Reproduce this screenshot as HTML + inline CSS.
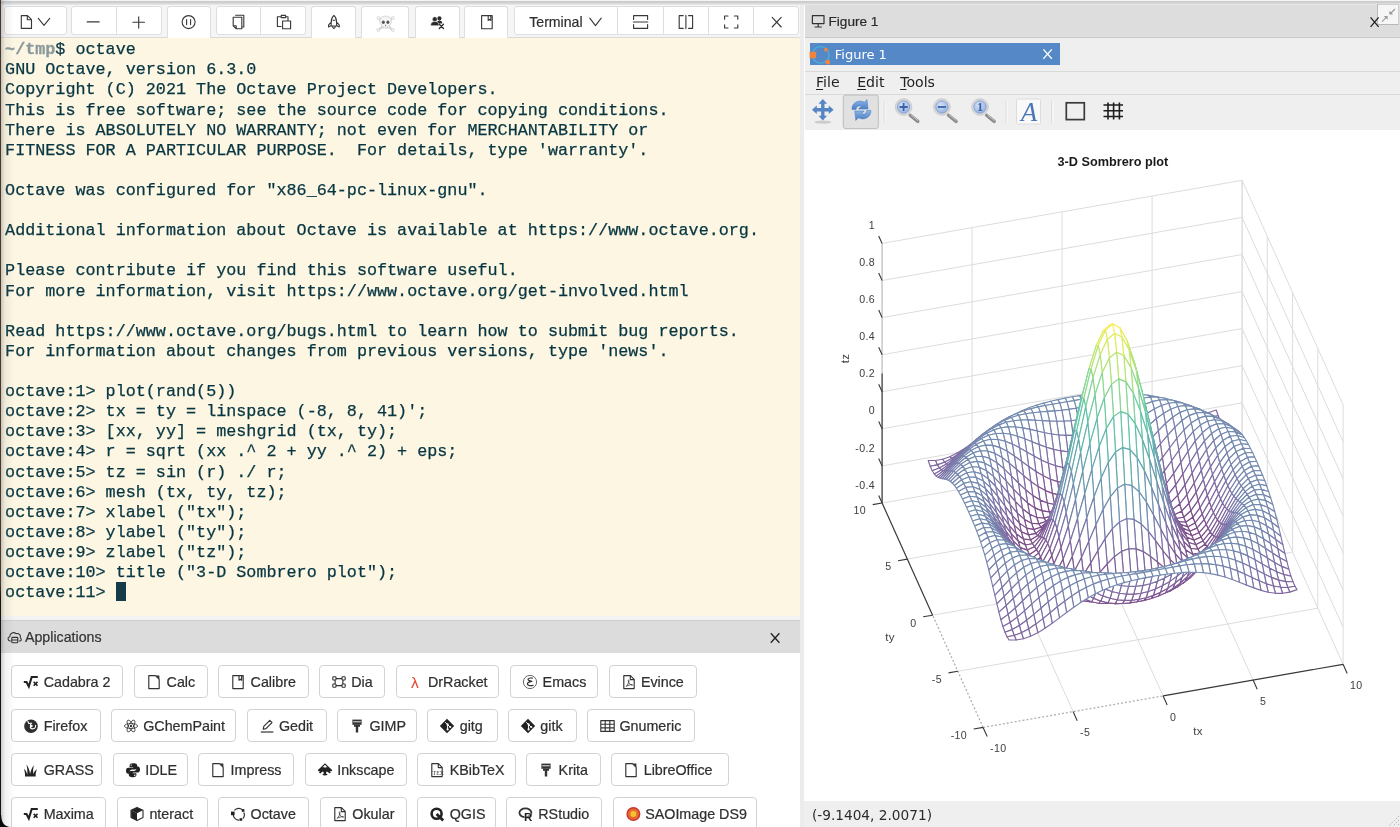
<!DOCTYPE html>
<html lang="en"><head><meta charset="utf-8"><title>Figure 1</title>
<style>
*{box-sizing:border-box;margin:0;padding:0}
html,body{width:1400px;height:827px;overflow:hidden;background:#fff}
body{position:relative;font-family:"Liberation Sans",Arial,sans-serif;font-size:14px;color:#333}
#root{position:absolute;left:0;top:0;width:1400px;height:827px;overflow:hidden;will-change:transform}
.abs{position:absolute}
#topstrip{left:0;top:0;width:1400px;height:5px;background:linear-gradient(#f4f4f4 0,#f4f4f4 1px,#c9cbcc 1.2px,#cfd1d2 3.3px,#dfdfdf 3.6px,#e5e5e5 4.6px,#f0f0f0 4.6px)}
#ltool{left:0;top:4.5px;width:800.4px;height:33.3px;background:#f5f5f5;border-bottom:1px solid #dadada}
.tb{position:absolute;top:1.7px;height:29.2px;background:#fff;border:1px solid #dedede;border-radius:3px}
.tb.tab{height:32.4px;border-bottom:none;border-radius:3px 3px 0 0}
.tb i{position:absolute;top:0;bottom:0;width:1px;background:#dedede}
.tb svg{position:absolute;overflow:visible}
#term{left:0;top:37.8px;width:800.4px;height:577.8px;background:#fdf6e3;overflow:hidden}
#term pre{position:absolute;left:5.1px;height:20px;font-family:"Liberation Mono","DejaVu Sans Mono",monospace;font-size:16.75px;line-height:20px;color:#073642;white-space:pre;-webkit-text-stroke:0.25px #073642}
#term pre b{color:#8a9a9b;-webkit-text-stroke:0.3px #8a9a9b}
#cursor{left:115.7px;top:581.7px;width:10px;height:19.7px;background:#153a48}
#lgap{left:0;top:615.6px;width:800.4px;height:4.6px;background:#f3f3f3}
#apphead{left:0;top:620px;width:800.4px;height:33.8px;background:#dcdcdc;border-top:1px solid #cfcfcf;border-bottom:1px solid #cdcdcd}
#apphead span{-webkit-text-stroke:.2px #333;position:absolute;left:25px;top:8px;font-size:14.2px;color:#333;line-height:16px}
#apps{left:0;top:653.4px;width:800.4px;height:174px;background:#fff;overflow:hidden}
.ab{position:absolute;height:33.5px;-webkit-text-stroke:.22px #303030;border:1px solid #d3d3d3;border-radius:4px;background:#fff;font-size:14.3px;line-height:31.4px;color:#303030;white-space:nowrap}
.ab span{position:absolute;top:0}
.ab svg{position:absolute;overflow:visible}
#leftedge{left:0;top:0;width:14px;height:827px;background:linear-gradient(90deg,rgba(0,0,0,0) 0,rgba(0,0,0,0) 1.2px,rgba(90,90,90,.3) 1.2px,rgba(140,140,140,.12) 5px,rgba(200,200,200,0) 14px)}
#leftstrip{left:0;top:0;width:1.2px;height:827px;background:linear-gradient(180deg,#48372c 0,#48372c 584px,#17130f 596px,#17130f 100%)}
#corner{left:0;top:815px;width:12px;height:12px}
#vsep{left:800.4px;top:5px;width:4px;height:822px;background:#ececec}
#fhead{left:805px;top:4.5px;width:595px;height:33.3px;background:#dddddd;border-bottom:1px solid #c9c9c9}
#fbody{left:805px;top:37.8px;width:595px;height:92px;background:#efefef}
#ftab{left:809.6px;top:43.1px;width:250.8px;height:21.8px;background:#5588c6}
.dj{font-family:"DejaVu Sans","Liberation Sans",sans-serif}
.hl{position:absolute;left:805px;width:595px;height:1px;background:#d9d9d9}
#canvas{left:804.3px;top:129.6px;width:596px;height:672px;background:#fff}
svg.plot{position:absolute;left:805px;top:130px}
#status{left:804.3px;top:801.4px;width:596px;height:26px;background:#efefef}
#status span{position:absolute;left:7.6px;top:4.6px;font-size:13.7px;line-height:18px;color:#2b2b2b}
#cornerbox{left:1377.4px;top:3.6px;width:22px;height:21.6px;background:#f6f6f6;border:1px solid #d0d0d0;border-left-color:#b9b9b9;border-bottom-color:#b9b9b9}

</style></head>
<body>
<div id="root">
<div class="abs" id="topstrip"></div>
<div class="abs" id="ltool">
<div class="tb" style="left:3.5px;width:63.0px"></div>
<div class="tb" style="left:70.5px;width:91.0px"><i style="left:44.2px"></i></div>
<div class="tb tab" style="left:166.5px;width:44.9px"></div>
<div class="tb" style="left:215.7px;width:90.3px"><i style="left:43.8px"></i></div>
<div class="tb tab" style="left:311.4px;width:45.0px"></div>
<div class="tb tab" style="left:361.4px;width:47.9px"></div>
<div class="tb tab" style="left:415.0px;width:44.7px"></div>
<div class="tb tab" style="left:464.3px;width:43.6px"></div>
<div class="tb" style="left:513.6px;width:285.0px"><i style="left:102.8px"></i><i style="left:148.2px"></i><i style="left:193.2px"></i><i style="left:238.5px"></i></div>
<span class="abs" style="left:529.3px;top:9.1px;font-size:14.1px;line-height:16px;color:#303030;-webkit-text-stroke:.2px #303030">Terminal</span>
</div>
<svg class="abs" style="left:0;top:0" width="800" height="38" viewBox="0 0 800 38"><path d="M21.3 15.6h6.2l4 4v8.8h-10.2z M27.3 15.8v4h4" stroke="#383838" stroke-width="1.12" fill="none" stroke-linecap="round" stroke-linejoin="round"/><path d="M38.3 18.4l5.7 7 5.7-7" stroke="#383838" stroke-width="1.12" fill="none" stroke-linecap="round" stroke-linejoin="round"/><path d="M87.2 21.9h12" stroke="#383838" stroke-width="1.12" fill="none" stroke-linecap="round" stroke-linejoin="round"/><path d="M132.9 22.3h11.6M138.7 16.7v11.4" stroke="#383838" stroke-width="1.12" fill="none" stroke-linecap="round" stroke-linejoin="round"/><circle cx="188.6" cy="22.1" r="6.5" stroke="#383838" stroke-width="1.12" fill="none" stroke-linecap="round" stroke-linejoin="round"/><path d="M186.6 19.6v5M190.6 19.6v5" stroke="#383838" stroke-width="1.12" fill="none" stroke-linecap="round" stroke-linejoin="round"/><path d="M235.600 15.300h8.200v11.700h-1.200M233.200 17.200h8.600v11.600h-5.600l-3-3zM236.200 28.600v-2.800h-2.800" stroke="#383838" stroke-width="1.12" fill="none" stroke-linecap="round" stroke-linejoin="round"/><path d="M281.200 26.500h-3.800v-9.800h3M285.600 16.700h2.400v3.400M281.200 15.400h4.400v2.200h-4.400zM282.600 21h8v7.800h-8z" stroke="#383838" stroke-width="1.12" fill="none" stroke-linecap="round" stroke-linejoin="round"/><path d="M333.900 15.400c1.900 1.700 2.700 4 2.700 6.800v3.800h-5.400v-3.800c0-2.800.8-5.100 2.700-6.800zM331.200 22.200l-2.600 2.600v2.200l2.600-1.400M336.600 22.200l2.600 2.600v2.200l-2.600-1.400M332.300 26.200c.3 1.400.8 2.100 1.600 2.400.8-.3 1.300-1 1.600-2.400" stroke="#383838" stroke-width="1.12" fill="none" stroke-linecap="round" stroke-linejoin="round"/><path d="M333.100 20.300h1.600" stroke="#383838" stroke-width="1.100" stroke-linecap="round"/><g transform="translate(0 1)"><path d="M378.600 17.200l14 11.600M392.600 17.200l-14 11.600" stroke="#d9d9d9" stroke-width="2.400" stroke-linecap="round"/><g fill="#f2f2f2" stroke="#cfcfcf" stroke-width=".6"><circle cx="378.300" cy="17" r="1.500"/><circle cx="392.900" cy="17" r="1.500"/><circle cx="378.300" cy="29" r="1.500"/><circle cx="392.900" cy="29" r="1.500"/></g><path d="M385.600 15c3.700 0 5.900 2.400 5.900 5.400 0 1.900-.9 3.200-2.200 4v2.600h-7.400v-2.600c-1.300-.8-2.200-2.100-2.200-4 0-3 2.200-5.400 5.900-5.400z" fill="#f4f4f4" stroke="#c9c9c9" stroke-width=".7"/><ellipse cx="383.300" cy="21.200" rx="1.500" ry="1.700" fill="#555"/><ellipse cx="387.900" cy="21.200" rx="1.500" ry="1.700" fill="#555"/><path d="M385.600 23.400l-.8 1.600h1.600z" fill="#777"/><path d="M383.600 27v-1.600M385.600 27v-1.600M387.600 27v-1.600" stroke="#bbb" stroke-width=".5"/></g><g fill="#2b2b2b"><circle cx="439.400" cy="18.300" r="2.100"/><path d="M436.600 23.200c.4-1.800 1.400-2.700 2.900-2.700 1.700 0 2.700 1.100 2.900 3.100h-3.200z"/><circle cx="434.800" cy="19.200" r="2.500" stroke="#fff" stroke-width=".6"/><path d="M430.600 25.700c0-3 1.700-4.300 4.200-4.300s4.200 1.300 4.200 4.300z" stroke="#fff" stroke-width=".5"/></g><path d="M439.300 24.300l4.200 4.200M443.500 24.300l-4.200 4.200" stroke="#2b2b2b" stroke-width="1.300" stroke-linecap="round"/><path d="M481.600 15.600h10.600v13.200h-10.600z M488.200 15.800v4.600l1.300-1 1.300 1v-4.600" stroke="#383838" stroke-width="1.12" fill="none" stroke-linecap="round" stroke-linejoin="round"/><path d="M589.800 18.200l5.700 7.400 5.700-7.400" stroke="#383838" stroke-width="1.12" fill="none" stroke-linecap="round" stroke-linejoin="round"/><path d="M633.600 19.400v-3.800h14v3.800M633.600 24.600v3.800h14v-3.800M633.400 22h14.400" stroke="#383838" stroke-width="1.12" fill="none" stroke-linecap="round" stroke-linejoin="round"/><path d="M683.200 15.600h-4v12.800h4M688.600 15.600h4v12.800h-4M685.900 15.400v13.200" stroke="#383838" stroke-width="1.12" fill="none" stroke-linecap="round" stroke-linejoin="round"/><path d="M724.600 19.200v-3.200h3.400M734.400 16h3.400v3.200M737.800 24.800v3.200h-3.400M728 28h-3.400v-3.200" stroke="#383838" stroke-width="1.12" fill="none" stroke-linecap="round" stroke-linejoin="round"/><path d="M772.200 17.400l9 9.600M781.200 17.400l-9 9.600" stroke="#383838" stroke-width="1.12" fill="none" stroke-linecap="round" stroke-linejoin="round"/></svg>
<div class="abs" id="term"><pre style="top:2.2px"><b>~/tmp</b>$ octave</pre><pre style="top:22.2px">GNU Octave, version 6.3.0</pre><pre style="top:42.2px">Copyright (C) 2021 The Octave Project Developers.</pre><pre style="top:63.2px">This is free software; see the source code for copying conditions.</pre><pre style="top:83.2px">There is ABSOLUTELY NO WARRANTY; not even for MERCHANTABILITY or</pre><pre style="top:103.2px">FITNESS FOR A PARTICULAR PURPOSE.  For details, type 'warranty'.</pre><pre style="top:143.2px">Octave was configured for "x86_64-pc-linux-gnu".</pre><pre style="top:183.2px">Additional information about Octave is available at https://www.octave.org.</pre><pre style="top:223.2px">Please contribute if you find this software useful.</pre><pre style="top:244.2px">For more information, visit https://www.octave.org/get-involved.html</pre><pre style="top:284.2px">Read https://www.octave.org/bugs.html to learn how to submit bug reports.</pre><pre style="top:304.2px">For information about changes from previous versions, type 'news'.</pre><pre style="top:344.2px">octave:1&gt; plot(rand(5))</pre><pre style="top:364.2px">octave:2&gt; tx = ty = linspace (-8, 8, 41)';</pre><pre style="top:384.2px">octave:3&gt; [xx, yy] = meshgrid (tx, ty);</pre><pre style="top:404.2px">octave:4&gt; r = sqrt (xx .^ 2 + yy .^ 2) + eps;</pre><pre style="top:425.2px">octave:5&gt; tz = sin (r) ./ r;</pre><pre style="top:445.2px">octave:6&gt; mesh (tx, ty, tz);</pre><pre style="top:465.2px">octave:7&gt; xlabel ("tx");</pre><pre style="top:485.2px">octave:8&gt; ylabel ("ty");</pre><pre style="top:505.2px">octave:9&gt; zlabel ("tz");</pre><pre style="top:525.2px">octave:10&gt; title ("3-D Sombrero plot");</pre><pre style="top:545.2px">octave:11&gt; </pre></div>
<div class="abs" id="cursor"></div>
<div class="abs" id="lgap"></div>
<div class="abs" id="apphead"><span>Applications</span></div>
<div class="abs" id="apps">
<div class="ab" style="left:11.4px;top:11.2px;width:112.0px"><svg width="14" height="16" style="left:12px;top:8px"><path d="M-.2 8h2.700l2.300 4.500 2.900-9.500h6.100" stroke="#222" stroke-width="2.100" fill="none" stroke-linejoin="miter"/><path d="M9.700 7.900l3.800 3.800M13.500 7.900l-3.800 3.800" stroke="#222" stroke-width="1.600" fill="none"/></svg><span style="left:31.3px;top:1.3px">Cadabra 2</span></div>
<div class="ab" style="left:134.3px;top:11.2px;width:73.4px"><svg width="14" height="16" style="left:12px;top:8px"><path d="M1.800 1.600h6.600l3.800 3.800v9.200h-10.400z" stroke="#333" stroke-width="1.15" fill="none" stroke-linecap="round" stroke-linejoin="round"/><path d="M8.600 1.400h3.800v3.800z" fill="#333"/></svg><span style="left:31.3px;top:1.3px">Calc</span></div>
<div class="ab" style="left:218.3px;top:11.2px;width:90.3px"><svg width="14" height="16" style="left:12px;top:8px"><path d="M1.800 1.600h10.400v13h-10.400z M8 1.800v4.400l1.300-1 1.300 1v-4.400" stroke="#333" stroke-width="1.15" fill="none" stroke-linecap="round" stroke-linejoin="round"/></svg><span style="left:31.3px;top:1.3px">Calibre</span></div>
<div class="ab" style="left:319.0px;top:11.2px;width:65.9px"><svg width="14" height="16" style="left:12px;top:8px"><path d="M3.600 4.600h6.800M3.600 11.600h6.800M2.600 5.600c1 1.600 1 3.400 0 5M11.400 5.600c-1 1.600-1 3.400 0 5" stroke="#333" stroke-width="1.100" fill="none"/><g fill="#fff" stroke="#333" stroke-width="1.100"><rect x=".8" y="2.800" width="3.200" height="3.200" rx=".8"/><rect x="10" y="2.800" width="3.200" height="3.200" rx=".8"/><rect x=".8" y="10" width="3.200" height="3.200" rx=".8"/><rect x="10" y="10" width="3.200" height="3.200" rx=".8"/></g></svg><span style="left:31.3px;top:1.3px">Dia</span></div>
<div class="ab" style="left:395.7px;top:11.2px;width:103.7px"><svg width="14" height="16" style="left:12px;top:8px"><text x="2" y="13.500" font-family="Liberation Sans,Arial,sans-serif" font-size="15.500" fill="#e2442f">λ</text></svg><span style="left:31.3px;top:1.3px">DrRacket</span></div>
<div class="ab" style="left:510.3px;top:11.2px;width:87.7px"><svg width="14" height="16" style="left:12px;top:8px"><circle cx="7" cy="8" r="6.600" stroke="#444" stroke-width=".8" fill="none"/><path d="M9.400 4.200c-2.200-.6-4.600.2-4.400 1.400.2 1.200 3 1.200 3.600 1.800-2 .4-4.400 1.400-4.200 2.800.2 1.600 3.600 1.800 5.600 1.200" stroke="#333" stroke-width="1.200" fill="none" stroke-linecap="round"/></svg><span style="left:31.3px;top:1.3px">Emacs</span></div>
<div class="ab" style="left:608.6px;top:11.2px;width:88.0px"><svg width="14" height="16" style="left:12px;top:8px"><path d="M1.800 1.600h6.600l3.800 3.800v9.200h-10.400z M8.300 1.800v3.800h3.800" stroke="#333" stroke-width="1.15" fill="none" stroke-linecap="round" stroke-linejoin="round"/><path d="M4.200 12.400c1.600-1.600 2.600-3.800 2.800-5.800.1-.8-.8-.8-.8 0 .2 2 1.600 3.800 3.800 4.600.8.300.8-.6 0-.6-2 0-4.200.8-5.800 1.800z" stroke="#333" stroke-width=".8" fill="none"/></svg><span style="left:31.3px;top:1.3px">Evince</span></div>
<div class="ab" style="left:11.4px;top:55.2px;width:89.2px"><svg width="14" height="16" style="left:12px;top:8px"><circle cx="7" cy="8.300" r="6.800" fill="#2e2e2e"/><path d="M3.800 3.200c.6 1 .4 1.800 1.200 2.400.8-.4 1.800-.4 2.600-.2-.8.600-1.400 1.200-1.200 2.200h1.800c.2.800-1 1.200-1.800 1-.6 1.400 1 2.400 2.600 2.200 1.800-.2 2.800-1.600 2.600-3.400" stroke="#fff" stroke-width="1.100" fill="none" stroke-linecap="round" stroke-linejoin="round"/></svg><span style="left:31.3px;top:1.3px">Firefox</span></div>
<div class="ab" style="left:110.9px;top:55.2px;width:125.1px"><svg width="14" height="16" style="left:12px;top:8px"><g stroke="#333" stroke-width=".8" fill="none"><ellipse cx="7" cy="8" rx="6.600" ry="2.500"/><ellipse cx="7" cy="8" rx="6.600" ry="2.500" transform="rotate(60 7 8)"/><ellipse cx="7" cy="8" rx="6.600" ry="2.500" transform="rotate(120 7 8)"/></g><circle cx="7" cy="8" r="1.200" fill="#333"/></svg><span style="left:31.3px;top:1.3px">GChemPaint</span></div>
<div class="ab" style="left:246.6px;top:55.2px;width:80.0px"><svg width="14" height="16" style="left:12px;top:8px"><path d="M0.800 14h12.600" stroke="#333" stroke-width="1.200"/><path d="M3.200 11.200l.6-2.800 6-6 2.200 2.200-6 6z" stroke="#333" stroke-width="1.15" fill="none" stroke-linecap="round" stroke-linejoin="round"/></svg><span style="left:31.3px;top:1.3px">Gedit</span></div>
<div class="ab" style="left:337.1px;top:55.2px;width:80.0px"><svg width="14" height="16" style="left:12px;top:8px"><path d="M2.400 1.600h9.200v5.200h-9.200z" fill="#333"/><path d="M3.200 3.800h7.600" stroke="#fff" stroke-width=".9"/><path d="M4 6.800h6v2h-6z M5.800 8.800h2.400v5.600h-2.400z" fill="#333"/></svg><span style="left:31.3px;top:1.3px">GIMP</span></div>
<div class="ab" style="left:427.4px;top:55.2px;width:70.3px"><svg width="14" height="16" style="left:12px;top:8px"><path d="M7 .8l7.200 7.200-7.200 7.200-7.200-7.200z" fill="#222"/><path d="M5.200 4.200l2.400 2.400v5M7.600 6.600l2.400 2.400" stroke="#fff" stroke-width="1" fill="none"/><circle cx="7.600" cy="6.400" r="1.100" fill="#fff"/><circle cx="7.600" cy="11.400" r="1.100" fill="#fff"/><circle cx="10.200" cy="9" r="1.100" fill="#fff"/></svg><span style="left:31.3px;top:1.3px">gitg</span></div>
<div class="ab" style="left:508.0px;top:55.2px;width:69.1px"><svg width="14" height="16" style="left:12px;top:8px"><path d="M7 .8l7.200 7.200-7.200 7.200-7.200-7.200z" fill="#222"/><path d="M5.200 4.200l2.400 2.400v5M7.600 6.600l2.400 2.400" stroke="#fff" stroke-width="1" fill="none"/><circle cx="7.600" cy="6.400" r="1.100" fill="#fff"/><circle cx="7.600" cy="11.400" r="1.100" fill="#fff"/><circle cx="10.200" cy="9" r="1.100" fill="#fff"/></svg><span style="left:31.3px;top:1.3px">gitk</span></div>
<div class="ab" style="left:587.1px;top:55.2px;width:107.8px"><svg width="14" height="16" style="left:12px;top:8px"><path d="M.8 2.600h13.400v10.800h-13.400zM.8 6.200h13.400M.8 9.800h13.400M5.200 2.600v10.800M9.800 2.600v10.800" stroke="#333" stroke-width="1.15" fill="none" stroke-linecap="round" stroke-linejoin="round"/></svg><span style="left:31.3px;top:1.3px">Gnumeric</span></div>
<div class="ab" style="left:11.4px;top:99.2px;width:90.9px"><svg width="14" height="16" style="left:12px;top:8px"><path d="M1 14.600c.2-2.800-.2-5.400-1.200-7.800 2 1.700 3.100 3.900 3.500 6.100.2-3.700 0-7.200-.9-10.400 2.200 2.800 3.300 6.100 3.700 9.600.6-3.300 1.700-6.300 3.700-8.900-.7 3-.9 6.100-.7 9.100.7-2 2-3.700 3.900-5-1.100 2.400-1.500 4.800-1.300 7.300z" fill="#222"/></svg><span style="left:31.3px;top:1.3px">GRASS</span></div>
<div class="ab" style="left:112.9px;top:99.2px;width:74.8px"><svg width="14" height="16" style="left:12px;top:8px"><path d="M6.800 1.200c-2 0-3.200.8-3.200 2.200v1.800h3.600v.6h-5c-1.400 0-2.200 1.200-2.200 3s.8 3 2.200 3h1.400v-2c0-1.400 1-2.400 2.400-2.400h3.200c1.200 0 2-.8 2-2v-2c0-1.400-1.400-2.200-3.200-2.200zM5.200 2.400c.4 0 .8.300.8.700s-.4.700-.8.700-.7-.3-.7-.7.300-.7.700-.7z" fill="#222"/><path d="M7.200 15.200c2 0 3.200-.8 3.200-2.200v-1.800h-3.600v-.6h5c1.400 0 2.200-1.200 2.200-3s-.8-3-2.200-3h-1.400v2c0 1.400-1 2.400-2.400 2.400h-3.200c-1.200 0-2 .8-2 2v2c0 1.400 1.400 2.200 3.200 2.200zM8.800 14c-.4 0-.8-.3-.8-.7s.4-.7.800-.7.700.300.700.7-.3.700-.7.700z" fill="#222"/></svg><span style="left:31.3px;top:1.3px">IDLE</span></div>
<div class="ab" style="left:198.3px;top:99.2px;width:96.0px"><svg width="14" height="16" style="left:12px;top:8px"><path d="M1.800 1.600h6.600l3.800 3.800v9.200h-10.400z" stroke="#333" stroke-width="1.15" fill="none" stroke-linecap="round" stroke-linejoin="round"/><path d="M8.600 1.400h3.800v3.800z" fill="#333"/></svg><span style="left:31.3px;top:1.3px">Impress</span></div>
<div class="ab" style="left:304.9px;top:99.2px;width:102.2px"><svg width="14" height="16" style="left:12px;top:8px"><path d="M7 1.200l6.800 6.600c.6.800.2 1.400-.6 1.400h-1.600l1.400 1.400-1.600.6-2-1.400h-1l-.4 1.600 1.800 1.400c-1.800 1-4 1-5.600 0l1.600-1.400-.4-1.600h-1.200l-1.800 1.600-1.600-.8 1.400-1.400h-1.400c-.8 0-1.200-.6-.6-1.400z" fill="#222"/><path d="M7 2.800l2.600 2.800-1.600-.6-1 1-1-1-1.600.6z" fill="#fff"/></svg><span style="left:31.3px;top:1.3px">Inkscape</span></div>
<div class="ab" style="left:417.4px;top:99.2px;width:98.3px"><svg width="14" height="16" style="left:12px;top:8px"><path d="M1.800 1.600h6.600l3.800 3.800v9.200h-10.400z M8.300 1.800v3.800h3.800" stroke="#333" stroke-width="1.15" fill="none" stroke-linecap="round" stroke-linejoin="round"/><text x="2.600" y="12.800" font-family="Liberation Serif,serif" font-size="5.800" fill="#333">TEX</text></svg><span style="left:31.3px;top:1.3px">KBibTeX</span></div>
<div class="ab" style="left:526.3px;top:99.2px;width:74.8px"><svg width="14" height="16" style="left:12px;top:8px"><path d="M2.400 1.600h9.200v5.200h-9.200z" fill="#333"/><path d="M3.200 3.800h7.600" stroke="#fff" stroke-width=".9"/><path d="M4 6.800h6v2h-6z M5.800 8.800h2.400v5.600h-2.400z" fill="#333"/></svg><span style="left:31.3px;top:1.3px">Krita</span></div>
<div class="ab" style="left:611.4px;top:99.2px;width:117.5px"><svg width="14" height="16" style="left:12px;top:8px"><path d="M1.800 1.600h6.600l3.800 3.800v9.200h-10.400z" stroke="#333" stroke-width="1.15" fill="none" stroke-linecap="round" stroke-linejoin="round"/><path d="M8.600 1.400h3.800v3.800z" fill="#333"/></svg><span style="left:31.3px;top:1.3px">LibreOffice</span></div>
<div class="ab" style="left:11.4px;top:143.2px;width:94.9px"><svg width="14" height="16" style="left:12px;top:8px"><path d="M-.2 8h2.700l2.300 4.500 2.900-9.500h6.100" stroke="#222" stroke-width="2.100" fill="none" stroke-linejoin="miter"/><path d="M9.700 7.900l3.800 3.800M13.500 7.900l-3.800 3.800" stroke="#222" stroke-width="1.600" fill="none"/></svg><span style="left:31.3px;top:1.3px">Maxima</span></div>
<div class="ab" style="left:117.1px;top:143.2px;width:90.6px"><svg width="14" height="16" style="left:12px;top:8px"><path d="M7 1.400l6 2.800v7.400l-6 3-6-3v-7.400z" stroke="#333" stroke-width="1.15" fill="none" stroke-linecap="round" stroke-linejoin="round"/><path d="M1.200 4.300l5.800 2.900 5.800-2.900-5.800-2.700z" fill="#222"/><path d="M7 7.200v7.200l-5.800-2.900v-7.200z" fill="#222"/></svg><span style="left:31.3px;top:1.3px">nteract</span></div>
<div class="ab" style="left:218.3px;top:143.2px;width:91.1px"><svg width="14" height="16" style="left:12px;top:8px"><path d="M3.400 4.400a5.600 5.600 0 0 1 8-.6M12.800 6.400a5.600 5.600 0 0 1-1 6.200M8.400 14a5.600 5.600 0 0 1-6.200-5.400" stroke="#333" stroke-width="1.200" fill="none"/><rect x="0" y="5.600" width="3.600" height="3.600" fill="#222"/><rect x="10.800" y="3.200" width="2.600" height="2.600" fill="#222"/><rect x="8.600" y="12.200" width="2.600" height="2.600" fill="#222"/></svg><span style="left:31.3px;top:1.3px">Octave</span></div>
<div class="ab" style="left:320.0px;top:143.2px;width:87.0px"><svg width="14" height="16" style="left:12px;top:8px"><path d="M1.800 1.600h6.600l3.800 3.800v9.200h-10.400z M8.300 1.800v3.800h3.800" stroke="#333" stroke-width="1.15" fill="none" stroke-linecap="round" stroke-linejoin="round"/><path d="M4.200 12.400c1.600-1.600 2.600-3.800 2.800-5.800.1-.8-.8-.8-.8 0 .2 2 1.600 3.800 3.800 4.600.8.300.8-.6 0-.6-2 0-4.200.8-5.800 1.800z" stroke="#333" stroke-width=".8" fill="none"/></svg><span style="left:31.3px;top:1.3px">Okular</span></div>
<div class="ab" style="left:417.4px;top:143.2px;width:78.3px"><svg width="14" height="16" style="left:12px;top:8px"><circle cx="6.600" cy="7.800" r="5" stroke="#222" stroke-width="2.600" fill="none"/><path d="M6.600 8l6.600 6.600" stroke="#222" stroke-width="2.800"/></svg><span style="left:31.3px;top:1.3px">QGIS</span></div>
<div class="ab" style="left:506.0px;top:143.2px;width:96.3px"><svg width="14" height="16" style="left:12px;top:8px"><ellipse cx="6.400" cy="6.800" rx="6" ry="4.400" stroke="#333" stroke-width="1.800" fill="none"/><text x="5" y="14.600" font-family="Liberation Sans,Arial,sans-serif" font-weight="bold" font-size="11.500" fill="#222" stroke="#fff" stroke-width=".5" paint-order="stroke">R</text></svg><span style="left:31.3px;top:1.3px">RStudio</span></div>
<div class="ab" style="left:612.9px;top:143.2px;width:144.2px"><svg width="14" height="16" style="left:12px;top:8px"><circle cx="7.400" cy="8" r="7" fill="#c8372d"/><circle cx="7.400" cy="8" r="5.600" fill="#e8682f"/><circle cx="7.400" cy="8" r="3" fill="#f2c230"/></svg><span style="left:31.3px;top:1.3px">SAOImage DS9</span></div>
</div>
<svg class="abs" style="left:0;top:620px" width="800" height="34" viewBox="0 620 800 34"><path d="M10.400 641c-2.700 0-3.300-3.600-.7-4.300.2-3.600 3.900-5.100 6.300-3.100 3.100-.7 5.200 1.900 4.300 4.300 1.900 1.200 1 3.300-1 3.100" stroke="#333" stroke-width="1.100" fill="none" stroke-linecap="round" stroke-linejoin="round"/><rect x="11.800" y="637.400" width="6" height="5.400" rx=".9" stroke="#333" stroke-width="1.100" fill="none" stroke-linecap="round" stroke-linejoin="round"/><path d="M12 640h5.600" stroke="#333" stroke-width="1.100" fill="none" stroke-linecap="round" stroke-linejoin="round"/><path d="M770.800 633.200l8.600 9.600M779.400 633.200l-8.600 9.600" stroke="#222" stroke-width="1.300" fill="none"/></svg>
<div class="abs" id="leftedge"></div><div class="abs" id="leftstrip"></div>
<svg class="abs" id="corner" viewBox="0 0 12 12"><path d="M0 0v12h10.500c-5.500-.3-9.300-4-9.300-12z" fill="#0b0908"/></svg>
<div class="abs" id="vsep"></div>
<div class="abs" id="fhead"></div>
<div class="abs" id="fbody"></div>
<div class="abs" id="ftab"></div>
<div class="hl" style="top:70.5px"></div>
<div class="hl" style="top:93.7px"></div>
<div class="abs" id="canvas"></div>
<span class="abs" style="left:828.5px;top:13.800px;font-size:13.6px;line-height:16px;color:#2a2a2a;-webkit-text-stroke:.2px #2a2a2a">Figure 1</span>
<span class="abs dj" style="left:834.800px;top:46.800px;font-size:13px;line-height:16px;color:#fff">Figure 1</span>
<span class="abs dj" style="left:816px;top:73.900px;font-size:14.1px;line-height:17px;color:#222;word-spacing:0"><u style="text-decoration-thickness:1px;text-underline-offset:2px">F</u>ile</span>
<span class="abs dj" style="left:857.200px;top:73.900px;font-size:14.1px;line-height:17px;color:#222"><u style="text-decoration-thickness:1px;text-underline-offset:2px">E</u>dit</span>
<span class="abs dj" style="left:900.200px;top:73.900px;font-size:14.1px;line-height:17px;color:#222"><u style="text-decoration-thickness:1px;text-underline-offset:2px">T</u>ools</span>
<div class="abs" id="cornerbox"></div>
<svg class="abs" style="left:805px;top:0" width="595" height="130" viewBox="805 0 595 130"><path d="M812.400 15.600h11.600v8h-11.600zM818.200 23.800v3M815 27h6.400" stroke="#333" stroke-width="1.200" fill="none" stroke-linecap="round" stroke-linejoin="round"/><path d="M1370.600 17.400l8 9.400M1378.600 17.400l-8 9.400" stroke="#222" stroke-width="1.300" fill="none"/><g stroke="#999" stroke-width="1.100" fill="#999"><path d="M1395 9l-4.500 4.500" /><path d="M1389.400 10.800v3.800h3.800z" stroke="none"/><path d="M1382 21.600l4.500-4.500"/><path d="M1387.600 19.800v-3.800h-3.800z" stroke="none"/></g><path d="M1043.400 49.400l8.400 9.400M1051.800 49.400l-8.400 9.400" stroke="#fff" stroke-width="1.300" fill="none"/><circle cx="820.700" cy="54.900" r="8.400" stroke="#49b1dc" stroke-width="1.500" fill="none" opacity=".85"/><rect x="809.600" y="51.700" width="6.500" height="6.600" rx=".6" fill="#f0843c"/><rect x="824.200" y="48" width="3.400" height="3.400" rx=".8" fill="#f0843c"/><rect x="825.600" y="59.900" width="4.300" height="4.300" rx=".6" fill="#f0843c"/><rect x="843.300" y="95" width="35" height="33.600" rx="2.500" fill="#e1e1e1" stroke="#bcbcbc" stroke-width="1"/><defs><linearGradient id="gb" x1="0" y1="0" x2="0" y2="1"><stop offset="0" stop-color="#8db5ea"/><stop offset="1" stop-color="#4a7cc0"/></linearGradient><radialGradient id="gl" cx=".4" cy=".35" r=".8"><stop offset="0" stop-color="#d4e2f6"/><stop offset="1" stop-color="#8aa9dc"/></radialGradient></defs><ellipse cx="822.800" cy="122.200" rx="8.500" ry="1.600" fill="#999" opacity=".4"/><g transform="translate(822.800 109.700)" fill="#5585c5"><path d="M0-10.800L4.300-6H1.700v4.300H6v-2.600L10.800 0 6 4.300V1.700H1.700V6h2.600L0 10.800-4.300 6h2.600V1.700H-6v2.600L-10.800 0-6-4.300v2.600h4.300V-6h-2.600z"/></g><g fill="url(#gb)" stroke="#4f7fc2" stroke-width=".6"><path d="M852 109.600c-.6-6.400 6.400-10.600 12.400-7.400l2.600-2.600 1 9.400h-9.400l2.600-2.800c-2.400-1-5 .4-5.200 3.400z"/><path d="M870.800 110.400c.6 6.400-6.400 10.600-12.400 7.400l-2.600 2.600-1-9.400h9.400l-2.600 2.800c2.400 1 5-.4 5.200-3.400z"/></g><path d="M884.2 101.500v21" stroke="#d4d4d4" stroke-width="1"/><path d="M885.2 101.500v21" stroke="#fbfbfb" stroke-width="1"/><path d="M1006.2 101.500v21" stroke="#d4d4d4" stroke-width="1"/><path d="M1007.2 101.500v21" stroke="#fbfbfb" stroke-width="1"/><path d="M1051.8 101.500v21" stroke="#d4d4d4" stroke-width="1"/><path d="M1052.8 101.500v21" stroke="#fbfbfb" stroke-width="1"/><path d="M910.2 115.2l7.600 6.200" stroke="#8c8c8c" stroke-width="3.400" stroke-linecap="round"/><path d="M911.2 115l6.600 5.400" stroke="#c9c9c9" stroke-width="1" stroke-linecap="round"/><circle cx="903.6" cy="107" r="8.300" fill="#dadada" stroke="#c4c4c4" stroke-width=".8"/><circle cx="903.6" cy="107" r="6.200" fill="url(#gl)" stroke="#7f9ccf" stroke-width=".8"/><path d="M899.600 107h8M903.600 103v8" stroke="#3c62a6" stroke-width="1.800"/><path d="M948.5 115.2l7.600 6.200" stroke="#8c8c8c" stroke-width="3.400" stroke-linecap="round"/><path d="M949.5 115l6.600 5.400" stroke="#c9c9c9" stroke-width="1" stroke-linecap="round"/><circle cx="941.9" cy="107" r="8.300" fill="#dadada" stroke="#c4c4c4" stroke-width=".8"/><circle cx="941.9" cy="107" r="6.200" fill="url(#gl)" stroke="#7f9ccf" stroke-width=".8"/><path d="M937.900 107h8" stroke="#3c62a6" stroke-width="1.800"/><path d="M986.6 115.2l7.600 6.200" stroke="#8c8c8c" stroke-width="3.400" stroke-linecap="round"/><path d="M987.6 115l6.600 5.400" stroke="#c9c9c9" stroke-width="1" stroke-linecap="round"/><circle cx="980" cy="107" r="8.300" fill="#dadada" stroke="#c4c4c4" stroke-width=".8"/><circle cx="980" cy="107" r="6.200" fill="url(#gl)" stroke="#7f9ccf" stroke-width=".8"/><text x="980" y="111.400" text-anchor="middle" font-family="Liberation Serif,serif" font-weight="bold" font-size="12.500" fill="#3c62a6">1</text><rect x="1016.500" y="99" width="24" height="25" rx="1" fill="#f9f9f9" stroke="#dcdcdc" stroke-width="1"/><text x="1029.200" y="121" text-anchor="middle" font-family="Liberation Serif,serif" font-style="italic" font-size="26.500" fill="#4a76b8">A</text><rect x="1066.300" y="102.800" width="18" height="16.800" fill="none" stroke="#3a3a3a" stroke-width="1.700"/><path d="M1103.500 105h19.500M1103.500 110.700h19.500M1103.500 116.500h19.500M1108 102.500v17M1113.600 102.500v17M1119.400 102.500v17" stroke="#1e1e1e" stroke-width="1.600" fill="none"/></svg>
<svg class="plot" viewBox="805 130 595 673" width="595" height="673">
<path d="M1073.1 711.6L972.1 487.2M972.1 487.2L972.1 227.6M1163.1 695.9L1062.1 471.5M1062.1 471.5L1062.1 211.9M1253.1 680.1L1152.1 455.7M1152.1 455.7L1152.1 196.1M957.9 671.3L1317.8 608.2M1317.8 608.2L1317.8 348.6M932.6 615.2L1292.6 552.1M1292.6 552.1L1292.6 292.5M907.4 559.1L1267.3 496M1267.3 496L1267.3 236.4M882.1 503L1242.1 439.9M1242.1 439.9L1343.1 664.3M882.1 465.9L1242.1 402.8M1242.1 402.8L1343.1 627.2M882.1 428.8L1242.1 365.7M1242.1 365.7L1343.1 590.1M882.1 391.7L1242.1 328.6M1242.1 328.6L1343.1 553M882.1 354.7L1242.1 291.6M1242.1 291.6L1343.1 516M882.1 317.6L1242.1 254.5M1242.1 254.5L1343.1 478.9M882.1 280.5L1242.1 217.4M1242.1 217.4L1343.1 441.8M882.1 243.4L1242.1 180.3M1242.1 180.3L1343.1 404.7M1343.1 664.3L1343.1 404.7M1242.1 439.9L1242.1 180.3M1242.1 439.9L1242.1 180.3M882.1 503L882.1 243.4" stroke="#dcdcdc" stroke-width="1" fill="none"/>
<g fill="#fff" stroke-width="1.15" stroke-linejoin="round"><path d="M1211 417L1218.2 415.8L1216.2 410L1209 412.5Z" stroke="#7f659d"/><path d="M1203.8 416.8L1211 417L1209 412.5L1201.8 413.8Z" stroke="#7f659d"/><path d="M1196.6 415.5L1203.8 416.8L1201.8 413.8L1194.6 413.8Z" stroke="#7f68a0"/><path d="M1189.4 413.1L1196.6 415.5L1194.6 413.8L1187.4 412.8Z" stroke="#7f68a0"/><path d="M1182.2 410.2L1189.4 413.1L1187.4 412.8L1180.2 410.9Z" stroke="#7e6ca3"/><path d="M1175 406.8L1182.2 410.2L1180.2 410.9L1173 408.4Z" stroke="#7e6fa5"/><path d="M1167.8 403.5L1175 406.8L1173 408.4L1165.8 405.6Z" stroke="#7c76a9"/><path d="M1160.6 400.4L1167.8 403.5L1165.8 405.6L1158.6 402.7Z" stroke="#7b79aa"/><path d="M1153.4 397.7L1160.6 400.4L1158.6 402.7L1151.4 399.9Z" stroke="#7a7dab"/><path d="M1146.2 395.6L1153.4 397.7L1151.4 399.9L1144.2 397.5Z" stroke="#7880ac"/><path d="M1139 394.1L1146.2 395.6L1144.2 397.5L1137 395.5Z" stroke="#7783ad"/><path d="M1131.8 393.3L1139 394.1L1137 395.5L1129.8 394.1Z" stroke="#7587ae"/><path d="M1124.6 393.2L1131.8 393.3L1129.8 394.1L1122.6 393.1Z" stroke="#7587ae"/><path d="M1117.4 393.5L1124.6 393.2L1122.6 393.1L1115.4 392.6Z" stroke="#748aaf"/><path d="M1110.2 394.3L1117.4 393.5L1115.4 392.6L1108.2 392.6Z" stroke="#748aaf"/><path d="M1103 395.4L1110.2 394.3L1108.2 392.6L1101 393Z" stroke="#748aaf"/><path d="M1095.8 396.6L1103 395.4L1101 393L1093.8 393.6Z" stroke="#748aaf"/><path d="M1088.6 398L1095.8 396.6L1093.8 393.6L1086.6 394.5Z" stroke="#748aaf"/><path d="M1081.4 399.3L1088.6 398L1086.6 394.5L1079.4 395.6Z" stroke="#728daf"/><path d="M1074.2 400.6L1081.4 399.3L1079.4 395.6L1072.2 396.8Z" stroke="#728daf"/><path d="M1067 401.8L1074.2 400.6L1072.2 396.8L1065 398.1Z" stroke="#728daf"/><path d="M1059.8 403L1067 401.8L1065 398.1L1057.8 399.6Z" stroke="#728daf"/><path d="M1052.6 404.2L1059.8 403L1057.8 399.6L1050.6 401.2Z" stroke="#748aaf"/><path d="M1045.4 405.5L1052.6 404.2L1050.6 401.2L1043.4 403.1Z" stroke="#748aaf"/><path d="M1038.2 406.9L1045.4 405.5L1043.4 403.1L1036.2 405.2Z" stroke="#748aaf"/><path d="M1031 408.7L1038.2 406.9L1036.2 405.2L1029 407.8Z" stroke="#748aaf"/><path d="M1023.8 410.8L1031 408.7L1029 407.8L1021.8 410.8Z" stroke="#748aaf"/><path d="M1016.6 413.5L1023.8 410.8L1021.8 410.8L1014.6 414.2Z" stroke="#7587ae"/><path d="M1009.4 416.8L1016.6 413.5L1014.6 414.2L1007.4 418.2Z" stroke="#7587ae"/><path d="M1002.2 420.8L1009.4 416.8L1007.4 418.2L1000.2 422.8Z" stroke="#7783ad"/><path d="M995 425.4L1002.2 420.8L1000.2 422.8L993 427.7Z" stroke="#7880ac"/><path d="M987.8 430.6L995 425.4L993 427.7L985.8 433Z" stroke="#7a7dab"/><path d="M980.6 436.3L987.8 430.6L985.8 433L978.6 438.4Z" stroke="#7b79aa"/><path d="M973.4 442.2L980.6 436.3L978.6 438.4L971.4 443.7Z" stroke="#7c76a9"/><path d="M966.2 448L973.4 442.2L971.4 443.7L964.2 448.7Z" stroke="#7e6fa5"/><path d="M959 453.5L966.2 448L964.2 448.7L957 453.1Z" stroke="#7e6ca3"/><path d="M951.8 458.4L959 453.5L957 453.1L949.8 456.7Z" stroke="#7f68a0"/><path d="M944.6 462.2L951.8 458.4L949.8 456.7L942.6 459.2Z" stroke="#7f68a0"/><path d="M937.4 464.9L944.6 462.2L942.6 459.2L935.4 460.5Z" stroke="#7f659d"/><path d="M930.2 466.2L937.4 464.9L935.4 460.5L928.2 460.5Z" stroke="#7f659d"/><path d="M1213 420L1220.2 420.2L1218.2 415.8L1211 417Z" stroke="#7f659d"/><path d="M1205.8 418.5L1213 420L1211 417L1203.8 416.8Z" stroke="#7f68a0"/><path d="M1198.6 415.9L1205.8 418.5L1203.8 416.8L1196.6 415.5Z" stroke="#7f68a0"/><path d="M1191.4 412.5L1198.6 415.9L1196.6 415.5L1189.4 413.1Z" stroke="#7e6ca3"/><path d="M1184.2 408.7L1191.4 412.5L1189.4 413.1L1182.2 410.2Z" stroke="#7d73a7"/><path d="M1177 405L1184.2 408.7L1182.2 410.2L1175 406.8Z" stroke="#7c76a9"/><path d="M1169.8 401.5L1177 405L1175 406.8L1167.8 403.5Z" stroke="#7b79aa"/><path d="M1162.6 398.6L1169.8 401.5L1167.8 403.5L1160.6 400.4Z" stroke="#7880ac"/><path d="M1155.4 396.5L1162.6 398.6L1160.6 400.4L1153.4 397.7Z" stroke="#7783ad"/><path d="M1148.2 395.2L1155.4 396.5L1153.4 397.7L1146.2 395.6Z" stroke="#7587ae"/><path d="M1141 394.7L1148.2 395.2L1146.2 395.6L1139 394.1Z" stroke="#7587ae"/><path d="M1133.8 395.1L1141 394.7L1139 394.1L1131.8 393.3Z" stroke="#748aaf"/><path d="M1126.6 396.1L1133.8 395.1L1131.8 393.3L1124.6 393.2Z" stroke="#748aaf"/><path d="M1119.4 397.5L1126.6 396.1L1124.6 393.2L1117.4 393.5Z" stroke="#748aaf"/><path d="M1112.2 399.4L1119.4 397.5L1117.4 393.5L1110.2 394.3Z" stroke="#728daf"/><path d="M1105 401.3L1112.2 399.4L1110.2 394.3L1103 395.4Z" stroke="#748aaf"/><path d="M1097.8 403.3L1105 401.3L1103 395.4L1095.8 396.6Z" stroke="#748aaf"/><path d="M1090.6 405.2L1097.8 403.3L1095.8 396.6L1088.6 398Z" stroke="#748aaf"/><path d="M1083.4 406.9L1090.6 405.2L1088.6 398L1081.4 399.3Z" stroke="#748aaf"/><path d="M1076.2 408.3L1083.4 406.9L1081.4 399.3L1074.2 400.6Z" stroke="#748aaf"/><path d="M1069 409.4L1076.2 408.3L1074.2 400.6L1067 401.8Z" stroke="#748aaf"/><path d="M1061.8 410.2L1069 409.4L1067 401.8L1059.8 403Z" stroke="#748aaf"/><path d="M1054.6 410.9L1061.8 410.2L1059.8 403L1052.6 404.2Z" stroke="#748aaf"/><path d="M1047.4 411.4L1054.6 410.9L1052.6 404.2L1045.4 405.5Z" stroke="#748aaf"/><path d="M1040.2 412L1047.4 411.4L1045.4 405.5L1038.2 406.9Z" stroke="#748aaf"/><path d="M1033 412.7L1040.2 412L1038.2 406.9L1031 408.7Z" stroke="#728daf"/><path d="M1025.8 413.7L1033 412.7L1031 408.7L1023.8 410.8Z" stroke="#748aaf"/><path d="M1018.6 415.3L1025.8 413.7L1023.8 410.8L1016.6 413.5Z" stroke="#748aaf"/><path d="M1011.4 417.5L1018.6 415.3L1016.6 413.5L1009.4 416.8Z" stroke="#748aaf"/><path d="M1004.2 420.4L1011.4 417.5L1009.4 416.8L1002.2 420.8Z" stroke="#7587ae"/><path d="M997 424.2L1004.2 420.4L1002.2 420.8L995 425.4Z" stroke="#7587ae"/><path d="M989.8 428.9L997 424.2L995 425.4L987.8 430.6Z" stroke="#7783ad"/><path d="M982.6 434.3L989.8 428.9L987.8 430.6L980.6 436.3Z" stroke="#7880ac"/><path d="M975.4 440.3L982.6 434.3L980.6 436.3L973.4 442.2Z" stroke="#7b79aa"/><path d="M968.2 446.6L975.4 440.3L973.4 442.2L966.2 448Z" stroke="#7c76a9"/><path d="M961 452.9L968.2 446.6L966.2 448L959 453.5Z" stroke="#7d73a7"/><path d="M953.8 458.8L961 452.9L959 453.5L951.8 458.4Z" stroke="#7e6ca3"/><path d="M946.6 463.9L953.8 458.8L951.8 458.4L944.6 462.2Z" stroke="#7f68a0"/><path d="M939.4 468L946.6 463.9L944.6 462.2L937.4 464.9Z" stroke="#7f68a0"/><path d="M932.2 470.7L939.4 468L937.4 464.9L930.2 466.2Z" stroke="#7f659d"/><path d="M1215.1 421.9L1222.3 423.5L1220.2 420.2L1213 420Z" stroke="#7f68a0"/><path d="M1207.9 419.1L1215.1 421.9L1213 420L1205.8 418.5Z" stroke="#7f68a0"/><path d="M1200.7 415.4L1207.9 419.1L1205.8 418.5L1198.6 415.9Z" stroke="#7e6fa5"/><path d="M1193.5 411.3L1200.7 415.4L1198.6 415.9L1191.4 412.5Z" stroke="#7d73a7"/><path d="M1186.3 407.1L1193.5 411.3L1191.4 412.5L1184.2 408.7Z" stroke="#7c76a9"/><path d="M1179.1 403.4L1186.3 407.1L1184.2 408.7L1177 405Z" stroke="#7a7dab"/><path d="M1171.9 400.3L1179.1 403.4L1177 405L1169.8 401.5Z" stroke="#7880ac"/><path d="M1164.7 398.2L1171.9 400.3L1169.8 401.5L1162.6 398.6Z" stroke="#7783ad"/><path d="M1157.5 397.1L1164.7 398.2L1162.6 398.6L1155.4 396.5Z" stroke="#7587ae"/><path d="M1150.3 397.1L1157.5 397.1L1155.4 396.5L1148.2 395.2Z" stroke="#748aaf"/><path d="M1143.1 398L1150.3 397.1L1148.2 395.2L1141 394.7Z" stroke="#748aaf"/><path d="M1135.9 399.8L1143.1 398L1141 394.7L1133.8 395.1Z" stroke="#728daf"/><path d="M1128.7 402.2L1135.9 399.8L1133.8 395.1L1126.6 396.1Z" stroke="#748aaf"/><path d="M1121.5 405L1128.7 402.2L1126.6 396.1L1119.4 397.5Z" stroke="#748aaf"/><path d="M1114.3 408L1121.5 405L1119.4 397.5L1112.2 399.4Z" stroke="#748aaf"/><path d="M1107.1 411L1114.3 408L1112.2 399.4L1105 401.3Z" stroke="#748aaf"/><path d="M1099.9 413.8L1107.1 411L1105 401.3L1097.8 403.3Z" stroke="#7587ae"/><path d="M1092.7 416.2L1099.9 413.8L1097.8 403.3L1090.6 405.2Z" stroke="#7587ae"/><path d="M1085.5 418.2L1092.7 416.2L1090.6 405.2L1083.4 406.9Z" stroke="#7587ae"/><path d="M1078.3 419.7L1085.5 418.2L1083.4 406.9L1076.2 408.3Z" stroke="#7587ae"/><path d="M1071.1 420.7L1078.3 419.7L1076.2 408.3L1069 409.4Z" stroke="#7587ae"/><path d="M1063.9 421.2L1071.1 420.7L1069 409.4L1061.8 410.2Z" stroke="#7587ae"/><path d="M1056.7 421.3L1063.9 421.2L1061.8 410.2L1054.6 410.9Z" stroke="#7587ae"/><path d="M1049.5 421.1L1056.7 421.3L1054.6 410.9L1047.4 411.4Z" stroke="#7587ae"/><path d="M1042.3 420.6L1049.5 421.1L1047.4 411.4L1040.2 412Z" stroke="#748aaf"/><path d="M1035.1 420.2L1042.3 420.6L1040.2 412L1033 412.7Z" stroke="#748aaf"/><path d="M1027.9 419.9L1035.1 420.2L1033 412.7L1025.8 413.7Z" stroke="#748aaf"/><path d="M1020.7 420L1027.9 419.9L1025.8 413.7L1018.6 415.3Z" stroke="#748aaf"/><path d="M1013.5 420.7L1020.7 420L1018.6 415.3L1011.4 417.5Z" stroke="#728daf"/><path d="M1006.3 422.3L1013.5 420.7L1011.4 417.5L1004.2 420.4Z" stroke="#748aaf"/><path d="M999.1 424.9L1006.3 422.3L1004.2 420.4L997 424.2Z" stroke="#748aaf"/><path d="M991.9 428.5L999.1 424.9L997 424.2L989.8 428.9Z" stroke="#7587ae"/><path d="M984.7 433.1L991.9 428.5L989.8 428.9L982.6 434.3Z" stroke="#7783ad"/><path d="M977.5 438.7L984.7 433.1L982.6 434.3L975.4 440.3Z" stroke="#7880ac"/><path d="M970.3 445L977.5 438.7L975.4 440.3L968.2 446.6Z" stroke="#7a7dab"/><path d="M963.1 451.7L970.3 445L968.2 446.6L961 452.9Z" stroke="#7c76a9"/><path d="M955.9 458.3L963.1 451.7L961 452.9L953.8 458.8Z" stroke="#7d73a7"/><path d="M948.7 464.5L955.9 458.3L953.8 458.8L946.6 463.9Z" stroke="#7e6fa5"/><path d="M941.5 469.9L948.7 464.5L946.6 463.9L939.4 468Z" stroke="#7f68a0"/><path d="M934.3 474L941.5 469.9L939.4 468L932.2 470.7Z" stroke="#7f68a0"/><path d="M1217.1 422.8L1224.3 425.7L1222.3 423.5L1215.1 421.9Z" stroke="#7f68a0"/><path d="M1209.9 418.9L1217.1 422.8L1215.1 421.9L1207.9 419.1Z" stroke="#7e6ca3"/><path d="M1202.7 414.5L1209.9 418.9L1207.9 419.1L1200.7 415.4Z" stroke="#7d73a7"/><path d="M1195.5 410L1202.7 414.5L1200.7 415.4L1193.5 411.3Z" stroke="#7c76a9"/><path d="M1188.3 405.9L1195.5 410L1193.5 411.3L1186.3 407.1Z" stroke="#7a7dab"/><path d="M1181.1 402.6L1188.3 405.9L1186.3 407.1L1179.1 403.4Z" stroke="#7880ac"/><path d="M1173.9 400.5L1181.1 402.6L1179.1 403.4L1171.9 400.3Z" stroke="#7587ae"/><path d="M1166.7 399.6L1173.9 400.5L1171.9 400.3L1164.7 398.2Z" stroke="#748aaf"/><path d="M1159.5 400L1166.7 399.6L1164.7 398.2L1157.5 397.1Z" stroke="#748aaf"/><path d="M1152.3 401.6L1159.5 400L1157.5 397.1L1150.3 397.1Z" stroke="#728daf"/><path d="M1145.1 404.3L1152.3 401.6L1150.3 397.1L1143.1 398Z" stroke="#748aaf"/><path d="M1137.9 407.7L1145.1 404.3L1143.1 398L1135.9 399.8Z" stroke="#748aaf"/><path d="M1130.7 411.7L1137.9 407.7L1135.9 399.8L1128.7 402.2Z" stroke="#748aaf"/><path d="M1123.5 415.9L1130.7 411.7L1128.7 402.2L1121.5 405Z" stroke="#7587ae"/><path d="M1116.3 420L1123.5 415.9L1121.5 405L1114.3 408Z" stroke="#7587ae"/><path d="M1109.1 423.9L1116.3 420L1114.3 408L1107.1 411Z" stroke="#7783ad"/><path d="M1101.9 427.4L1109.1 423.9L1107.1 411L1099.9 413.8Z" stroke="#7880ac"/><path d="M1094.7 430.4L1101.9 427.4L1099.9 413.8L1092.7 416.2Z" stroke="#7880ac"/><path d="M1087.5 432.7L1094.7 430.4L1092.7 416.2L1085.5 418.2Z" stroke="#7880ac"/><path d="M1080.3 434.3L1087.5 432.7L1085.5 418.2L1078.3 419.7Z" stroke="#7a7dab"/><path d="M1073.1 435.2L1080.3 434.3L1078.3 419.7L1071.1 420.7Z" stroke="#7a7dab"/><path d="M1065.9 435.4L1073.1 435.2L1071.1 420.7L1063.9 421.2Z" stroke="#7880ac"/><path d="M1058.7 435L1065.9 435.4L1063.9 421.2L1056.7 421.3Z" stroke="#7880ac"/><path d="M1051.5 434L1058.7 435L1056.7 421.3L1049.5 421.1Z" stroke="#7880ac"/><path d="M1044.3 432.7L1051.5 434L1049.5 421.1L1042.3 420.6Z" stroke="#7783ad"/><path d="M1037.1 431L1044.3 432.7L1042.3 420.6L1035.1 420.2Z" stroke="#7587ae"/><path d="M1029.9 429.4L1037.1 431L1035.1 420.2L1027.9 419.9Z" stroke="#7587ae"/><path d="M1022.7 427.9L1029.9 429.4L1027.9 419.9L1020.7 420Z" stroke="#748aaf"/><path d="M1015.5 427L1022.7 427.9L1020.7 420L1013.5 420.7Z" stroke="#748aaf"/><path d="M1008.3 426.9L1015.5 427L1013.5 420.7L1006.3 422.3Z" stroke="#748aaf"/><path d="M1001.1 427.8L1008.3 426.9L1006.3 422.3L999.1 424.9Z" stroke="#728daf"/><path d="M993.9 429.9L1001.1 427.8L999.1 424.9L991.9 428.5Z" stroke="#748aaf"/><path d="M986.7 433.3L993.9 429.9L991.9 428.5L984.7 433.1Z" stroke="#748aaf"/><path d="M979.5 438L986.7 433.3L984.7 433.1L977.5 438.7Z" stroke="#7587ae"/><path d="M972.3 443.8L979.5 438L977.5 438.7L970.3 445Z" stroke="#7880ac"/><path d="M965.1 450.4L972.3 443.8L970.3 445L963.1 451.7Z" stroke="#7a7dab"/><path d="M957.9 457.4L965.1 450.4L963.1 451.7L955.9 458.3Z" stroke="#7c76a9"/><path d="M950.7 464.4L957.9 457.4L955.9 458.3L948.7 464.5Z" stroke="#7d73a7"/><path d="M943.5 470.8L950.7 464.4L948.7 464.5L941.5 469.9Z" stroke="#7e6ca3"/><path d="M936.3 476.1L943.5 470.8L941.5 469.9L934.3 474Z" stroke="#7f68a0"/><path d="M1219.1 423.1L1226.3 427L1224.3 425.7L1217.1 422.8Z" stroke="#7e6ca3"/><path d="M1211.9 418.4L1219.1 423.1L1217.1 422.8L1209.9 418.9Z" stroke="#7d73a7"/><path d="M1204.7 413.6L1211.9 418.4L1209.9 418.9L1202.7 414.5Z" stroke="#7c76a9"/><path d="M1197.5 409.1L1204.7 413.6L1202.7 414.5L1195.5 410Z" stroke="#7a7dab"/><path d="M1190.3 405.6L1197.5 409.1L1195.5 410L1188.3 405.9Z" stroke="#7783ad"/><path d="M1183.1 403.3L1190.3 405.6L1188.3 405.9L1181.1 402.6Z" stroke="#7587ae"/><path d="M1175.9 402.5L1183.1 403.3L1181.1 402.6L1173.9 400.5Z" stroke="#748aaf"/><path d="M1168.7 403.2L1175.9 402.5L1173.9 400.5L1166.7 399.6Z" stroke="#748aaf"/><path d="M1161.5 405.5L1168.7 403.2L1166.7 399.6L1159.5 400Z" stroke="#728daf"/><path d="M1154.3 409L1161.5 405.5L1159.5 400L1152.3 401.6Z" stroke="#748aaf"/><path d="M1147.1 413.4L1154.3 409L1152.3 401.6L1145.1 404.3Z" stroke="#748aaf"/><path d="M1139.9 418.6L1147.1 413.4L1145.1 404.3L1137.9 407.7Z" stroke="#7587ae"/><path d="M1132.7 424L1139.9 418.6L1137.9 407.7L1130.7 411.7Z" stroke="#7783ad"/><path d="M1125.5 429.5L1132.7 424L1130.7 411.7L1123.5 415.9Z" stroke="#7880ac"/><path d="M1118.3 434.6L1125.5 429.5L1123.5 415.9L1116.3 420Z" stroke="#7a7dab"/><path d="M1111.1 439.3L1118.3 434.6L1116.3 420L1109.1 423.9Z" stroke="#7b79aa"/><path d="M1103.9 443.3L1111.1 439.3L1109.1 423.9L1101.9 427.4Z" stroke="#7c76a9"/><path d="M1096.7 446.6L1103.9 443.3L1101.9 427.4L1094.7 430.4Z" stroke="#7c76a9"/><path d="M1089.5 449.1L1096.7 446.6L1094.7 430.4L1087.5 432.7Z" stroke="#7d73a7"/><path d="M1082.3 450.8L1089.5 449.1L1087.5 432.7L1080.3 434.3Z" stroke="#7d73a7"/><path d="M1075.1 451.6L1082.3 450.8L1080.3 434.3L1073.1 435.2Z" stroke="#7d73a7"/><path d="M1067.9 451.7L1075.1 451.6L1073.1 435.2L1065.9 435.4Z" stroke="#7d73a7"/><path d="M1060.7 450.9L1067.9 451.7L1065.9 435.4L1058.7 435Z" stroke="#7c76a9"/><path d="M1053.5 449.4L1060.7 450.9L1058.7 435L1051.5 434Z" stroke="#7c76a9"/><path d="M1046.3 447.3L1053.5 449.4L1051.5 434L1044.3 432.7Z" stroke="#7b79aa"/><path d="M1039.1 444.6L1046.3 447.3L1044.3 432.7L1037.1 431Z" stroke="#7a7dab"/><path d="M1031.9 441.7L1039.1 444.6L1037.1 431L1029.9 429.4Z" stroke="#7880ac"/><path d="M1024.7 438.8L1031.9 441.7L1029.9 429.4L1022.7 427.9Z" stroke="#7783ad"/><path d="M1017.5 436.2L1024.7 438.8L1022.7 427.9L1015.5 427Z" stroke="#7587ae"/><path d="M1010.3 434.2L1017.5 436.2L1015.5 427L1008.3 426.9Z" stroke="#748aaf"/><path d="M1003.1 433.2L1010.3 434.2L1008.3 426.9L1001.1 427.8Z" stroke="#748aaf"/><path d="M995.9 433.5L1003.1 433.2L1001.1 427.8L993.9 429.9Z" stroke="#728daf"/><path d="M988.7 435.3L995.9 433.5L993.9 429.9L986.7 433.3Z" stroke="#748aaf"/><path d="M981.5 438.6L988.7 435.3L986.7 433.3L979.5 438Z" stroke="#748aaf"/><path d="M974.3 443.4L981.5 438.6L979.5 438L972.3 443.8Z" stroke="#7587ae"/><path d="M967.1 449.5L974.3 443.4L972.3 443.8L965.1 450.4Z" stroke="#7783ad"/><path d="M959.9 456.5L967.1 449.5L965.1 450.4L957.9 457.4Z" stroke="#7a7dab"/><path d="M952.7 463.8L959.9 456.5L957.9 457.4L950.7 464.4Z" stroke="#7c76a9"/><path d="M945.5 471L952.7 463.8L950.7 464.4L943.5 470.8Z" stroke="#7d73a7"/><path d="M938.3 477.5L945.5 471L943.5 470.8L936.3 476.1Z" stroke="#7e6ca3"/><path d="M1221.1 423L1228.3 427.7L1226.3 427L1219.1 423.1Z" stroke="#7e6fa5"/><path d="M1213.9 417.9L1221.1 423L1219.1 423.1L1211.9 418.4Z" stroke="#7c76a9"/><path d="M1206.7 413L1213.9 417.9L1211.9 418.4L1204.7 413.6Z" stroke="#7a7dab"/><path d="M1199.5 409.1L1206.7 413L1204.7 413.6L1197.5 409.1Z" stroke="#7880ac"/><path d="M1192.3 406.5L1199.5 409.1L1197.5 409.1L1190.3 405.6Z" stroke="#7587ae"/><path d="M1185.1 405.6L1192.3 406.5L1190.3 405.6L1183.1 403.3Z" stroke="#748aaf"/><path d="M1177.9 406.5L1185.1 405.6L1183.1 403.3L1175.9 402.5Z" stroke="#748aaf"/><path d="M1170.7 409.2L1177.9 406.5L1175.9 402.5L1168.7 403.2Z" stroke="#728daf"/><path d="M1163.5 413.4L1170.7 409.2L1168.7 403.2L1161.5 405.5Z" stroke="#748aaf"/><path d="M1156.3 418.8L1163.5 413.4L1161.5 405.5L1154.3 409Z" stroke="#7587ae"/><path d="M1149.1 425.1L1156.3 418.8L1154.3 409L1147.1 413.4Z" stroke="#7783ad"/><path d="M1141.9 431.8L1149.1 425.1L1147.1 413.4L1139.9 418.6Z" stroke="#7880ac"/><path d="M1134.7 438.5L1141.9 431.8L1139.9 418.6L1132.7 424Z" stroke="#7a7dab"/><path d="M1127.5 444.8L1134.7 438.5L1132.7 424L1125.5 429.5Z" stroke="#7c76a9"/><path d="M1120.3 450.6L1127.5 444.8L1125.5 429.5L1118.3 434.6Z" stroke="#7d73a7"/><path d="M1113.1 455.7L1120.3 450.6L1118.3 434.6L1111.1 439.3Z" stroke="#7e6fa5"/><path d="M1105.9 460L1113.1 455.7L1111.1 439.3L1103.9 443.3Z" stroke="#7e6ca3"/><path d="M1098.7 463.3L1105.9 460L1103.9 443.3L1096.7 446.6Z" stroke="#7f68a0"/><path d="M1091.5 465.9L1098.7 463.3L1096.7 446.6L1089.5 449.1Z" stroke="#7f68a0"/><path d="M1084.3 467.5L1091.5 465.9L1089.5 449.1L1082.3 450.8Z" stroke="#7f68a0"/><path d="M1077.1 468.4L1084.3 467.5L1082.3 450.8L1075.1 451.6Z" stroke="#7f68a0"/><path d="M1069.9 468.4L1077.1 468.4L1075.1 451.6L1067.9 451.7Z" stroke="#7f68a0"/><path d="M1062.7 467.5L1069.9 468.4L1067.9 451.7L1060.7 450.9Z" stroke="#7f68a0"/><path d="M1055.5 465.8L1062.7 467.5L1060.7 450.9L1053.5 449.4Z" stroke="#7e6ca3"/><path d="M1048.3 463.3L1055.5 465.8L1053.5 449.4L1046.3 447.3Z" stroke="#7e6fa5"/><path d="M1041.1 460L1048.3 463.3L1046.3 447.3L1039.1 444.6Z" stroke="#7d73a7"/><path d="M1033.9 456.1L1041.1 460L1039.1 444.6L1031.9 441.7Z" stroke="#7c76a9"/><path d="M1026.7 452L1033.9 456.1L1031.9 441.7L1024.7 438.8Z" stroke="#7a7dab"/><path d="M1019.5 447.8L1026.7 452L1024.7 438.8L1017.5 436.2Z" stroke="#7880ac"/><path d="M1012.3 444.1L1019.5 447.8L1017.5 436.2L1010.3 434.2Z" stroke="#7783ad"/><path d="M1005.1 441.2L1012.3 444.1L1010.3 434.2L1003.1 433.2Z" stroke="#7587ae"/><path d="M997.9 439.5L1005.1 441.2L1003.1 433.2L995.9 433.5Z" stroke="#748aaf"/><path d="M990.7 439.3L997.9 439.5L995.9 433.5L988.7 435.3Z" stroke="#728daf"/><path d="M983.5 441L990.7 439.3L988.7 435.3L981.5 438.6Z" stroke="#748aaf"/><path d="M976.3 444.4L983.5 441L981.5 438.6L974.3 443.4Z" stroke="#748aaf"/><path d="M969.1 449.5L976.3 444.4L974.3 443.4L967.1 449.5Z" stroke="#7587ae"/><path d="M961.9 455.9L969.1 449.5L967.1 449.5L959.9 456.5Z" stroke="#7880ac"/><path d="M954.7 463.3L961.9 455.9L959.9 456.5L952.7 463.8Z" stroke="#7a7dab"/><path d="M947.5 470.9L954.7 463.3L952.7 463.8L945.5 471Z" stroke="#7c76a9"/><path d="M940.3 478.2L947.5 470.9L945.5 471L938.3 477.5Z" stroke="#7e6fa5"/><path d="M1223.1 422.8L1230.3 428.2L1228.3 427.7L1221.1 423Z" stroke="#7c76a9"/><path d="M1215.9 417.6L1223.1 422.8L1221.1 423L1213.9 417.9Z" stroke="#7b79aa"/><path d="M1208.7 413.2L1215.9 417.6L1213.9 417.9L1206.7 413Z" stroke="#7880ac"/><path d="M1201.5 410.2L1208.7 413.2L1206.7 413L1199.5 409.1Z" stroke="#7587ae"/><path d="M1194.3 408.9L1201.5 410.2L1199.5 409.1L1192.3 406.5Z" stroke="#748aaf"/><path d="M1187.1 409.7L1194.3 408.9L1192.3 406.5L1185.1 405.6Z" stroke="#748aaf"/><path d="M1179.9 412.6L1187.1 409.7L1185.1 405.6L1177.9 406.5Z" stroke="#728daf"/><path d="M1172.7 417.3L1179.9 412.6L1177.9 406.5L1170.7 409.2Z" stroke="#748aaf"/><path d="M1165.5 423.5L1172.7 417.3L1170.7 409.2L1163.5 413.4Z" stroke="#7587ae"/><path d="M1158.3 430.8L1165.5 423.5L1163.5 413.4L1156.3 418.8Z" stroke="#7783ad"/><path d="M1151.1 438.6L1158.3 430.8L1156.3 418.8L1149.1 425.1Z" stroke="#7a7dab"/><path d="M1143.9 446.4L1151.1 438.6L1149.1 425.1L1141.9 431.8Z" stroke="#7b79aa"/><path d="M1136.7 453.9L1143.9 446.4L1141.9 431.8L1134.7 438.5Z" stroke="#7d73a7"/><path d="M1129.5 460.7L1136.7 453.9L1134.7 438.5L1127.5 444.8Z" stroke="#7e6ca3"/><path d="M1122.3 466.6L1129.5 460.7L1127.5 444.8L1120.3 450.6Z" stroke="#7f68a0"/><path d="M1115.1 471.5L1122.3 466.6L1120.3 450.6L1113.1 455.7Z" stroke="#7f659d"/><path d="M1107.9 475.5L1115.1 471.5L1113.1 455.7L1105.9 460Z" stroke="#7f619a"/><path d="M1100.7 478.7L1107.9 475.5L1105.9 460L1098.7 463.3Z" stroke="#7f5d97"/><path d="M1093.5 481L1100.7 478.7L1098.7 463.3L1091.5 465.9Z" stroke="#7f5d97"/><path d="M1086.3 482.6L1093.5 481L1091.5 465.9L1084.3 467.5Z" stroke="#7f5d97"/><path d="M1079.1 483.5L1086.3 482.6L1084.3 467.5L1077.1 468.4Z" stroke="#7f5d97"/><path d="M1071.9 483.7L1079.1 483.5L1077.1 468.4L1069.9 468.4Z" stroke="#7f5d97"/><path d="M1064.7 483.1L1071.9 483.7L1069.9 468.4L1062.7 467.5Z" stroke="#7f5d97"/><path d="M1057.5 481.6L1064.7 483.1L1062.7 467.5L1055.5 465.8Z" stroke="#7f619a"/><path d="M1050.3 479.2L1057.5 481.6L1055.5 465.8L1048.3 463.3Z" stroke="#7f659d"/><path d="M1043.1 475.8L1050.3 479.2L1048.3 463.3L1041.1 460Z" stroke="#7f68a0"/><path d="M1035.9 471.5L1043.1 475.8L1041.1 460L1033.9 456.1Z" stroke="#7e6ca3"/><path d="M1028.7 466.6L1035.9 471.5L1033.9 456.1L1026.7 452Z" stroke="#7d73a7"/><path d="M1021.5 461.3L1028.7 466.6L1026.7 452L1019.5 447.8Z" stroke="#7b79aa"/><path d="M1014.3 456L1021.5 461.3L1019.5 447.8L1012.3 444.1Z" stroke="#7a7dab"/><path d="M1007.1 451.3L1014.3 456L1012.3 444.1L1005.1 441.2Z" stroke="#7783ad"/><path d="M999.9 447.6L1007.1 451.3L1005.1 441.2L997.9 439.5Z" stroke="#7587ae"/><path d="M992.7 445.4L999.9 447.6L997.9 439.5L990.7 439.3Z" stroke="#748aaf"/><path d="M985.5 445.1L992.7 445.4L990.7 439.3L983.5 441Z" stroke="#728daf"/><path d="M978.3 446.8L985.5 445.1L983.5 441L976.3 444.4Z" stroke="#748aaf"/><path d="M971.1 450.5L978.3 446.8L976.3 444.4L969.1 449.5Z" stroke="#748aaf"/><path d="M963.9 456.1L971.1 450.5L969.1 449.5L961.9 455.9Z" stroke="#7587ae"/><path d="M956.7 463.1L963.9 456.1L961.9 455.9L954.7 463.3Z" stroke="#7880ac"/><path d="M949.5 470.8L956.7 463.1L954.7 463.3L947.5 470.9Z" stroke="#7b79aa"/><path d="M942.3 478.6L949.5 470.8L947.5 470.9L940.3 478.2Z" stroke="#7c76a9"/><path d="M1225.2 422.9L1232.4 428.5L1230.3 428.2L1223.1 422.8Z" stroke="#7b79aa"/><path d="M1218 418L1225.2 422.9L1223.1 422.8L1215.9 417.6Z" stroke="#7880ac"/><path d="M1210.8 414.3L1218 418L1215.9 417.6L1208.7 413.2Z" stroke="#7783ad"/><path d="M1203.6 412.5L1210.8 414.3L1208.7 413.2L1201.5 410.2Z" stroke="#748aaf"/><path d="M1196.4 412.9L1203.6 412.5L1201.5 410.2L1194.3 408.9Z" stroke="#748aaf"/><path d="M1189.2 415.6L1196.4 412.9L1194.3 408.9L1187.1 409.7Z" stroke="#728daf"/><path d="M1182 420.5L1189.2 415.6L1187.1 409.7L1179.9 412.6Z" stroke="#748aaf"/><path d="M1174.8 427.3L1182 420.5L1179.9 412.6L1172.7 417.3Z" stroke="#7587ae"/><path d="M1167.6 435.3L1174.8 427.3L1172.7 417.3L1165.5 423.5Z" stroke="#7783ad"/><path d="M1160.4 444L1167.6 435.3L1165.5 423.5L1158.3 430.8Z" stroke="#7a7dab"/><path d="M1153.2 452.9L1160.4 444L1158.3 430.8L1151.1 438.6Z" stroke="#7c76a9"/><path d="M1146 461.3L1153.2 452.9L1151.1 438.6L1143.9 446.4Z" stroke="#7e6fa5"/><path d="M1138.8 468.9L1146 461.3L1143.9 446.4L1136.7 453.9Z" stroke="#7f68a0"/><path d="M1131.6 475.5L1138.8 468.9L1136.7 453.9L1129.5 460.7Z" stroke="#7f619a"/><path d="M1124.4 480.8L1131.6 475.5L1129.5 460.7L1122.3 466.6Z" stroke="#7f5d97"/><path d="M1117.2 485L1124.4 480.8L1122.3 466.6L1115.1 471.5Z" stroke="#7f5a93"/><path d="M1110 488.3L1117.2 485L1115.1 471.5L1107.9 475.5Z" stroke="#7e5590"/><path d="M1102.8 490.8L1110 488.3L1107.9 475.5L1100.7 478.7Z" stroke="#7e5590"/><path d="M1095.6 492.6L1102.8 490.8L1100.7 478.7L1093.5 481Z" stroke="#7d518c"/><path d="M1088.4 494.1L1095.6 492.6L1093.5 481L1086.3 482.6Z" stroke="#7d518c"/><path d="M1081.2 495.2L1088.4 494.1L1086.3 482.6L1079.1 483.5Z" stroke="#7d518c"/><path d="M1074 495.8L1081.2 495.2L1079.1 483.5L1071.9 483.7Z" stroke="#7d518c"/><path d="M1066.8 495.9L1074 495.8L1071.9 483.7L1064.7 483.1Z" stroke="#7e5590"/><path d="M1059.6 495.1L1066.8 495.9L1064.7 483.1L1057.5 481.6Z" stroke="#7e5590"/><path d="M1052.4 493.4L1059.6 495.1L1057.5 481.6L1050.3 479.2Z" stroke="#7f5a93"/><path d="M1045.2 490.6L1052.4 493.4L1050.3 479.2L1043.1 475.8Z" stroke="#7f5d97"/><path d="M1038 486.6L1045.2 490.6L1043.1 475.8L1035.9 471.5Z" stroke="#7f619a"/><path d="M1030.8 481.5L1038 486.6L1035.9 471.5L1028.7 466.6Z" stroke="#7f68a0"/><path d="M1023.6 475.6L1030.8 481.5L1028.7 466.6L1021.5 461.3Z" stroke="#7e6fa5"/><path d="M1016.4 469.3L1023.6 475.6L1021.5 461.3L1014.3 456Z" stroke="#7c76a9"/><path d="M1009.2 463.1L1016.4 469.3L1014.3 456L1007.1 451.3Z" stroke="#7a7dab"/><path d="M1002 457.5L1009.2 463.1L1007.1 451.3L999.9 447.6Z" stroke="#7783ad"/><path d="M994.8 453.4L1002 457.5L999.9 447.6L992.7 445.4Z" stroke="#7587ae"/><path d="M987.6 451L994.8 453.4L992.7 445.4L985.5 445.1Z" stroke="#748aaf"/><path d="M980.4 450.8L987.6 451L985.5 445.1L978.3 446.8Z" stroke="#728daf"/><path d="M973.2 452.9L980.4 450.8L978.3 446.8L971.1 450.5Z" stroke="#748aaf"/><path d="M966 457.2L973.2 452.9L971.1 450.5L963.9 456.1Z" stroke="#748aaf"/><path d="M958.8 463.4L966 457.2L963.9 456.1L956.7 463.1Z" stroke="#7783ad"/><path d="M951.6 470.9L958.8 463.4L956.7 463.1L949.5 470.8Z" stroke="#7880ac"/><path d="M944.4 479L951.6 470.9L949.5 470.8L942.3 478.6Z" stroke="#7b79aa"/><path d="M1227.2 423.5L1234.4 429L1232.4 428.5L1225.2 422.9Z" stroke="#7a7dab"/><path d="M1220 419.1L1227.2 423.5L1225.2 422.9L1218 418Z" stroke="#7783ad"/><path d="M1212.8 416.4L1220 419.1L1218 418L1210.8 414.3Z" stroke="#7587ae"/><path d="M1205.6 416.1L1212.8 416.4L1210.8 414.3L1203.6 412.5Z" stroke="#748aaf"/><path d="M1198.4 418.4L1205.6 416.1L1203.6 412.5L1196.4 412.9Z" stroke="#728daf"/><path d="M1191.2 423.1L1198.4 418.4L1196.4 412.9L1189.2 415.6Z" stroke="#748aaf"/><path d="M1184 430L1191.2 423.1L1189.2 415.6L1182 420.5Z" stroke="#7587ae"/><path d="M1176.8 438.5L1184 430L1182 420.5L1174.8 427.3Z" stroke="#7783ad"/><path d="M1169.6 448L1176.8 438.5L1174.8 427.3L1167.6 435.3Z" stroke="#7a7dab"/><path d="M1162.4 457.8L1169.6 448L1167.6 435.3L1160.4 444Z" stroke="#7d73a7"/><path d="M1155.2 467.1L1162.4 457.8L1160.4 444L1153.2 452.9Z" stroke="#7e6ca3"/><path d="M1148 475.5L1155.2 467.1L1153.2 452.9L1146 461.3Z" stroke="#7f659d"/><path d="M1140.8 482.4L1148 475.5L1146 461.3L1138.8 468.9Z" stroke="#7f5d97"/><path d="M1133.6 487.9L1140.8 482.4L1138.8 468.9L1131.6 475.5Z" stroke="#7f5a93"/><path d="M1126.4 491.9L1133.6 487.9L1131.6 475.5L1124.4 480.8Z" stroke="#7e5590"/><path d="M1119.2 494.6L1126.4 491.9L1124.4 480.8L1117.2 485Z" stroke="#7d518c"/><path d="M1112 496.5L1119.2 494.6L1117.2 485L1110 488.3Z" stroke="#7c4d87"/><path d="M1104.8 497.9L1112 496.5L1110 488.3L1102.8 490.8Z" stroke="#7c4d87"/><path d="M1097.6 499L1104.8 497.9L1102.8 490.8L1095.6 492.6Z" stroke="#7c4d87"/><path d="M1090.4 500.2L1097.6 499L1095.6 492.6L1088.4 494.1Z" stroke="#7c4d87"/><path d="M1083.2 501.5L1090.4 500.2L1088.4 494.1L1081.2 495.2Z" stroke="#7c4d87"/><path d="M1076 502.9L1083.2 501.5L1081.2 495.2L1074 495.8Z" stroke="#7c4d87"/><path d="M1068.8 504.1L1076 502.9L1074 495.8L1066.8 495.9Z" stroke="#7c4d87"/><path d="M1061.6 504.7L1068.8 504.1L1066.8 495.9L1059.6 495.1Z" stroke="#7c4d87"/><path d="M1054.4 504.5L1061.6 504.7L1059.6 495.1L1052.4 493.4Z" stroke="#7d518c"/><path d="M1047.2 503L1054.4 504.5L1052.4 493.4L1045.2 490.6Z" stroke="#7e5590"/><path d="M1040 500.1L1047.2 503L1045.2 490.6L1038 486.6Z" stroke="#7f5a93"/><path d="M1032.8 495.6L1040 500.1L1038 486.6L1030.8 481.5Z" stroke="#7f5d97"/><path d="M1025.6 489.8L1032.8 495.6L1030.8 481.5L1023.6 475.6Z" stroke="#7f659d"/><path d="M1018.4 483L1025.6 489.8L1023.6 475.6L1016.4 469.3Z" stroke="#7e6ca3"/><path d="M1011.2 475.8L1018.4 483L1016.4 469.3L1009.2 463.1Z" stroke="#7d73a7"/><path d="M1004 468.8L1011.2 475.8L1009.2 463.1L1002 457.5Z" stroke="#7a7dab"/><path d="M996.8 462.8L1004 468.8L1002 457.5L994.8 453.4Z" stroke="#7783ad"/><path d="M989.6 458.4L996.8 462.8L994.8 453.4L987.6 451Z" stroke="#7587ae"/><path d="M982.4 456.2L989.6 458.4L987.6 451L980.4 450.8Z" stroke="#748aaf"/><path d="M975.2 456.5L982.4 456.2L980.4 450.8L973.2 452.9Z" stroke="#728daf"/><path d="M968 459.4L975.2 456.5L973.2 452.9L966 457.2Z" stroke="#748aaf"/><path d="M960.8 464.5L968 459.4L966 457.2L958.8 463.4Z" stroke="#7587ae"/><path d="M953.6 471.4L960.8 464.5L958.8 463.4L951.6 470.9Z" stroke="#7783ad"/><path d="M946.4 479.5L953.6 471.4L951.6 470.9L944.4 479Z" stroke="#7a7dab"/><path d="M1229.2 424.6L1236.4 429.8L1234.4 429L1227.2 423.5Z" stroke="#7880ac"/><path d="M1222 421L1229.2 424.6L1227.2 423.5L1220 419.1Z" stroke="#7587ae"/><path d="M1214.8 419.7L1222 421L1220 419.1L1212.8 416.4Z" stroke="#748aaf"/><path d="M1207.6 421L1214.8 419.7L1212.8 416.4L1205.6 416.1Z" stroke="#728daf"/><path d="M1200.4 425.1L1207.6 421L1205.6 416.1L1198.4 418.4Z" stroke="#748aaf"/><path d="M1193.2 431.7L1200.4 425.1L1198.4 418.4L1191.2 423.1Z" stroke="#7587ae"/><path d="M1186 440.5L1193.2 431.7L1191.2 423.1L1184 430Z" stroke="#7783ad"/><path d="M1178.8 450.5L1186 440.5L1184 430L1176.8 438.5Z" stroke="#7a7dab"/><path d="M1171.6 461L1178.8 450.5L1176.8 438.5L1169.6 448Z" stroke="#7d73a7"/><path d="M1164.4 471.2L1171.6 461L1169.6 448L1162.4 457.8Z" stroke="#7e6ca3"/><path d="M1157.2 480.3L1164.4 471.2L1162.4 457.8L1155.2 467.1Z" stroke="#7f659d"/><path d="M1150 487.7L1157.2 480.3L1155.2 467.1L1148 475.5Z" stroke="#7f5d97"/><path d="M1142.8 493.2L1150 487.7L1148 475.5L1140.8 482.4Z" stroke="#7e5590"/><path d="M1135.6 496.7L1142.8 493.2L1140.8 482.4L1133.6 487.9Z" stroke="#7d518c"/><path d="M1128.4 498.6L1135.6 496.7L1133.6 487.9L1126.4 491.9Z" stroke="#7c4d87"/><path d="M1121.2 499.1L1128.4 498.6L1126.4 491.9L1119.2 494.6Z" stroke="#7c4d87"/><path d="M1114 499L1121.2 499.1L1119.2 494.6L1112 496.5Z" stroke="#7c4d87"/><path d="M1106.8 498.7L1114 499L1112 496.5L1104.8 497.9Z" stroke="#7c4d87"/><path d="M1099.6 498.8L1106.8 498.7L1104.8 497.9L1097.6 499Z" stroke="#7c4d87"/><path d="M1092.4 499.7L1099.6 498.8L1097.6 499L1090.4 500.2Z" stroke="#7c4d87"/><path d="M1085.2 501.4L1092.4 499.7L1090.4 500.2L1083.2 501.5Z" stroke="#7c4d87"/><path d="M1078 503.8L1085.2 501.4L1083.2 501.5L1076 502.9Z" stroke="#7c4d87"/><path d="M1070.8 506.6L1078 503.8L1076 502.9L1068.8 504.1Z" stroke="#7c4d87"/><path d="M1063.6 509.2L1070.8 506.6L1068.8 504.1L1061.6 504.7Z" stroke="#7c4d87"/><path d="M1056.4 511.2L1063.6 509.2L1061.6 504.7L1054.4 504.5Z" stroke="#7c4d87"/><path d="M1049.2 511.9L1056.4 511.2L1054.4 504.5L1047.2 503Z" stroke="#7c4d87"/><path d="M1042 510.9L1049.2 511.9L1047.2 503L1040 500.1Z" stroke="#7d518c"/><path d="M1034.8 507.9L1042 510.9L1040 500.1L1032.8 495.6Z" stroke="#7e5590"/><path d="M1027.6 503L1034.8 507.9L1032.8 495.6L1025.6 489.8Z" stroke="#7f5d97"/><path d="M1020.4 496.4L1027.6 503L1025.6 489.8L1018.4 483Z" stroke="#7f659d"/><path d="M1013.2 488.8L1020.4 496.4L1018.4 483L1011.2 475.8Z" stroke="#7e6ca3"/><path d="M1006 480.8L1013.2 488.8L1011.2 475.8L1004 468.8Z" stroke="#7d73a7"/><path d="M998.8 473.3L1006 480.8L1004 468.8L996.8 462.8Z" stroke="#7a7dab"/><path d="M991.6 467.1L998.8 473.3L996.8 462.8L989.6 458.4Z" stroke="#7783ad"/><path d="M984.4 462.9L991.6 467.1L989.6 458.4L982.4 456.2Z" stroke="#7587ae"/><path d="M977.2 461.4L984.4 462.9L982.4 456.2L975.2 456.5Z" stroke="#748aaf"/><path d="M970 462.6L977.2 461.4L975.2 456.5L968 459.4Z" stroke="#728daf"/><path d="M962.8 466.4L970 462.6L968 459.4L960.8 464.5Z" stroke="#748aaf"/><path d="M955.6 472.6L962.8 466.4L960.8 464.5L953.6 471.4Z" stroke="#7587ae"/><path d="M948.4 480.3L955.6 472.6L953.6 471.4L946.4 479.5Z" stroke="#7880ac"/><path d="M1231.2 426.4L1238.4 431L1236.4 429.8L1229.2 424.6Z" stroke="#7783ad"/><path d="M1224 423.8L1231.2 426.4L1229.2 424.6L1222 421Z" stroke="#7587ae"/><path d="M1216.8 423.8L1224 423.8L1222 421L1214.8 419.7Z" stroke="#748aaf"/><path d="M1209.6 426.9L1216.8 423.8L1214.8 419.7L1207.6 421Z" stroke="#748aaf"/><path d="M1202.4 432.8L1209.6 426.9L1207.6 421L1200.4 425.1Z" stroke="#748aaf"/><path d="M1195.2 441.2L1202.4 432.8L1200.4 425.1L1193.2 431.7Z" stroke="#7783ad"/><path d="M1188 451.5L1195.2 441.2L1193.2 431.7L1186 440.5Z" stroke="#7a7dab"/><path d="M1180.8 462.6L1188 451.5L1186 440.5L1178.8 450.5Z" stroke="#7c76a9"/><path d="M1173.6 473.6L1180.8 462.6L1178.8 450.5L1171.6 461Z" stroke="#7e6ca3"/><path d="M1166.4 483.5L1173.6 473.6L1171.6 461L1164.4 471.2Z" stroke="#7f659d"/><path d="M1159.2 491.6L1166.4 483.5L1164.4 471.2L1157.2 480.3Z" stroke="#7f5a93"/><path d="M1152 497.3L1159.2 491.6L1157.2 480.3L1150 487.7Z" stroke="#7e5590"/><path d="M1144.8 500.4L1152 497.3L1150 487.7L1142.8 493.2Z" stroke="#7c4d87"/><path d="M1137.6 501.2L1144.8 500.4L1142.8 493.2L1135.6 496.7Z" stroke="#7c4d87"/><path d="M1130.4 500.1L1137.6 501.2L1135.6 496.7L1128.4 498.6Z" stroke="#7c4d87"/><path d="M1123.2 497.7L1130.4 500.1L1128.4 498.6L1121.2 499.1Z" stroke="#7c4d87"/><path d="M1116 495L1123.2 497.7L1121.2 499.1L1114 499Z" stroke="#7d518c"/><path d="M1108.8 492.7L1116 495L1114 499L1106.8 498.7Z" stroke="#7e5590"/><path d="M1101.6 491.5L1108.8 492.7L1106.8 498.7L1099.6 498.8Z" stroke="#7e5590"/><path d="M1094.4 491.9L1101.6 491.5L1099.6 498.8L1092.4 499.7Z" stroke="#7f5a93"/><path d="M1087.2 494L1094.4 491.9L1092.4 499.7L1085.2 501.4Z" stroke="#7f5a93"/><path d="M1080 497.7L1087.2 494L1085.2 501.4L1078 503.8Z" stroke="#7e5590"/><path d="M1072.8 502.6L1080 497.7L1078 503.8L1070.8 506.6Z" stroke="#7e5590"/><path d="M1065.6 507.8L1072.8 502.6L1070.8 506.6L1063.6 509.2Z" stroke="#7d518c"/><path d="M1058.4 512.7L1065.6 507.8L1063.6 509.2L1056.4 511.2Z" stroke="#7c4d87"/><path d="M1051.2 516.4L1058.4 512.7L1056.4 511.2L1049.2 511.9Z" stroke="#7c4d87"/><path d="M1044 518.1L1051.2 516.4L1049.2 511.9L1042 510.9Z" stroke="#7c4d87"/><path d="M1036.8 517.5L1044 518.1L1042 510.9L1034.8 507.9Z" stroke="#7c4d87"/><path d="M1029.6 514.3L1036.8 517.5L1034.8 507.9L1027.6 503Z" stroke="#7e5590"/><path d="M1022.4 508.7L1029.6 514.3L1027.6 503L1020.4 496.4Z" stroke="#7f5a93"/><path d="M1015.2 501.3L1022.4 508.7L1020.4 496.4L1013.2 488.8Z" stroke="#7f659d"/><path d="M1008 492.9L1015.2 501.3L1013.2 488.8L1006 480.8Z" stroke="#7e6ca3"/><path d="M1000.8 484.3L1008 492.9L1006 480.8L998.8 473.3Z" stroke="#7c76a9"/><path d="M993.6 476.6L1000.8 484.3L998.8 473.3L991.6 467.1Z" stroke="#7a7dab"/><path d="M986.4 470.7L993.6 476.6L991.6 467.1L984.4 462.9Z" stroke="#7783ad"/><path d="M979.2 467.3L986.4 470.7L984.4 462.9L977.2 461.4Z" stroke="#748aaf"/><path d="M972 466.7L979.2 467.3L977.2 461.4L970 462.6Z" stroke="#748aaf"/><path d="M964.8 469.2L972 466.7L970 462.6L962.8 466.4Z" stroke="#748aaf"/><path d="M957.6 474.3L964.8 469.2L962.8 466.4L955.6 472.6Z" stroke="#7587ae"/><path d="M950.4 481.5L957.6 474.3L955.6 472.6L948.4 480.3Z" stroke="#7783ad"/><path d="M1233.2 428.8L1240.4 432.8L1238.4 431L1231.2 426.4Z" stroke="#7587ae"/><path d="M1226 427.3L1233.2 428.8L1231.2 426.4L1224 423.8Z" stroke="#748aaf"/><path d="M1218.8 428.8L1226 427.3L1224 423.8L1216.8 423.8Z" stroke="#728daf"/><path d="M1211.6 433.5L1218.8 428.8L1216.8 423.8L1209.6 426.9Z" stroke="#748aaf"/><path d="M1204.4 441.2L1211.6 433.5L1209.6 426.9L1202.4 432.8Z" stroke="#7587ae"/><path d="M1197.2 451.1L1204.4 441.2L1202.4 432.8L1195.2 441.2Z" stroke="#7880ac"/><path d="M1190 462.5L1197.2 451.1L1195.2 441.2L1188 451.5Z" stroke="#7b79aa"/><path d="M1182.8 474.2L1190 462.5L1188 451.5L1180.8 462.6Z" stroke="#7e6fa5"/><path d="M1175.6 485.1L1182.8 474.2L1180.8 462.6L1173.6 473.6Z" stroke="#7f659d"/><path d="M1168.4 494.2L1175.6 485.1L1173.6 473.6L1166.4 483.5Z" stroke="#7f5d97"/><path d="M1161.2 500.5L1168.4 494.2L1166.4 483.5L1159.2 491.6Z" stroke="#7e5590"/><path d="M1154 503.7L1161.2 500.5L1159.2 491.6L1152 497.3Z" stroke="#7c4d87"/><path d="M1146.8 503.8L1154 503.7L1152 497.3L1144.8 500.4Z" stroke="#7c4d87"/><path d="M1139.6 501.1L1146.8 503.8L1144.8 500.4L1137.6 501.2Z" stroke="#7c4d87"/><path d="M1132.4 496.3L1139.6 501.1L1137.6 501.2L1130.4 500.1Z" stroke="#7d518c"/><path d="M1125.2 490.4L1132.4 496.3L1130.4 500.1L1123.2 497.7Z" stroke="#7e5590"/><path d="M1118 484.6L1125.2 490.4L1123.2 497.7L1116 495Z" stroke="#7f5d97"/><path d="M1110.8 479.8L1118 484.6L1116 495L1108.8 492.7Z" stroke="#7f619a"/><path d="M1103.6 477.1L1110.8 479.8L1108.8 492.7L1101.6 491.5Z" stroke="#7f659d"/><path d="M1096.4 477L1103.6 477.1L1101.6 491.5L1094.4 491.9Z" stroke="#7f68a0"/><path d="M1089.2 479.6L1096.4 477L1094.4 491.9L1087.2 494Z" stroke="#7f68a0"/><path d="M1082 484.9L1089.2 479.6L1087.2 494L1080 497.7Z" stroke="#7f659d"/><path d="M1074.8 492.1L1082 484.9L1080 497.7L1072.8 502.6Z" stroke="#7f619a"/><path d="M1067.6 500.5L1074.8 492.1L1072.8 502.6L1065.6 507.8Z" stroke="#7f5d97"/><path d="M1060.4 508.9L1067.6 500.5L1065.6 507.8L1058.4 512.7Z" stroke="#7e5590"/><path d="M1053.2 516.2L1060.4 508.9L1058.4 512.7L1051.2 516.4Z" stroke="#7d518c"/><path d="M1046 521.5L1053.2 516.2L1051.2 516.4L1044 518.1Z" stroke="#7c4d87"/><path d="M1038.8 523.9L1046 521.5L1044 518.1L1036.8 517.5Z" stroke="#7c4d87"/><path d="M1031.6 523.2L1038.8 523.9L1036.8 517.5L1029.6 514.3Z" stroke="#7c4d87"/><path d="M1024.4 519.4L1031.6 523.2L1029.6 514.3L1022.4 508.7Z" stroke="#7e5590"/><path d="M1017.2 512.9L1024.4 519.4L1022.4 508.7L1015.2 501.3Z" stroke="#7f5d97"/><path d="M1010 504.5L1017.2 512.9L1015.2 501.3L1008 492.9Z" stroke="#7f659d"/><path d="M1002.8 495.3L1010 504.5L1008 492.9L1000.8 484.3Z" stroke="#7e6fa5"/><path d="M995.6 486.5L1002.8 495.3L1000.8 484.3L993.6 476.6Z" stroke="#7b79aa"/><path d="M988.4 479L995.6 486.5L993.6 476.6L986.4 470.7Z" stroke="#7880ac"/><path d="M981.2 473.9L988.4 479L986.4 470.7L979.2 467.3Z" stroke="#7587ae"/><path d="M974 471.8L981.2 473.9L979.2 467.3L972 466.7Z" stroke="#748aaf"/><path d="M966.8 472.8L974 471.8L972 466.7L964.8 469.2Z" stroke="#728daf"/><path d="M959.6 476.8L966.8 472.8L964.8 469.2L957.6 474.3Z" stroke="#748aaf"/><path d="M952.4 483.2L959.6 476.8L957.6 474.3L950.4 481.5Z" stroke="#7587ae"/><path d="M1235.3 431.9L1242.5 435L1240.4 432.8L1233.2 428.8Z" stroke="#7587ae"/><path d="M1228.1 431.5L1235.3 431.9L1233.2 428.8L1226 427.3Z" stroke="#748aaf"/><path d="M1220.9 434.5L1228.1 431.5L1226 427.3L1218.8 428.8Z" stroke="#748aaf"/><path d="M1213.7 440.7L1220.9 434.5L1218.8 428.8L1211.6 433.5Z" stroke="#748aaf"/><path d="M1206.5 449.8L1213.7 440.7L1211.6 433.5L1204.4 441.2Z" stroke="#7783ad"/><path d="M1199.3 461.1L1206.5 449.8L1204.4 441.2L1197.2 451.1Z" stroke="#7a7dab"/><path d="M1192.1 473.2L1199.3 461.1L1197.2 451.1L1190 462.5Z" stroke="#7d73a7"/><path d="M1184.9 485.1L1192.1 473.2L1190 462.5L1182.8 474.2Z" stroke="#7f68a0"/><path d="M1177.7 495.3L1184.9 485.1L1182.8 474.2L1175.6 485.1Z" stroke="#7f5d97"/><path d="M1170.5 502.9L1177.7 495.3L1175.6 485.1L1168.4 494.2Z" stroke="#7e5590"/><path d="M1163.3 506.9L1170.5 502.9L1168.4 494.2L1161.2 500.5Z" stroke="#7c4d87"/><path d="M1156.1 507L1163.3 506.9L1161.2 500.5L1154 503.7Z" stroke="#7c4d87"/><path d="M1148.9 503.4L1156.1 507L1154 503.7L1146.8 503.8Z" stroke="#7c4d87"/><path d="M1141.7 496.6L1148.9 503.4L1146.8 503.8L1139.6 501.1Z" stroke="#7d518c"/><path d="M1134.5 487.6L1141.7 496.6L1139.6 501.1L1132.4 496.3Z" stroke="#7f5a93"/><path d="M1127.3 477.8L1134.5 487.6L1132.4 496.3L1125.2 490.4Z" stroke="#7f659d"/><path d="M1120.1 468.5L1127.3 477.8L1125.2 490.4L1118 484.6Z" stroke="#7e6ca3"/><path d="M1112.9 461L1120.1 468.5L1118 484.6L1110.8 479.8Z" stroke="#7c76a9"/><path d="M1105.7 456.6L1112.9 461L1110.8 479.8L1103.6 477.1Z" stroke="#7b79aa"/><path d="M1098.5 455.9L1105.7 456.6L1103.6 477.1L1096.4 477Z" stroke="#7a7dab"/><path d="M1091.3 459.1L1098.5 455.9L1096.4 477L1089.2 479.6Z" stroke="#7a7dab"/><path d="M1084.1 466.1L1091.3 459.1L1089.2 479.6L1082 484.9Z" stroke="#7b79aa"/><path d="M1076.9 476.1L1084.1 466.1L1082 484.9L1074.8 492.1Z" stroke="#7c76a9"/><path d="M1069.7 487.9L1076.9 476.1L1074.8 492.1L1067.6 500.5Z" stroke="#7e6ca3"/><path d="M1062.5 500.3L1069.7 487.9L1067.6 500.5L1060.4 508.9Z" stroke="#7f659d"/><path d="M1055.3 511.8L1062.5 500.3L1060.4 508.9L1053.2 516.2Z" stroke="#7f5a93"/><path d="M1048.1 521.1L1055.3 511.8L1053.2 516.2L1046 521.5Z" stroke="#7d518c"/><path d="M1040.9 527.2L1048.1 521.1L1046 521.5L1038.8 523.9Z" stroke="#7c4d87"/><path d="M1033.7 529.6L1040.9 527.2L1038.8 523.9L1031.6 523.2Z" stroke="#7c4d87"/><path d="M1026.5 528.1L1033.7 529.6L1031.6 523.2L1024.4 519.4Z" stroke="#7c4d87"/><path d="M1019.3 523.1L1026.5 528.1L1024.4 519.4L1017.2 512.9Z" stroke="#7e5590"/><path d="M1012.1 515.4L1019.3 523.1L1017.2 512.9L1010 504.5Z" stroke="#7f5d97"/><path d="M1004.9 506L1012.1 515.4L1010 504.5L1002.8 495.3Z" stroke="#7f68a0"/><path d="M997.7 496.4L1004.9 506L1002.8 495.3L995.6 486.5Z" stroke="#7d73a7"/><path d="M990.5 487.7L997.7 496.4L995.6 486.5L988.4 479Z" stroke="#7a7dab"/><path d="M983.3 481.1L990.5 487.7L988.4 479L981.2 473.9Z" stroke="#7783ad"/><path d="M976.1 477.4L983.3 481.1L981.2 473.9L974 471.8Z" stroke="#748aaf"/><path d="M968.9 477L976.1 477.4L974 471.8L966.8 472.8Z" stroke="#748aaf"/><path d="M961.7 479.8L968.9 477L966.8 472.8L959.6 476.8Z" stroke="#748aaf"/><path d="M954.5 485.5L961.7 479.8L959.6 476.8L952.4 483.2Z" stroke="#7587ae"/><path d="M1237.3 435.5L1244.5 437.8L1242.5 435L1235.3 431.9Z" stroke="#748aaf"/><path d="M1230.1 436.3L1237.3 435.5L1235.3 431.9L1228.1 431.5Z" stroke="#748aaf"/><path d="M1222.9 440.5L1230.1 436.3L1228.1 431.5L1220.9 434.5Z" stroke="#748aaf"/><path d="M1215.7 448.1L1222.9 440.5L1220.9 434.5L1213.7 440.7Z" stroke="#7587ae"/><path d="M1208.5 458.5L1215.7 448.1L1213.7 440.7L1206.5 449.8Z" stroke="#7880ac"/><path d="M1201.3 470.6L1208.5 458.5L1206.5 449.8L1199.3 461.1Z" stroke="#7c76a9"/><path d="M1194.1 483.2L1201.3 470.6L1199.3 461.1L1192.1 473.2Z" stroke="#7e6ca3"/><path d="M1186.9 494.8L1194.1 483.2L1192.1 473.2L1184.9 485.1Z" stroke="#7f619a"/><path d="M1179.7 504L1186.9 494.8L1184.9 485.1L1177.7 495.3Z" stroke="#7f5a93"/><path d="M1172.5 509.6L1179.7 504L1177.7 495.3L1170.5 502.9Z" stroke="#7d518c"/><path d="M1165.3 510.9L1172.5 509.6L1170.5 502.9L1163.3 506.9Z" stroke="#7c4d87"/><path d="M1158.1 507.5L1165.3 510.9L1163.3 506.9L1156.1 507Z" stroke="#7c4d87"/><path d="M1150.9 499.8L1158.1 507.5L1156.1 507L1148.9 503.4Z" stroke="#7d518c"/><path d="M1143.7 488.6L1150.9 499.8L1148.9 503.4L1141.7 496.6Z" stroke="#7f5d97"/><path d="M1136.5 475.2L1143.7 488.6L1141.7 496.6L1134.5 487.6Z" stroke="#7f68a0"/><path d="M1129.3 461.2L1136.5 475.2L1134.5 487.6L1127.3 477.8Z" stroke="#7c76a9"/><path d="M1122.1 448.2L1129.3 461.2L1127.3 477.8L1120.1 468.5Z" stroke="#7880ac"/><path d="M1114.9 437.9L1122.1 448.2L1120.1 468.5L1112.9 461Z" stroke="#728daf"/><path d="M1107.7 431.7L1114.9 437.9L1112.9 461L1105.7 456.6Z" stroke="#7092b0"/><path d="M1100.5 430.4L1107.7 431.7L1105.7 456.6L1098.5 455.9Z" stroke="#6f95b0"/><path d="M1093.3 434.2L1100.5 430.4L1098.5 455.9L1091.3 459.1Z" stroke="#6f95b0"/><path d="M1086.1 443L1093.3 434.2L1091.3 459.1L1084.1 466.1Z" stroke="#7092b0"/><path d="M1078.9 455.8L1086.1 443L1084.1 466.1L1076.9 476.1Z" stroke="#728daf"/><path d="M1071.7 471.2L1078.9 455.8L1076.9 476.1L1069.7 487.9Z" stroke="#7880ac"/><path d="M1064.5 487.8L1071.7 471.2L1069.7 487.9L1062.5 500.3Z" stroke="#7c76a9"/><path d="M1057.3 503.8L1064.5 487.8L1062.5 500.3L1055.3 511.8Z" stroke="#7f68a0"/><path d="M1050.1 517.5L1057.3 503.8L1055.3 511.8L1048.1 521.1Z" stroke="#7f5d97"/><path d="M1042.9 527.7L1050.1 517.5L1048.1 521.1L1040.9 527.2Z" stroke="#7d518c"/><path d="M1035.7 533.6L1042.9 527.7L1040.9 527.2L1033.7 529.6Z" stroke="#7c4d87"/><path d="M1028.5 534.9L1035.7 533.6L1033.7 529.6L1026.5 528.1Z" stroke="#7c4d87"/><path d="M1021.3 531.8L1028.5 534.9L1026.5 528.1L1019.3 523.1Z" stroke="#7d518c"/><path d="M1014.1 525.1L1021.3 531.8L1019.3 523.1L1012.1 515.4Z" stroke="#7f5a93"/><path d="M1006.9 516L1014.1 525.1L1012.1 515.4L1004.9 506Z" stroke="#7f619a"/><path d="M999.7 506L1006.9 516L1004.9 506L997.7 496.4Z" stroke="#7e6ca3"/><path d="M992.5 496.4L999.7 506L997.7 496.4L990.5 487.7Z" stroke="#7c76a9"/><path d="M985.3 488.5L992.5 496.4L990.5 487.7L983.3 481.1Z" stroke="#7880ac"/><path d="M978.1 483.4L985.3 488.5L983.3 481.1L976.1 477.4Z" stroke="#7587ae"/><path d="M970.9 481.7L978.1 483.4L976.1 477.4L968.9 477Z" stroke="#748aaf"/><path d="M963.7 483.4L970.9 481.7L968.9 477L961.7 479.8Z" stroke="#748aaf"/><path d="M956.5 488.3L963.7 483.4L961.7 479.8L954.5 485.5Z" stroke="#748aaf"/><path d="M1239.3 439.5L1246.5 441L1244.5 437.8L1237.3 435.5Z" stroke="#748aaf"/><path d="M1232.1 441.3L1239.3 439.5L1237.3 435.5L1230.1 436.3Z" stroke="#728daf"/><path d="M1224.9 446.7L1232.1 441.3L1230.1 436.3L1222.9 440.5Z" stroke="#748aaf"/><path d="M1217.7 455.5L1224.9 446.7L1222.9 440.5L1215.7 448.1Z" stroke="#7587ae"/><path d="M1210.5 466.9L1217.7 455.5L1215.7 448.1L1208.5 458.5Z" stroke="#7a7dab"/><path d="M1203.3 479.7L1210.5 466.9L1208.5 458.5L1201.3 470.6Z" stroke="#7d73a7"/><path d="M1196.1 492.4L1203.3 479.7L1201.3 470.6L1194.1 483.2Z" stroke="#7f68a0"/><path d="M1188.9 503.4L1196.1 492.4L1194.1 483.2L1186.9 494.8Z" stroke="#7f5d97"/><path d="M1181.7 511.2L1188.9 503.4L1186.9 494.8L1179.7 504Z" stroke="#7e5590"/><path d="M1174.5 514.7L1181.7 511.2L1179.7 504L1172.5 509.6Z" stroke="#7c4d87"/><path d="M1167.3 513L1174.5 514.7L1172.5 509.6L1165.3 510.9Z" stroke="#7c4d87"/><path d="M1160.1 506L1167.3 513L1165.3 510.9L1158.1 507.5Z" stroke="#7d518c"/><path d="M1152.9 494.1L1160.1 506L1158.1 507.5L1150.9 499.8Z" stroke="#7f5a93"/><path d="M1145.7 478.4L1152.9 494.1L1150.9 499.8L1143.7 488.6Z" stroke="#7f68a0"/><path d="M1138.5 460.5L1145.7 478.4L1143.7 488.6L1136.5 475.2Z" stroke="#7b79aa"/><path d="M1131.3 442.3L1138.5 460.5L1136.5 475.2L1129.3 461.2Z" stroke="#7587ae"/><path d="M1124.1 425.7L1131.3 442.3L1129.3 461.2L1122.1 448.2Z" stroke="#6f95b0"/><path d="M1116.9 412.7L1124.1 425.7L1122.1 448.2L1114.9 437.9Z" stroke="#6aa0b0"/><path d="M1109.7 404.7L1116.9 412.7L1114.9 437.9L1107.7 431.7Z" stroke="#67a8b0"/><path d="M1102.5 402.7L1109.7 404.7L1107.7 431.7L1100.5 430.4Z" stroke="#65adaf"/><path d="M1095.3 407.2L1102.5 402.7L1100.5 430.4L1093.3 434.2Z" stroke="#65adaf"/><path d="M1088.1 417.7L1095.3 407.2L1093.3 434.2L1086.1 443Z" stroke="#67a8b0"/><path d="M1080.9 433.3L1088.1 417.7L1086.1 443L1078.9 455.8Z" stroke="#6aa0b0"/><path d="M1073.7 452.4L1080.9 433.3L1078.9 455.8L1071.7 471.2Z" stroke="#6f95b0"/><path d="M1066.5 473.2L1073.7 452.4L1071.7 471.2L1064.5 487.8Z" stroke="#7587ae"/><path d="M1059.3 493.6L1066.5 473.2L1064.5 487.8L1057.3 503.8Z" stroke="#7b79aa"/><path d="M1052.1 511.8L1059.3 493.6L1057.3 503.8L1050.1 517.5Z" stroke="#7f68a0"/><path d="M1044.9 526.2L1052.1 511.8L1050.1 517.5L1042.9 527.7Z" stroke="#7f5a93"/><path d="M1037.7 535.7L1044.9 526.2L1042.9 527.7L1035.7 533.6Z" stroke="#7d518c"/><path d="M1030.5 539.9L1037.7 535.7L1035.7 533.6L1028.5 534.9Z" stroke="#7c4d87"/><path d="M1023.3 539L1030.5 539.9L1028.5 534.9L1021.3 531.8Z" stroke="#7c4d87"/><path d="M1016.1 533.7L1023.3 539L1021.3 531.8L1014.1 525.1Z" stroke="#7e5590"/><path d="M1008.9 525.2L1016.1 533.7L1014.1 525.1L1006.9 516Z" stroke="#7f5d97"/><path d="M1001.7 515L1008.9 525.2L1006.9 516L999.7 506Z" stroke="#7f68a0"/><path d="M994.5 504.8L1001.7 515L999.7 506L992.5 496.4Z" stroke="#7d73a7"/><path d="M987.3 495.9L994.5 504.8L992.5 496.4L985.3 488.5Z" stroke="#7a7dab"/><path d="M980.1 489.6L987.3 495.9L985.3 488.5L978.1 483.4Z" stroke="#7587ae"/><path d="M972.9 486.7L980.1 489.6L978.1 483.4L970.9 481.7Z" stroke="#748aaf"/><path d="M965.7 487.4L972.9 486.7L970.9 481.7L963.7 483.4Z" stroke="#728daf"/><path d="M958.5 491.5L965.7 487.4L963.7 483.4L956.5 488.3Z" stroke="#748aaf"/><path d="M1241.3 443.8L1248.5 444.6L1246.5 441L1239.3 439.5Z" stroke="#748aaf"/><path d="M1234.1 446.5L1241.3 443.8L1239.3 439.5L1232.1 441.3Z" stroke="#748aaf"/><path d="M1226.9 452.9L1234.1 446.5L1232.1 441.3L1224.9 446.7Z" stroke="#748aaf"/><path d="M1219.7 462.7L1226.9 452.9L1224.9 446.7L1217.7 455.5Z" stroke="#7783ad"/><path d="M1212.5 474.8L1219.7 462.7L1217.7 455.5L1210.5 466.9Z" stroke="#7b79aa"/><path d="M1205.3 488L1212.5 474.8L1210.5 466.9L1203.3 479.7Z" stroke="#7e6fa5"/><path d="M1198.1 500.6L1205.3 488L1203.3 479.7L1196.1 492.4Z" stroke="#7f659d"/><path d="M1190.9 510.8L1198.1 500.6L1196.1 492.4L1188.9 503.4Z" stroke="#7f5a93"/><path d="M1183.7 517.2L1190.9 510.8L1188.9 503.4L1181.7 511.2Z" stroke="#7d518c"/><path d="M1176.5 518.5L1183.7 517.2L1181.7 511.2L1174.5 514.7Z" stroke="#7c4d87"/><path d="M1169.3 513.9L1176.5 518.5L1174.5 514.7L1167.3 513Z" stroke="#7c4d87"/><path d="M1162.1 503.3L1169.3 513.9L1167.3 513L1160.1 506Z" stroke="#7e5590"/><path d="M1154.9 487.5L1162.1 503.3L1160.1 506L1152.9 494.1Z" stroke="#7f659d"/><path d="M1147.7 467.6L1154.9 487.5L1152.9 494.1L1145.7 478.4Z" stroke="#7c76a9"/><path d="M1140.5 445.5L1147.7 467.6L1145.7 478.4L1138.5 460.5Z" stroke="#7587ae"/><path d="M1133.3 423.4L1140.5 445.5L1138.5 460.5L1131.3 442.3Z" stroke="#6d98b0"/><path d="M1126.1 403.4L1133.3 423.4L1131.3 442.3L1124.1 425.7Z" stroke="#67a8b0"/><path d="M1118.9 387.8L1126.1 403.4L1124.1 425.7L1116.9 412.7Z" stroke="#62b6ae"/><path d="M1111.7 378.2L1118.9 387.8L1116.9 412.7L1109.7 404.7Z" stroke="#63c0aa"/><path d="M1104.5 375.7L1111.7 378.2L1109.7 404.7L1102.5 402.7Z" stroke="#67c5a7"/><path d="M1097.3 380.7L1104.5 375.7L1102.5 402.7L1095.3 407.2Z" stroke="#67c5a7"/><path d="M1090.1 392.8L1097.3 380.7L1095.3 407.2L1088.1 417.7Z" stroke="#63c0aa"/><path d="M1082.9 411L1090.1 392.8L1088.1 417.7L1080.9 433.3Z" stroke="#62b6ae"/><path d="M1075.7 433.5L1082.9 411L1080.9 433.3L1073.7 452.4Z" stroke="#67a8b0"/><path d="M1068.5 458.1L1075.7 433.5L1073.7 452.4L1066.5 473.2Z" stroke="#6d98b0"/><path d="M1061.3 482.7L1068.5 458.1L1066.5 473.2L1059.3 493.6Z" stroke="#7587ae"/><path d="M1054.1 505.1L1061.3 482.7L1059.3 493.6L1052.1 511.8Z" stroke="#7c76a9"/><path d="M1046.9 523.5L1054.1 505.1L1052.1 511.8L1044.9 526.2Z" stroke="#7f659d"/><path d="M1039.7 536.6L1046.9 523.5L1044.9 526.2L1037.7 535.7Z" stroke="#7e5590"/><path d="M1032.5 543.7L1039.7 536.6L1037.7 535.7L1030.5 539.9Z" stroke="#7c4d87"/><path d="M1025.3 545L1032.5 543.7L1030.5 539.9L1023.3 539Z" stroke="#7c4d87"/><path d="M1018.1 541.1L1025.3 545L1023.3 539L1016.1 533.7Z" stroke="#7d518c"/><path d="M1010.9 533.4L1018.1 541.1L1016.1 533.7L1008.9 525.2Z" stroke="#7f5a93"/><path d="M1003.7 523.3L1010.9 533.4L1008.9 525.2L1001.7 515Z" stroke="#7f659d"/><path d="M996.5 512.6L1003.7 523.3L1001.7 515L994.5 504.8Z" stroke="#7e6fa5"/><path d="M989.3 503L996.5 512.6L994.5 504.8L987.3 495.9Z" stroke="#7b79aa"/><path d="M982.1 495.8L989.3 503L987.3 495.9L980.1 489.6Z" stroke="#7783ad"/><path d="M974.9 491.9L982.1 495.8L980.1 489.6L972.9 486.7Z" stroke="#748aaf"/><path d="M967.7 491.7L974.9 491.9L972.9 486.7L965.7 487.4Z" stroke="#748aaf"/><path d="M960.5 495.1L967.7 491.7L965.7 487.4L958.5 491.5Z" stroke="#748aaf"/><path d="M1243.3 448.2L1250.5 448.5L1248.5 444.6L1241.3 443.8Z" stroke="#748aaf"/><path d="M1236.1 451.7L1243.3 448.2L1241.3 443.8L1234.1 446.5Z" stroke="#748aaf"/><path d="M1228.9 458.9L1236.1 451.7L1234.1 446.5L1226.9 452.9Z" stroke="#7587ae"/><path d="M1221.7 469.4L1228.9 458.9L1226.9 452.9L1219.7 462.7Z" stroke="#7880ac"/><path d="M1214.5 482L1221.7 469.4L1219.7 462.7L1212.5 474.8Z" stroke="#7c76a9"/><path d="M1207.3 495.4L1214.5 482L1212.5 474.8L1205.3 488Z" stroke="#7e6ca3"/><path d="M1200.1 507.8L1207.3 495.4L1205.3 488L1198.1 500.6Z" stroke="#7f619a"/><path d="M1192.9 517.3L1200.1 507.8L1198.1 500.6L1190.9 510.8Z" stroke="#7e5590"/><path d="M1185.7 522.3L1192.9 517.3L1190.9 510.8L1183.7 517.2Z" stroke="#7c4d87"/><path d="M1178.5 521.6L1185.7 522.3L1183.7 517.2L1176.5 518.5Z" stroke="#7c4d87"/><path d="M1171.3 514.4L1178.5 521.6L1176.5 518.5L1169.3 513.9Z" stroke="#7d518c"/><path d="M1164.1 500.7L1171.3 514.4L1169.3 513.9L1162.1 503.3Z" stroke="#7f5d97"/><path d="M1156.9 481.4L1164.1 500.7L1162.1 503.3L1154.9 487.5Z" stroke="#7e6ca3"/><path d="M1149.7 457.9L1156.9 481.4L1154.9 487.5L1147.7 467.6Z" stroke="#7880ac"/><path d="M1142.5 432.2L1149.7 457.9L1147.7 467.6L1140.5 445.5Z" stroke="#6f95b0"/><path d="M1135.3 406.7L1142.5 432.2L1140.5 445.5L1133.3 423.4Z" stroke="#67a8b0"/><path d="M1128.1 383.8L1135.3 406.7L1133.3 423.4L1126.1 403.4Z" stroke="#62bbac"/><path d="M1120.9 366L1128.1 383.8L1126.1 403.4L1118.9 387.8Z" stroke="#6ecaa3"/><path d="M1113.7 355L1120.9 366L1118.9 387.8L1111.7 378.2Z" stroke="#80d499"/><path d="M1106.5 352L1113.7 355L1111.7 378.2L1104.5 375.7Z" stroke="#8bd893"/><path d="M1099.3 357.5L1106.5 352L1104.5 375.7L1097.3 380.7Z" stroke="#8bd893"/><path d="M1092.1 371L1099.3 357.5L1097.3 380.7L1090.1 392.8Z" stroke="#80d499"/><path d="M1084.9 391.4L1092.1 371L1090.1 392.8L1082.9 411Z" stroke="#6ecaa3"/><path d="M1077.7 416.8L1084.9 391.4L1082.9 411L1075.7 433.5Z" stroke="#62bbac"/><path d="M1070.5 444.8L1077.7 416.8L1075.7 433.5L1068.5 458.1Z" stroke="#67a8b0"/><path d="M1063.3 473L1070.5 444.8L1068.5 458.1L1061.3 482.7Z" stroke="#6f95b0"/><path d="M1056.1 499.1L1063.3 473L1061.3 482.7L1054.1 505.1Z" stroke="#7880ac"/><path d="M1048.9 520.9L1056.1 499.1L1054.1 505.1L1046.9 523.5Z" stroke="#7e6ca3"/><path d="M1041.7 537.1L1048.9 520.9L1046.9 523.5L1039.7 536.6Z" stroke="#7f5d97"/><path d="M1034.5 546.8L1041.7 537.1L1039.7 536.6L1032.5 543.7Z" stroke="#7d518c"/><path d="M1027.3 550.1L1034.5 546.8L1032.5 543.7L1025.3 545Z" stroke="#7c4d87"/><path d="M1020.1 547.6L1027.3 550.1L1025.3 545L1018.1 541.1Z" stroke="#7c4d87"/><path d="M1012.9 540.6L1020.1 547.6L1018.1 541.1L1010.9 533.4Z" stroke="#7e5590"/><path d="M1005.7 530.8L1012.9 540.6L1010.9 533.4L1003.7 523.3Z" stroke="#7f619a"/><path d="M998.5 519.9L1005.7 530.8L1003.7 523.3L996.5 512.6Z" stroke="#7e6ca3"/><path d="M991.3 509.8L998.5 519.9L996.5 512.6L989.3 503Z" stroke="#7c76a9"/><path d="M984.1 501.8L991.3 509.8L989.3 503L982.1 495.8Z" stroke="#7880ac"/><path d="M976.9 497.1L984.1 501.8L982.1 495.8L974.9 491.9Z" stroke="#7587ae"/><path d="M969.7 496.2L976.9 497.1L974.9 491.9L967.7 491.7Z" stroke="#748aaf"/><path d="M962.5 499L969.7 496.2L967.7 491.7L960.5 495.1Z" stroke="#748aaf"/><path d="M1245.4 452.8L1252.6 452.6L1250.5 448.5L1243.3 448.2Z" stroke="#748aaf"/><path d="M1238.2 456.8L1245.4 452.8L1243.3 448.2L1236.1 451.7Z" stroke="#748aaf"/><path d="M1231 464.6L1238.2 456.8L1236.1 451.7L1228.9 458.9Z" stroke="#7587ae"/><path d="M1223.8 475.5L1231 464.6L1228.9 458.9L1221.7 469.4Z" stroke="#7880ac"/><path d="M1216.6 488.6L1223.8 475.5L1221.7 469.4L1214.5 482Z" stroke="#7c76a9"/><path d="M1209.4 502L1216.6 488.6L1214.5 482L1207.3 495.4Z" stroke="#7f68a0"/><path d="M1202.2 514.2L1209.4 502L1207.3 495.4L1200.1 507.8Z" stroke="#7f5d97"/><path d="M1195 523L1202.2 514.2L1200.1 507.8L1192.9 517.3Z" stroke="#7e5590"/><path d="M1187.8 526.9L1195 523L1192.9 517.3L1185.7 522.3Z" stroke="#7c4d87"/><path d="M1180.6 524.5L1187.8 526.9L1185.7 522.3L1178.5 521.6Z" stroke="#7c4d87"/><path d="M1173.4 515.3L1180.6 524.5L1178.5 521.6L1171.3 514.4Z" stroke="#7e5590"/><path d="M1166.2 499.2L1173.4 515.3L1171.3 514.4L1164.1 500.7Z" stroke="#7f619a"/><path d="M1159 477.2L1166.2 499.2L1164.1 500.7L1156.9 481.4Z" stroke="#7c76a9"/><path d="M1151.8 450.8L1159 477.2L1156.9 481.4L1149.7 457.9Z" stroke="#728daf"/><path d="M1144.6 422.3L1151.8 450.8L1149.7 457.9L1142.5 432.2Z" stroke="#6aa0b0"/><path d="M1137.4 394.3L1144.6 422.3L1142.5 432.2L1135.3 406.7Z" stroke="#62b6ae"/><path d="M1130.2 369.2L1137.4 394.3L1135.3 406.7L1128.1 383.8Z" stroke="#6ecaa3"/><path d="M1123 349.7L1130.2 369.2L1128.1 383.8L1120.9 366Z" stroke="#8bd893"/><path d="M1115.8 337.6L1123 349.7L1120.9 366L1113.7 355Z" stroke="#aee27e"/><path d="M1108.6 334.2L1115.8 337.6L1113.7 355L1106.5 352Z" stroke="#bce574"/><path d="M1101.4 340.1L1108.6 334.2L1106.5 352L1099.3 357.5Z" stroke="#bce574"/><path d="M1094.2 354.7L1101.4 340.1L1099.3 357.5L1092.1 371Z" stroke="#aee27e"/><path d="M1087 376.8L1094.2 354.7L1092.1 371L1084.9 391.4Z" stroke="#8bd893"/><path d="M1079.8 404.3L1087 376.8L1084.9 391.4L1077.7 416.8Z" stroke="#6ecaa3"/><path d="M1072.6 435L1079.8 404.3L1077.7 416.8L1070.5 444.8Z" stroke="#62b6ae"/><path d="M1065.4 466L1072.6 435L1070.5 444.8L1063.3 473Z" stroke="#6aa0b0"/><path d="M1058.2 494.8L1065.4 466L1063.3 473L1056.1 499.1Z" stroke="#728daf"/><path d="M1051 519.4L1058.2 494.8L1056.1 499.1L1048.9 520.9Z" stroke="#7c76a9"/><path d="M1043.8 538L1051 519.4L1048.9 520.9L1041.7 537.1Z" stroke="#7f619a"/><path d="M1036.6 549.8L1043.8 538L1041.7 537.1L1034.5 546.8Z" stroke="#7e5590"/><path d="M1029.4 554.7L1036.6 549.8L1034.5 546.8L1027.3 550.1Z" stroke="#7c4d87"/><path d="M1022.2 553.3L1029.4 554.7L1027.3 550.1L1020.1 547.6Z" stroke="#7c4d87"/><path d="M1015 547L1022.2 553.3L1020.1 547.6L1012.9 540.6Z" stroke="#7e5590"/><path d="M1007.8 537.4L1015 547L1012.9 540.6L1005.7 530.8Z" stroke="#7f5d97"/><path d="M1000.6 526.4L1007.8 537.4L1005.7 530.8L998.5 519.9Z" stroke="#7f68a0"/><path d="M993.4 515.9L1000.6 526.4L998.5 519.9L991.3 509.8Z" stroke="#7c76a9"/><path d="M986.2 507.5L993.4 515.9L991.3 509.8L984.1 501.8Z" stroke="#7880ac"/><path d="M979 502.2L986.2 507.5L984.1 501.8L976.9 497.1Z" stroke="#7587ae"/><path d="M971.8 500.8L979 502.2L976.9 497.1L969.7 496.2Z" stroke="#748aaf"/><path d="M964.6 503.1L971.8 500.8L969.7 496.2L962.5 499Z" stroke="#748aaf"/><path d="M1247.4 457.4L1254.6 456.9L1252.6 452.6L1245.4 452.8Z" stroke="#728daf"/><path d="M1240.2 461.7L1247.4 457.4L1245.4 452.8L1238.2 456.8Z" stroke="#748aaf"/><path d="M1233 469.8L1240.2 461.7L1238.2 456.8L1231 464.6Z" stroke="#7587ae"/><path d="M1225.8 481.1L1233 469.8L1231 464.6L1223.8 475.5Z" stroke="#7880ac"/><path d="M1218.6 494.3L1225.8 481.1L1223.8 475.5L1216.6 488.6Z" stroke="#7d73a7"/><path d="M1211.4 507.8L1218.6 494.3L1216.6 488.6L1209.4 502Z" stroke="#7f68a0"/><path d="M1204.2 519.7L1211.4 507.8L1209.4 502L1202.2 514.2Z" stroke="#7f5d97"/><path d="M1197 528.1L1204.2 519.7L1202.2 514.2L1195 523Z" stroke="#7d518c"/><path d="M1189.8 531.3L1197 528.1L1195 523L1187.8 526.9Z" stroke="#7c4d87"/><path d="M1182.6 527.9L1189.8 531.3L1187.8 526.9L1180.6 524.5Z" stroke="#7c4d87"/><path d="M1175.4 517.3L1182.6 527.9L1180.6 524.5L1173.4 515.3Z" stroke="#7e5590"/><path d="M1168.2 499.7L1175.4 517.3L1173.4 515.3L1166.2 499.2Z" stroke="#7f659d"/><path d="M1161 476L1168.2 499.7L1166.2 499.2L1159 477.2Z" stroke="#7b79aa"/><path d="M1153.8 447.8L1161 476L1159 477.2L1151.8 450.8Z" stroke="#7092b0"/><path d="M1146.6 417.6L1153.8 447.8L1151.8 450.8L1144.6 422.3Z" stroke="#67a8b0"/><path d="M1139.4 387.9L1146.6 417.6L1144.6 422.3L1137.4 394.3Z" stroke="#63c0aa"/><path d="M1132.2 361.4L1139.4 387.9L1137.4 394.3L1130.2 369.2Z" stroke="#80d499"/><path d="M1125 340.8L1132.2 361.4L1130.2 369.2L1123 349.7Z" stroke="#aee27e"/><path d="M1117.8 328L1125 340.8L1123 349.7L1115.8 337.6Z" stroke="#d3e966"/><path d="M1110.6 324.5L1117.8 328L1115.8 337.6L1108.6 334.2Z" stroke="#e2eb5f"/><path d="M1103.4 330.6L1110.6 324.5L1108.6 334.2L1101.4 340.1Z" stroke="#e2eb5f"/><path d="M1096.2 345.8L1103.4 330.6L1101.4 340.1L1094.2 354.7Z" stroke="#d3e966"/><path d="M1089 369L1096.2 345.8L1094.2 354.7L1087 376.8Z" stroke="#aee27e"/><path d="M1081.8 398L1089 369L1087 376.8L1079.8 404.3Z" stroke="#80d499"/><path d="M1074.6 430.2L1081.8 398L1079.8 404.3L1072.6 435Z" stroke="#63c0aa"/><path d="M1067.4 463L1074.6 430.2L1072.6 435L1065.4 466Z" stroke="#67a8b0"/><path d="M1060.2 493.6L1067.4 463L1065.4 466L1058.2 494.8Z" stroke="#7092b0"/><path d="M1053 519.9L1060.2 493.6L1058.2 494.8L1051 519.4Z" stroke="#7b79aa"/><path d="M1045.8 540L1053 519.9L1051 519.4L1043.8 538Z" stroke="#7f659d"/><path d="M1038.6 553.1L1045.8 540L1043.8 538L1036.6 549.8Z" stroke="#7e5590"/><path d="M1031.4 559L1038.6 553.1L1036.6 549.8L1029.4 554.7Z" stroke="#7c4d87"/><path d="M1024.2 558.4L1031.4 559L1029.4 554.7L1022.2 553.3Z" stroke="#7c4d87"/><path d="M1017 552.5L1024.2 558.4L1022.2 553.3L1015 547Z" stroke="#7d518c"/><path d="M1009.8 543.1L1017 552.5L1015 547L1007.8 537.4Z" stroke="#7f5d97"/><path d="M1002.6 532.1L1009.8 543.1L1007.8 537.4L1000.6 526.4Z" stroke="#7f68a0"/><path d="M995.4 521.5L1002.6 532.1L1000.6 526.4L993.4 515.9Z" stroke="#7d73a7"/><path d="M988.2 512.7L995.4 521.5L993.4 515.9L986.2 507.5Z" stroke="#7880ac"/><path d="M981 507.1L988.2 512.7L986.2 507.5L979 502.2Z" stroke="#7587ae"/><path d="M973.8 505.3L981 507.1L979 502.2L971.8 500.8Z" stroke="#748aaf"/><path d="M966.6 507.4L973.8 505.3L971.8 500.8L964.6 503.1Z" stroke="#728daf"/><path d="M1249.4 461.9L1256.6 461.3L1254.6 456.9L1247.4 457.4Z" stroke="#728daf"/><path d="M1242.2 466.3L1249.4 461.9L1247.4 457.4L1240.2 461.7Z" stroke="#748aaf"/><path d="M1235 474.6L1242.2 466.3L1240.2 461.7L1233 469.8Z" stroke="#7587ae"/><path d="M1227.8 485.9L1235 474.6L1233 469.8L1225.8 481.1Z" stroke="#7a7dab"/><path d="M1220.6 499.2L1227.8 485.9L1225.8 481.1L1218.6 494.3Z" stroke="#7d73a7"/><path d="M1213.4 512.7L1220.6 499.2L1218.6 494.3L1211.4 507.8Z" stroke="#7f68a0"/><path d="M1206.2 524.6L1213.4 512.7L1211.4 507.8L1204.2 519.7Z" stroke="#7f5d97"/><path d="M1199 532.8L1206.2 524.6L1204.2 519.7L1197 528.1Z" stroke="#7d518c"/><path d="M1191.8 535.7L1199 532.8L1197 528.1L1189.8 531.3Z" stroke="#7c4d87"/><path d="M1184.6 531.9L1191.8 535.7L1189.8 531.3L1182.6 527.9Z" stroke="#7c4d87"/><path d="M1177.4 520.9L1184.6 531.9L1182.6 527.9L1175.4 517.3Z" stroke="#7f5a93"/><path d="M1170.2 502.8L1177.4 520.9L1175.4 517.3L1168.2 499.7Z" stroke="#7f68a0"/><path d="M1163 478.5L1170.2 502.8L1168.2 499.7L1161 476Z" stroke="#7a7dab"/><path d="M1155.8 449.7L1163 478.5L1161 476L1153.8 447.8Z" stroke="#6f95b0"/><path d="M1148.6 418.9L1155.8 449.7L1153.8 447.8L1146.6 417.6Z" stroke="#65adaf"/><path d="M1141.4 388.6L1148.6 418.9L1146.6 417.6L1139.4 387.9Z" stroke="#67c5a7"/><path d="M1134.2 361.7L1141.4 388.6L1139.4 387.9L1132.2 361.4Z" stroke="#8bd893"/><path d="M1127 340.7L1134.2 361.7L1132.2 361.4L1125 340.8Z" stroke="#bce574"/><path d="M1119.8 327.7L1127 340.7L1125 340.8L1117.8 328Z" stroke="#e2eb5f"/><path d="M1112.6 324L1119.8 327.7L1117.8 328L1110.6 324.5Z" stroke="#f7ed62"/><path d="M1105.4 330.2L1112.6 324L1110.6 324.5L1103.4 330.6Z" stroke="#f7ed62"/><path d="M1098.2 345.7L1105.4 330.2L1103.4 330.6L1096.2 345.8Z" stroke="#e2eb5f"/><path d="M1091 369.2L1098.2 345.7L1096.2 345.8L1089 369Z" stroke="#bce574"/><path d="M1083.8 398.7L1091 369.2L1089 369L1081.8 398Z" stroke="#8bd893"/><path d="M1076.6 431.5L1083.8 398.7L1081.8 398L1074.6 430.2Z" stroke="#67c5a7"/><path d="M1069.4 464.9L1076.6 431.5L1074.6 430.2L1067.4 463Z" stroke="#65adaf"/><path d="M1062.2 496.1L1069.4 464.9L1067.4 463L1060.2 493.6Z" stroke="#6f95b0"/><path d="M1055 523L1062.2 496.1L1060.2 493.6L1053 519.9Z" stroke="#7a7dab"/><path d="M1047.8 543.6L1055 523L1053 519.9L1045.8 540Z" stroke="#7f68a0"/><path d="M1040.6 557.2L1047.8 543.6L1045.8 540L1038.6 553.1Z" stroke="#7f5a93"/><path d="M1033.4 563.5L1040.6 557.2L1038.6 553.1L1031.4 559Z" stroke="#7c4d87"/><path d="M1026.2 563.1L1033.4 563.5L1031.4 559L1024.2 558.4Z" stroke="#7c4d87"/><path d="M1019 557.4L1026.2 563.1L1024.2 558.4L1017 552.5Z" stroke="#7d518c"/><path d="M1011.8 548L1019 557.4L1017 552.5L1009.8 543.1Z" stroke="#7f5d97"/><path d="M1004.6 537L1011.8 548L1009.8 543.1L1002.6 532.1Z" stroke="#7f68a0"/><path d="M997.4 526.3L1004.6 537L1002.6 532.1L995.4 521.5Z" stroke="#7d73a7"/><path d="M990.2 517.5L997.4 526.3L995.4 521.5L988.2 512.7Z" stroke="#7a7dab"/><path d="M983 511.8L990.2 517.5L988.2 512.7L981 507.1Z" stroke="#7587ae"/><path d="M975.8 509.8L983 511.8L981 507.1L973.8 505.3Z" stroke="#748aaf"/><path d="M968.6 511.8L975.8 509.8L973.8 505.3L966.6 507.4Z" stroke="#728daf"/><path d="M1251.4 466.3L1258.6 465.9L1256.6 461.3L1249.4 461.9Z" stroke="#728daf"/><path d="M1244.2 470.7L1251.4 466.3L1249.4 461.9L1242.2 466.3Z" stroke="#748aaf"/><path d="M1237 478.8L1244.2 470.7L1242.2 466.3L1235 474.6Z" stroke="#7587ae"/><path d="M1229.8 490L1237 478.8L1235 474.6L1227.8 485.9Z" stroke="#7a7dab"/><path d="M1222.6 503.3L1229.8 490L1227.8 485.9L1220.6 499.2Z" stroke="#7d73a7"/><path d="M1215.4 516.8L1222.6 503.3L1220.6 499.2L1213.4 512.7Z" stroke="#7f68a0"/><path d="M1208.2 528.7L1215.4 516.8L1213.4 512.7L1206.2 524.6Z" stroke="#7f5d97"/><path d="M1201 537.1L1208.2 528.7L1206.2 524.6L1199 532.8Z" stroke="#7d518c"/><path d="M1193.8 540.3L1201 537.1L1199 532.8L1191.8 535.7Z" stroke="#7c4d87"/><path d="M1186.6 536.9L1193.8 540.3L1191.8 535.7L1184.6 531.9Z" stroke="#7c4d87"/><path d="M1179.4 526.3L1186.6 536.9L1184.6 531.9L1177.4 520.9Z" stroke="#7f5a93"/><path d="M1172.2 508.7L1179.4 526.3L1177.4 520.9L1170.2 502.8Z" stroke="#7f68a0"/><path d="M1165 484.9L1172.2 508.7L1170.2 502.8L1163 478.5Z" stroke="#7a7dab"/><path d="M1157.8 456.8L1165 484.9L1163 478.5L1155.8 449.7Z" stroke="#6f95b0"/><path d="M1150.6 426.6L1157.8 456.8L1155.8 449.7L1148.6 418.9Z" stroke="#65adaf"/><path d="M1143.4 396.8L1150.6 426.6L1148.6 418.9L1141.4 388.6Z" stroke="#67c5a7"/><path d="M1136.2 370.4L1143.4 396.8L1141.4 388.6L1134.2 361.7Z" stroke="#8bd893"/><path d="M1129 349.8L1136.2 370.4L1134.2 361.7L1127 340.7Z" stroke="#bce574"/><path d="M1121.8 337L1129 349.8L1127 340.7L1119.8 327.7Z" stroke="#e2eb5f"/><path d="M1114.6 333.4L1121.8 337L1119.8 327.7L1112.6 324Z" stroke="#f7ed62"/><path d="M1107.4 339.5L1114.6 333.4L1112.6 324L1105.4 330.2Z" stroke="#f7ed62"/><path d="M1100.2 354.8L1107.4 339.5L1105.4 330.2L1098.2 345.7Z" stroke="#e2eb5f"/><path d="M1093 378L1100.2 354.8L1098.2 345.7L1091 369.2Z" stroke="#bce574"/><path d="M1085.8 406.9L1093 378L1091 369.2L1083.8 398.7Z" stroke="#8bd893"/><path d="M1078.6 439.2L1085.8 406.9L1083.8 398.7L1076.6 431.5Z" stroke="#67c5a7"/><path d="M1071.4 471.9L1078.6 439.2L1076.6 431.5L1069.4 464.9Z" stroke="#65adaf"/><path d="M1064.2 502.6L1071.4 471.9L1069.4 464.9L1062.2 496.1Z" stroke="#6f95b0"/><path d="M1057 528.8L1064.2 502.6L1062.2 496.1L1055 523Z" stroke="#7a7dab"/><path d="M1049.8 549L1057 528.8L1055 523L1047.8 543.6Z" stroke="#7f68a0"/><path d="M1042.6 562.1L1049.8 549L1047.8 543.6L1040.6 557.2Z" stroke="#7f5a93"/><path d="M1035.4 568L1042.6 562.1L1040.6 557.2L1033.4 563.5Z" stroke="#7c4d87"/><path d="M1028.2 567.4L1035.4 568L1033.4 563.5L1026.2 563.1Z" stroke="#7c4d87"/><path d="M1021 561.5L1028.2 567.4L1026.2 563.1L1019 557.4Z" stroke="#7d518c"/><path d="M1013.8 552.1L1021 561.5L1019 557.4L1011.8 548Z" stroke="#7f5d97"/><path d="M1006.6 541.1L1013.8 552.1L1011.8 548L1004.6 537Z" stroke="#7f68a0"/><path d="M999.4 530.4L1006.6 541.1L1004.6 537L997.4 526.3Z" stroke="#7d73a7"/><path d="M992.2 521.7L999.4 530.4L997.4 526.3L990.2 517.5Z" stroke="#7a7dab"/><path d="M985 516.1L992.2 521.7L990.2 517.5L983 511.8Z" stroke="#7587ae"/><path d="M977.8 514.3L985 516.1L983 511.8L975.8 509.8Z" stroke="#748aaf"/><path d="M970.6 516.3L977.8 514.3L975.8 509.8L968.6 511.8Z" stroke="#728daf"/><path d="M1253.4 470.8L1260.6 470.5L1258.6 465.9L1251.4 466.3Z" stroke="#728daf"/><path d="M1246.2 474.8L1253.4 470.8L1251.4 466.3L1244.2 470.7Z" stroke="#748aaf"/><path d="M1239 482.5L1246.2 474.8L1244.2 470.7L1237 478.8Z" stroke="#7587ae"/><path d="M1231.8 493.5L1239 482.5L1237 478.8L1229.8 490Z" stroke="#7880ac"/><path d="M1224.6 506.5L1231.8 493.5L1229.8 490L1222.6 503.3Z" stroke="#7d73a7"/><path d="M1217.4 520L1224.6 506.5L1222.6 503.3L1215.4 516.8Z" stroke="#7f68a0"/><path d="M1210.2 532.1L1217.4 520L1215.4 516.8L1208.2 528.7Z" stroke="#7f5d97"/><path d="M1203 541L1210.2 532.1L1208.2 528.7L1201 537.1Z" stroke="#7d518c"/><path d="M1195.8 544.8L1203 541L1201 537.1L1193.8 540.3Z" stroke="#7c4d87"/><path d="M1188.6 542.5L1195.8 544.8L1193.8 540.3L1186.6 536.9Z" stroke="#7c4d87"/><path d="M1181.4 533.2L1188.6 542.5L1186.6 536.9L1179.4 526.3Z" stroke="#7e5590"/><path d="M1174.2 517.1L1181.4 533.2L1179.4 526.3L1172.2 508.7Z" stroke="#7f659d"/><path d="M1167 495.1L1174.2 517.1L1172.2 508.7L1165 484.9Z" stroke="#7b79aa"/><path d="M1159.8 468.8L1167 495.1L1165 484.9L1157.8 456.8Z" stroke="#7092b0"/><path d="M1152.6 440.3L1159.8 468.8L1157.8 456.8L1150.6 426.6Z" stroke="#67a8b0"/><path d="M1145.4 412.2L1152.6 440.3L1150.6 426.6L1143.4 396.8Z" stroke="#63c0aa"/><path d="M1138.2 387.2L1145.4 412.2L1143.4 396.8L1136.2 370.4Z" stroke="#80d499"/><path d="M1131 367.6L1138.2 387.2L1136.2 370.4L1129 349.8Z" stroke="#aee27e"/><path d="M1123.8 355.5L1131 367.6L1129 349.8L1121.8 337Z" stroke="#d3e966"/><path d="M1116.6 352.2L1123.8 355.5L1121.8 337L1114.6 333.4Z" stroke="#e2eb5f"/><path d="M1109.4 358L1116.6 352.2L1114.6 333.4L1107.4 339.5Z" stroke="#e2eb5f"/><path d="M1102.2 372.7L1109.4 358L1107.4 339.5L1100.2 354.8Z" stroke="#d3e966"/><path d="M1095 394.7L1102.2 372.7L1100.2 354.8L1093 378Z" stroke="#aee27e"/><path d="M1087.8 422.3L1095 394.7L1093 378L1085.8 406.9Z" stroke="#80d499"/><path d="M1080.6 452.9L1087.8 422.3L1085.8 406.9L1078.6 439.2Z" stroke="#63c0aa"/><path d="M1073.4 483.9L1080.6 452.9L1078.6 439.2L1071.4 471.9Z" stroke="#67a8b0"/><path d="M1066.2 512.8L1073.4 483.9L1071.4 471.9L1064.2 502.6Z" stroke="#7092b0"/><path d="M1059 537.3L1066.2 512.8L1064.2 502.6L1057 528.8Z" stroke="#7b79aa"/><path d="M1051.8 555.9L1059 537.3L1057 528.8L1049.8 549Z" stroke="#7f659d"/><path d="M1044.6 567.7L1051.8 555.9L1049.8 549L1042.6 562.1Z" stroke="#7e5590"/><path d="M1037.4 572.6L1044.6 567.7L1042.6 562.1L1035.4 568Z" stroke="#7c4d87"/><path d="M1030.2 571.3L1037.4 572.6L1035.4 568L1028.2 567.4Z" stroke="#7c4d87"/><path d="M1023 564.9L1030.2 571.3L1028.2 567.4L1021 561.5Z" stroke="#7d518c"/><path d="M1015.8 555.3L1023 564.9L1021 561.5L1013.8 552.1Z" stroke="#7f5d97"/><path d="M1008.6 544.4L1015.8 555.3L1013.8 552.1L1006.6 541.1Z" stroke="#7f68a0"/><path d="M1001.4 533.9L1008.6 544.4L1006.6 541.1L999.4 530.4Z" stroke="#7d73a7"/><path d="M994.2 525.4L1001.4 533.9L999.4 530.4L992.2 521.7Z" stroke="#7880ac"/><path d="M987 520.2L994.2 525.4L992.2 521.7L985 516.1Z" stroke="#7587ae"/><path d="M979.8 518.7L987 520.2L985 516.1L977.8 514.3Z" stroke="#748aaf"/><path d="M972.6 521L979.8 518.7L977.8 514.3L970.6 516.3Z" stroke="#728daf"/><path d="M1255.5 475.2L1262.7 475.4L1260.6 470.5L1253.4 470.8Z" stroke="#748aaf"/><path d="M1248.3 478.6L1255.5 475.2L1253.4 470.8L1246.2 474.8Z" stroke="#748aaf"/><path d="M1241.1 485.8L1248.3 478.6L1246.2 474.8L1239 482.5Z" stroke="#7587ae"/><path d="M1233.9 496.3L1241.1 485.8L1239 482.5L1231.8 493.5Z" stroke="#7880ac"/><path d="M1226.7 509L1233.9 496.3L1231.8 493.5L1224.6 506.5Z" stroke="#7c76a9"/><path d="M1219.5 522.4L1226.7 509L1224.6 506.5L1217.4 520Z" stroke="#7f68a0"/><path d="M1212.3 534.7L1219.5 522.4L1217.4 520L1210.2 532.1Z" stroke="#7f5d97"/><path d="M1205.1 544.2L1212.3 534.7L1210.2 532.1L1203 541Z" stroke="#7e5590"/><path d="M1197.9 549.3L1205.1 544.2L1203 541L1195.8 544.8Z" stroke="#7c4d87"/><path d="M1190.7 548.5L1197.9 549.3L1195.8 544.8L1188.6 542.5Z" stroke="#7c4d87"/><path d="M1183.5 541.3L1190.7 548.5L1188.6 542.5L1181.4 533.2Z" stroke="#7e5590"/><path d="M1176.3 527.6L1183.5 541.3L1181.4 533.2L1174.2 517.1Z" stroke="#7f619a"/><path d="M1169.1 508.3L1176.3 527.6L1174.2 517.1L1167 495.1Z" stroke="#7c76a9"/><path d="M1161.9 484.8L1169.1 508.3L1167 495.1L1159.8 468.8Z" stroke="#728daf"/><path d="M1154.7 459.1L1161.9 484.8L1159.8 468.8L1152.6 440.3Z" stroke="#6aa0b0"/><path d="M1147.5 433.6L1154.7 459.1L1152.6 440.3L1145.4 412.2Z" stroke="#62b6ae"/><path d="M1140.3 410.8L1147.5 433.6L1145.4 412.2L1138.2 387.2Z" stroke="#6ecaa3"/><path d="M1133.1 392.9L1140.3 410.8L1138.2 387.2L1131 367.6Z" stroke="#8bd893"/><path d="M1125.9 381.9L1133.1 392.9L1131 367.6L1123.8 355.5Z" stroke="#aee27e"/><path d="M1118.7 378.9L1125.9 381.9L1123.8 355.5L1116.6 352.2Z" stroke="#bce574"/><path d="M1111.5 384.4L1118.7 378.9L1116.6 352.2L1109.4 358Z" stroke="#bce574"/><path d="M1104.3 398L1111.5 384.4L1109.4 358L1102.2 372.7Z" stroke="#aee27e"/><path d="M1097.1 418.3L1104.3 398L1102.2 372.7L1095 394.7Z" stroke="#8bd893"/><path d="M1089.9 443.7L1097.1 418.3L1095 394.7L1087.8 422.3Z" stroke="#6ecaa3"/><path d="M1082.7 471.7L1089.9 443.7L1087.8 422.3L1080.6 452.9Z" stroke="#62b6ae"/><path d="M1075.5 499.9L1082.7 471.7L1080.6 452.9L1073.4 483.9Z" stroke="#6aa0b0"/><path d="M1068.3 526L1075.5 499.9L1073.4 483.9L1066.2 512.8Z" stroke="#728daf"/><path d="M1061.1 547.8L1068.3 526L1066.2 512.8L1059 537.3Z" stroke="#7c76a9"/><path d="M1053.9 564L1061.1 547.8L1059 537.3L1051.8 555.9Z" stroke="#7f619a"/><path d="M1046.7 573.7L1053.9 564L1051.8 555.9L1044.6 567.7Z" stroke="#7e5590"/><path d="M1039.5 577L1046.7 573.7L1044.6 567.7L1037.4 572.6Z" stroke="#7c4d87"/><path d="M1032.3 574.5L1039.5 577L1037.4 572.6L1030.2 571.3Z" stroke="#7c4d87"/><path d="M1025.1 567.5L1032.3 574.5L1030.2 571.3L1023 564.9Z" stroke="#7e5590"/><path d="M1017.9 557.7L1025.1 567.5L1023 564.9L1015.8 555.3Z" stroke="#7f5d97"/><path d="M1010.7 546.8L1017.9 557.7L1015.8 555.3L1008.6 544.4Z" stroke="#7f68a0"/><path d="M1003.5 536.7L1010.7 546.8L1008.6 544.4L1001.4 533.9Z" stroke="#7c76a9"/><path d="M996.3 528.8L1003.5 536.7L1001.4 533.9L994.2 525.4Z" stroke="#7880ac"/><path d="M989.1 524.1L996.3 528.8L994.2 525.4L987 520.2Z" stroke="#7587ae"/><path d="M981.9 523.1L989.1 524.1L987 520.2L979.8 518.7Z" stroke="#748aaf"/><path d="M974.7 525.9L981.9 523.1L979.8 518.7L972.6 521Z" stroke="#748aaf"/><path d="M1257.5 479.7L1264.7 480.5L1262.7 475.4L1255.5 475.2Z" stroke="#748aaf"/><path d="M1250.3 482.4L1257.5 479.7L1255.5 475.2L1248.3 478.6Z" stroke="#748aaf"/><path d="M1243.1 488.8L1250.3 482.4L1248.3 478.6L1241.1 485.8Z" stroke="#7587ae"/><path d="M1235.9 498.6L1243.1 488.8L1241.1 485.8L1233.9 496.3Z" stroke="#7880ac"/><path d="M1228.7 510.7L1235.9 498.6L1233.9 496.3L1226.7 509Z" stroke="#7c76a9"/><path d="M1221.5 523.9L1228.7 510.7L1226.7 509L1219.5 522.4Z" stroke="#7e6ca3"/><path d="M1214.3 536.5L1221.5 523.9L1219.5 522.4L1212.3 534.7Z" stroke="#7f619a"/><path d="M1207.1 546.7L1214.3 536.5L1212.3 534.7L1205.1 544.2Z" stroke="#7e5590"/><path d="M1199.9 553.1L1207.1 546.7L1205.1 544.2L1197.9 549.3Z" stroke="#7c4d87"/><path d="M1192.7 554.4L1199.9 553.1L1197.9 549.3L1190.7 548.5Z" stroke="#7c4d87"/><path d="M1185.5 549.8L1192.7 554.4L1190.7 548.5L1183.5 541.3Z" stroke="#7d518c"/><path d="M1178.3 539.2L1185.5 549.8L1183.5 541.3L1176.3 527.6Z" stroke="#7f5d97"/><path d="M1171.1 523.4L1178.3 539.2L1176.3 527.6L1169.1 508.3Z" stroke="#7e6ca3"/><path d="M1163.9 503.5L1171.1 523.4L1169.1 508.3L1161.9 484.8Z" stroke="#7880ac"/><path d="M1156.7 481.4L1163.9 503.5L1161.9 484.8L1154.7 459.1Z" stroke="#6f95b0"/><path d="M1149.5 459.3L1156.7 481.4L1154.7 459.1L1147.5 433.6Z" stroke="#67a8b0"/><path d="M1142.3 439.3L1149.5 459.3L1147.5 433.6L1140.3 410.8Z" stroke="#62bbac"/><path d="M1135.1 423.7L1142.3 439.3L1140.3 410.8L1133.1 392.9Z" stroke="#6ecaa3"/><path d="M1127.9 414.1L1135.1 423.7L1133.1 392.9L1125.9 381.9Z" stroke="#80d499"/><path d="M1120.7 411.6L1127.9 414.1L1125.9 381.9L1118.7 378.9Z" stroke="#8bd893"/><path d="M1113.5 416.6L1120.7 411.6L1118.7 378.9L1111.5 384.4Z" stroke="#8bd893"/><path d="M1106.3 428.8L1113.5 416.6L1111.5 384.4L1104.3 398Z" stroke="#80d499"/><path d="M1099.1 446.9L1106.3 428.8L1104.3 398L1097.1 418.3Z" stroke="#6ecaa3"/><path d="M1091.9 469.4L1099.1 446.9L1097.1 418.3L1089.9 443.7Z" stroke="#62bbac"/><path d="M1084.7 494L1091.9 469.4L1089.9 443.7L1082.7 471.7Z" stroke="#67a8b0"/><path d="M1077.5 518.7L1084.7 494L1082.7 471.7L1075.5 499.9Z" stroke="#6f95b0"/><path d="M1070.3 541L1077.5 518.7L1075.5 499.9L1068.3 526Z" stroke="#7880ac"/><path d="M1063.1 559.4L1070.3 541L1068.3 526L1061.1 547.8Z" stroke="#7e6ca3"/><path d="M1055.9 572.5L1063.1 559.4L1061.1 547.8L1053.9 564Z" stroke="#7f5d97"/><path d="M1048.7 579.6L1055.9 572.5L1053.9 564L1046.7 573.7Z" stroke="#7d518c"/><path d="M1041.5 580.9L1048.7 579.6L1046.7 573.7L1039.5 577Z" stroke="#7c4d87"/><path d="M1034.3 577L1041.5 580.9L1039.5 577L1032.3 574.5Z" stroke="#7c4d87"/><path d="M1027.1 569.3L1034.3 577L1032.3 574.5L1025.1 567.5Z" stroke="#7e5590"/><path d="M1019.9 559.2L1027.1 569.3L1025.1 567.5L1017.9 557.7Z" stroke="#7f619a"/><path d="M1012.7 548.6L1019.9 559.2L1017.9 557.7L1010.7 546.8Z" stroke="#7e6ca3"/><path d="M1005.5 538.9L1012.7 548.6L1010.7 546.8L1003.5 536.7Z" stroke="#7c76a9"/><path d="M998.3 531.7L1005.5 538.9L1003.5 536.7L996.3 528.8Z" stroke="#7880ac"/><path d="M991.1 527.8L998.3 531.7L996.3 528.8L989.1 524.1Z" stroke="#7587ae"/><path d="M983.9 527.6L991.1 527.8L989.1 524.1L981.9 523.1Z" stroke="#748aaf"/><path d="M976.7 531L983.9 527.6L981.9 523.1L974.7 525.9Z" stroke="#748aaf"/><path d="M1259.5 484.3L1266.7 485.9L1264.7 480.5L1257.5 479.7Z" stroke="#748aaf"/><path d="M1252.3 486.2L1259.5 484.3L1257.5 479.7L1250.3 482.4Z" stroke="#748aaf"/><path d="M1245.1 491.6L1252.3 486.2L1250.3 482.4L1243.1 488.8Z" stroke="#748aaf"/><path d="M1237.9 500.4L1245.1 491.6L1243.1 488.8L1235.9 498.6Z" stroke="#7783ad"/><path d="M1230.7 511.8L1237.9 500.4L1235.9 498.6L1228.7 510.7Z" stroke="#7b79aa"/><path d="M1223.5 524.6L1230.7 511.8L1228.7 510.7L1221.5 523.9Z" stroke="#7e6fa5"/><path d="M1216.3 537.3L1223.5 524.6L1221.5 523.9L1214.3 536.5Z" stroke="#7f659d"/><path d="M1209.1 548.3L1216.3 537.3L1214.3 536.5L1207.1 546.7Z" stroke="#7f5a93"/><path d="M1201.9 556.1L1209.1 548.3L1207.1 546.7L1199.9 553.1Z" stroke="#7d518c"/><path d="M1194.7 559.6L1201.9 556.1L1199.9 553.1L1192.7 554.4Z" stroke="#7c4d87"/><path d="M1187.5 557.9L1194.7 559.6L1192.7 554.4L1185.5 549.8Z" stroke="#7c4d87"/><path d="M1180.3 550.9L1187.5 557.9L1185.5 549.8L1178.3 539.2Z" stroke="#7e5590"/><path d="M1173.1 539L1180.3 550.9L1178.3 539.2L1171.1 523.4Z" stroke="#7f659d"/><path d="M1165.9 523.3L1173.1 539L1171.1 523.4L1163.9 503.5Z" stroke="#7c76a9"/><path d="M1158.7 505.4L1165.9 523.3L1163.9 503.5L1156.7 481.4Z" stroke="#7587ae"/><path d="M1151.5 487.2L1158.7 505.4L1156.7 481.4L1149.5 459.3Z" stroke="#6d98b0"/><path d="M1144.3 470.6L1151.5 487.2L1149.5 459.3L1142.3 439.3Z" stroke="#67a8b0"/><path d="M1137.1 457.5L1144.3 470.6L1142.3 439.3L1135.1 423.7Z" stroke="#62b6ae"/><path d="M1129.9 449.6L1137.1 457.5L1135.1 423.7L1127.9 414.1Z" stroke="#63c0aa"/><path d="M1122.7 447.6L1129.9 449.6L1127.9 414.1L1120.7 411.6Z" stroke="#67c5a7"/><path d="M1115.5 452.1L1122.7 447.6L1120.7 411.6L1113.5 416.6Z" stroke="#67c5a7"/><path d="M1108.3 462.6L1115.5 452.1L1113.5 416.6L1106.3 428.8Z" stroke="#63c0aa"/><path d="M1101.1 478.2L1108.3 462.6L1106.3 428.8L1099.1 446.9Z" stroke="#62b6ae"/><path d="M1093.9 497.3L1101.1 478.2L1099.1 446.9L1091.9 469.4Z" stroke="#67a8b0"/><path d="M1086.7 518L1093.9 497.3L1091.9 469.4L1084.7 494Z" stroke="#6d98b0"/><path d="M1079.5 538.5L1086.7 518L1084.7 494L1077.5 518.7Z" stroke="#7587ae"/><path d="M1072.3 556.6L1079.5 538.5L1077.5 518.7L1070.3 541Z" stroke="#7c76a9"/><path d="M1065.1 571L1072.3 556.6L1070.3 541L1063.1 559.4Z" stroke="#7f659d"/><path d="M1057.9 580.6L1065.1 571L1063.1 559.4L1055.9 572.5Z" stroke="#7e5590"/><path d="M1050.7 584.8L1057.9 580.6L1055.9 572.5L1048.7 579.6Z" stroke="#7c4d87"/><path d="M1043.5 583.9L1050.7 584.8L1048.7 579.6L1041.5 580.9Z" stroke="#7c4d87"/><path d="M1036.3 578.6L1043.5 583.9L1041.5 580.9L1034.3 577Z" stroke="#7d518c"/><path d="M1029.1 570.1L1036.3 578.6L1034.3 577L1027.1 569.3Z" stroke="#7f5a93"/><path d="M1021.9 559.9L1029.1 570.1L1027.1 569.3L1019.9 559.2Z" stroke="#7f659d"/><path d="M1014.7 549.6L1021.9 559.9L1019.9 559.2L1012.7 548.6Z" stroke="#7e6fa5"/><path d="M1007.5 540.8L1014.7 549.6L1012.7 548.6L1005.5 538.9Z" stroke="#7b79aa"/><path d="M1000.3 534.5L1007.5 540.8L1005.5 538.9L998.3 531.7Z" stroke="#7783ad"/><path d="M993.1 531.6L1000.3 534.5L998.3 531.7L991.1 527.8Z" stroke="#748aaf"/><path d="M985.9 532.3L993.1 531.6L991.1 527.8L983.9 527.6Z" stroke="#748aaf"/><path d="M978.7 536.4L985.9 532.3L983.9 527.6L976.7 531Z" stroke="#748aaf"/><path d="M1261.5 489.3L1268.7 491.7L1266.7 485.9L1259.5 484.3Z" stroke="#748aaf"/><path d="M1254.3 490.1L1261.5 489.3L1259.5 484.3L1252.3 486.2Z" stroke="#728daf"/><path d="M1247.1 494.4L1254.3 490.1L1252.3 486.2L1245.1 491.6Z" stroke="#748aaf"/><path d="M1239.9 502L1247.1 494.4L1245.1 491.6L1237.9 500.4Z" stroke="#7587ae"/><path d="M1232.7 512.4L1239.9 502L1237.9 500.4L1230.7 511.8Z" stroke="#7a7dab"/><path d="M1225.5 524.5L1232.7 512.4L1230.7 511.8L1223.5 524.6Z" stroke="#7d73a7"/><path d="M1218.3 537.1L1225.5 524.5L1223.5 524.6L1216.3 537.3Z" stroke="#7f68a0"/><path d="M1211.1 548.7L1218.3 537.1L1216.3 537.3L1209.1 548.3Z" stroke="#7f5d97"/><path d="M1203.9 557.9L1211.1 548.7L1209.1 548.3L1201.9 556.1Z" stroke="#7e5590"/><path d="M1196.7 563.5L1203.9 557.9L1201.9 556.1L1194.7 559.6Z" stroke="#7c4d87"/><path d="M1189.5 564.8L1196.7 563.5L1194.7 559.6L1187.5 557.9Z" stroke="#7c4d87"/><path d="M1182.3 561.4L1189.5 564.8L1187.5 557.9L1180.3 550.9Z" stroke="#7d518c"/><path d="M1175.1 553.7L1182.3 561.4L1180.3 550.9L1173.1 539Z" stroke="#7f5a93"/><path d="M1167.9 542.5L1175.1 553.7L1173.1 539L1165.9 523.3Z" stroke="#7f68a0"/><path d="M1160.7 529.1L1167.9 542.5L1165.9 523.3L1158.7 505.4Z" stroke="#7b79aa"/><path d="M1153.5 515L1160.7 529.1L1158.7 505.4L1151.5 487.2Z" stroke="#7587ae"/><path d="M1146.3 502L1153.5 515L1151.5 487.2L1144.3 470.6Z" stroke="#6f95b0"/><path d="M1139.1 491.8L1146.3 502L1144.3 470.6L1137.1 457.5Z" stroke="#6aa0b0"/><path d="M1131.9 485.6L1139.1 491.8L1137.1 457.5L1129.9 449.6Z" stroke="#67a8b0"/><path d="M1124.7 484.2L1131.9 485.6L1129.9 449.6L1122.7 447.6Z" stroke="#65adaf"/><path d="M1117.5 488.1L1124.7 484.2L1122.7 447.6L1115.5 452.1Z" stroke="#65adaf"/><path d="M1110.3 496.8L1117.5 488.1L1115.5 452.1L1108.3 462.6Z" stroke="#67a8b0"/><path d="M1103.1 509.6L1110.3 496.8L1108.3 462.6L1101.1 478.2Z" stroke="#6aa0b0"/><path d="M1095.9 525.1L1103.1 509.6L1101.1 478.2L1093.9 497.3Z" stroke="#6f95b0"/><path d="M1088.7 541.7L1095.9 525.1L1093.9 497.3L1086.7 518Z" stroke="#7587ae"/><path d="M1081.5 557.6L1088.7 541.7L1086.7 518L1079.5 538.5Z" stroke="#7b79aa"/><path d="M1074.3 571.4L1081.5 557.6L1079.5 538.5L1072.3 556.6Z" stroke="#7f68a0"/><path d="M1067.1 581.6L1074.3 571.4L1072.3 556.6L1065.1 571Z" stroke="#7f5a93"/><path d="M1059.9 587.5L1067.1 581.6L1065.1 571L1057.9 580.6Z" stroke="#7d518c"/><path d="M1052.7 588.7L1059.9 587.5L1057.9 580.6L1050.7 584.8Z" stroke="#7c4d87"/><path d="M1045.5 585.6L1052.7 588.7L1050.7 584.8L1043.5 583.9Z" stroke="#7c4d87"/><path d="M1038.3 579L1045.5 585.6L1043.5 583.9L1036.3 578.6Z" stroke="#7e5590"/><path d="M1031.1 569.9L1038.3 579L1036.3 578.6L1029.1 570.1Z" stroke="#7f5d97"/><path d="M1023.9 559.8L1031.1 569.9L1029.1 570.1L1021.9 559.9Z" stroke="#7f68a0"/><path d="M1016.7 550.2L1023.9 559.8L1021.9 559.9L1014.7 549.6Z" stroke="#7d73a7"/><path d="M1009.5 542.4L1016.7 550.2L1014.7 549.6L1007.5 540.8Z" stroke="#7a7dab"/><path d="M1002.3 537.3L1009.5 542.4L1007.5 540.8L1000.3 534.5Z" stroke="#7587ae"/><path d="M995.1 535.5L1002.3 537.3L1000.3 534.5L993.1 531.6Z" stroke="#748aaf"/><path d="M987.9 537.3L995.1 535.5L993.1 531.6L985.9 532.3Z" stroke="#728daf"/><path d="M980.7 542.1L987.9 537.3L985.9 532.3L978.7 536.4Z" stroke="#748aaf"/><path d="M1263.5 494.7L1270.7 497.9L1268.7 491.7L1261.5 489.3Z" stroke="#748aaf"/><path d="M1256.3 494.4L1263.5 494.7L1261.5 489.3L1254.3 490.1Z" stroke="#748aaf"/><path d="M1249.1 497.3L1256.3 494.4L1254.3 490.1L1247.1 494.4Z" stroke="#748aaf"/><path d="M1241.9 503.6L1249.1 497.3L1247.1 494.4L1239.9 502Z" stroke="#7587ae"/><path d="M1234.7 512.7L1241.9 503.6L1239.9 502L1232.7 512.4Z" stroke="#7880ac"/><path d="M1227.5 523.9L1234.7 512.7L1232.7 512.4L1225.5 524.5Z" stroke="#7c76a9"/><path d="M1220.3 536.1L1227.5 523.9L1225.5 524.5L1218.3 537.1Z" stroke="#7e6ca3"/><path d="M1213.1 547.9L1220.3 536.1L1218.3 537.1L1211.1 548.7Z" stroke="#7f619a"/><path d="M1205.9 558.2L1213.1 547.9L1211.1 548.7L1203.9 557.9Z" stroke="#7f5a93"/><path d="M1198.7 565.7L1205.9 558.2L1203.9 557.9L1196.7 563.5Z" stroke="#7d518c"/><path d="M1191.5 569.7L1198.7 565.7L1196.7 563.5L1189.5 564.8Z" stroke="#7c4d87"/><path d="M1184.3 569.9L1191.5 569.7L1189.5 564.8L1182.3 561.4Z" stroke="#7c4d87"/><path d="M1177.1 566.2L1184.3 569.9L1182.3 561.4L1175.1 553.7Z" stroke="#7d518c"/><path d="M1169.9 559.4L1177.1 566.2L1175.1 553.7L1167.9 542.5Z" stroke="#7f5d97"/><path d="M1162.7 550.5L1169.9 559.4L1167.9 542.5L1160.7 529.1Z" stroke="#7f68a0"/><path d="M1155.5 540.6L1162.7 550.5L1160.7 529.1L1153.5 515Z" stroke="#7c76a9"/><path d="M1148.3 531.3L1155.5 540.6L1153.5 515L1146.3 502Z" stroke="#7880ac"/><path d="M1141.1 523.9L1148.3 531.3L1146.3 502L1139.1 491.8Z" stroke="#728daf"/><path d="M1133.9 519.4L1141.1 523.9L1139.1 491.8L1131.9 485.6Z" stroke="#7092b0"/><path d="M1126.7 518.7L1133.9 519.4L1131.9 485.6L1124.7 484.2Z" stroke="#6f95b0"/><path d="M1119.5 522L1126.7 518.7L1124.7 484.2L1117.5 488.1Z" stroke="#6f95b0"/><path d="M1112.3 528.9L1119.5 522L1117.5 488.1L1110.3 496.8Z" stroke="#7092b0"/><path d="M1105.1 538.9L1112.3 528.9L1110.3 496.8L1103.1 509.6Z" stroke="#728daf"/><path d="M1097.9 550.7L1105.1 538.9L1103.1 509.6L1095.9 525.1Z" stroke="#7880ac"/><path d="M1090.7 563.1L1097.9 550.7L1095.9 525.1L1088.7 541.7Z" stroke="#7c76a9"/><path d="M1083.5 574.6L1090.7 563.1L1088.7 541.7L1081.5 557.6Z" stroke="#7f68a0"/><path d="M1076.3 583.9L1083.5 574.6L1081.5 557.6L1074.3 571.4Z" stroke="#7f5d97"/><path d="M1069.1 590.1L1076.3 583.9L1074.3 571.4L1067.1 581.6Z" stroke="#7d518c"/><path d="M1061.9 592.4L1069.1 590.1L1067.1 581.6L1059.9 587.5Z" stroke="#7c4d87"/><path d="M1054.7 590.9L1061.9 592.4L1059.9 587.5L1052.7 588.7Z" stroke="#7c4d87"/><path d="M1047.5 585.9L1054.7 590.9L1052.7 588.7L1045.5 585.6Z" stroke="#7d518c"/><path d="M1040.3 578.2L1047.5 585.9L1045.5 585.6L1038.3 579Z" stroke="#7f5a93"/><path d="M1033.1 568.9L1040.3 578.2L1038.3 579L1031.1 569.9Z" stroke="#7f619a"/><path d="M1025.9 559.2L1033.1 568.9L1031.1 569.9L1023.9 559.8Z" stroke="#7e6ca3"/><path d="M1018.7 550.5L1025.9 559.2L1023.9 559.8L1016.7 550.2Z" stroke="#7c76a9"/><path d="M1011.5 543.9L1018.7 550.5L1016.7 550.2L1009.5 542.4Z" stroke="#7880ac"/><path d="M1004.3 540.2L1011.5 543.9L1009.5 542.4L1002.3 537.3Z" stroke="#7587ae"/><path d="M997.1 539.8L1004.3 540.2L1002.3 537.3L995.1 535.5Z" stroke="#748aaf"/><path d="M989.9 542.7L997.1 539.8L995.1 535.5L987.9 537.3Z" stroke="#748aaf"/><path d="M982.7 548.4L989.9 542.7L987.9 537.3L980.7 542.1Z" stroke="#748aaf"/><path d="M1265.6 500.6L1272.8 504.6L1270.7 497.9L1263.5 494.7Z" stroke="#7587ae"/><path d="M1258.4 499.1L1265.6 500.6L1263.5 494.7L1256.3 494.4Z" stroke="#748aaf"/><path d="M1251.2 500.7L1258.4 499.1L1256.3 494.4L1249.1 497.3Z" stroke="#748aaf"/><path d="M1244 505.3L1251.2 500.7L1249.1 497.3L1241.9 503.6Z" stroke="#748aaf"/><path d="M1236.8 513L1244 505.3L1241.9 503.6L1234.7 512.7Z" stroke="#7783ad"/><path d="M1229.6 522.9L1236.8 513L1234.7 512.7L1227.5 523.9Z" stroke="#7a7dab"/><path d="M1222.4 534.3L1229.6 522.9L1227.5 523.9L1220.3 536.1Z" stroke="#7d73a7"/><path d="M1215.2 546.1L1222.4 534.3L1220.3 536.1L1213.1 547.9Z" stroke="#7f68a0"/><path d="M1208 556.9L1215.2 546.1L1213.1 547.9L1205.9 558.2Z" stroke="#7f5d97"/><path d="M1200.8 566L1208 556.9L1205.9 558.2L1198.7 565.7Z" stroke="#7e5590"/><path d="M1193.6 572.3L1200.8 566L1198.7 565.7L1191.5 569.7Z" stroke="#7c4d87"/><path d="M1186.4 575.5L1193.6 572.3L1191.5 569.7L1184.3 569.9Z" stroke="#7c4d87"/><path d="M1179.2 575.6L1186.4 575.5L1184.3 569.9L1177.1 566.2Z" stroke="#7c4d87"/><path d="M1172 572.9L1179.2 575.6L1177.1 566.2L1169.9 559.4Z" stroke="#7d518c"/><path d="M1164.8 568.1L1172 572.9L1169.9 559.4L1162.7 550.5Z" stroke="#7f5a93"/><path d="M1157.6 562.2L1164.8 568.1L1162.7 550.5L1155.5 540.6Z" stroke="#7f659d"/><path d="M1150.4 556.4L1157.6 562.2L1155.5 540.6L1148.3 531.3Z" stroke="#7e6ca3"/><path d="M1143.2 551.6L1150.4 556.4L1148.3 531.3L1141.1 523.9Z" stroke="#7c76a9"/><path d="M1136 548.9L1143.2 551.6L1141.1 523.9L1133.9 519.4Z" stroke="#7b79aa"/><path d="M1128.8 548.8L1136 548.9L1133.9 519.4L1126.7 518.7Z" stroke="#7a7dab"/><path d="M1121.6 551.4L1128.8 548.8L1126.7 518.7L1119.5 522Z" stroke="#7a7dab"/><path d="M1114.4 556.7L1121.6 551.4L1119.5 522L1112.3 528.9Z" stroke="#7b79aa"/><path d="M1107.2 564L1114.4 556.7L1112.3 528.9L1105.1 538.9Z" stroke="#7c76a9"/><path d="M1100 572.3L1107.2 564L1105.1 538.9L1097.9 550.7Z" stroke="#7e6ca3"/><path d="M1092.8 580.7L1100 572.3L1097.9 550.7L1090.7 563.1Z" stroke="#7f659d"/><path d="M1085.6 588L1092.8 580.7L1090.7 563.1L1083.5 574.6Z" stroke="#7f5a93"/><path d="M1078.4 593.3L1085.6 588L1083.5 574.6L1076.3 583.9Z" stroke="#7d518c"/><path d="M1071.2 595.7L1078.4 593.3L1076.3 583.9L1069.1 590.1Z" stroke="#7c4d87"/><path d="M1064 595L1071.2 595.7L1069.1 590.1L1061.9 592.4Z" stroke="#7c4d87"/><path d="M1056.8 591.2L1064 595L1061.9 592.4L1054.7 590.9Z" stroke="#7c4d87"/><path d="M1049.6 584.7L1056.8 591.2L1054.7 590.9L1047.5 585.9Z" stroke="#7e5590"/><path d="M1042.4 576.3L1049.6 584.7L1047.5 585.9L1040.3 578.2Z" stroke="#7f5d97"/><path d="M1035.2 567.1L1042.4 576.3L1040.3 578.2L1033.1 568.9Z" stroke="#7f68a0"/><path d="M1028 558.3L1035.2 567.1L1033.1 568.9L1025.9 559.2Z" stroke="#7d73a7"/><path d="M1020.8 550.8L1028 558.3L1025.9 559.2L1018.7 550.5Z" stroke="#7a7dab"/><path d="M1013.6 545.7L1020.8 550.8L1018.7 550.5L1011.5 543.9Z" stroke="#7783ad"/><path d="M1006.4 543.6L1013.6 545.7L1011.5 543.9L1004.3 540.2Z" stroke="#748aaf"/><path d="M999.2 544.6L1006.4 543.6L1004.3 540.2L997.1 539.8Z" stroke="#748aaf"/><path d="M992 548.6L999.2 544.6L997.1 539.8L989.9 542.7Z" stroke="#748aaf"/><path d="M984.8 555.1L992 548.6L989.9 542.7L982.7 548.4Z" stroke="#7587ae"/><path d="M1267.6 507.2L1274.8 511.8L1272.8 504.6L1265.6 500.6Z" stroke="#7587ae"/><path d="M1260.4 504.6L1267.6 507.2L1265.6 500.6L1258.4 499.1Z" stroke="#748aaf"/><path d="M1253.2 504.6L1260.4 504.6L1258.4 499.1L1251.2 500.7Z" stroke="#728daf"/><path d="M1246 507.7L1253.2 504.6L1251.2 500.7L1244 505.3Z" stroke="#748aaf"/><path d="M1238.8 513.6L1246 507.7L1244 505.3L1236.8 513Z" stroke="#7587ae"/><path d="M1231.6 522L1238.8 513.6L1236.8 513L1229.6 522.9Z" stroke="#7880ac"/><path d="M1224.4 532.3L1231.6 522L1229.6 522.9L1222.4 534.3Z" stroke="#7b79aa"/><path d="M1217.2 543.4L1224.4 532.3L1222.4 534.3L1215.2 546.1Z" stroke="#7e6fa5"/><path d="M1210 554.4L1217.2 543.4L1215.2 546.1L1208 556.9Z" stroke="#7f659d"/><path d="M1202.8 564.3L1210 554.4L1208 556.9L1200.8 566Z" stroke="#7f5d97"/><path d="M1195.6 572.4L1202.8 564.3L1200.8 566L1193.6 572.3Z" stroke="#7e5590"/><path d="M1188.4 578.1L1195.6 572.4L1193.6 572.3L1186.4 575.5Z" stroke="#7c4d87"/><path d="M1181.2 581.2L1188.4 578.1L1186.4 575.5L1179.2 575.6Z" stroke="#7c4d87"/><path d="M1174 582L1181.2 581.2L1179.2 575.6L1172 572.9Z" stroke="#7c4d87"/><path d="M1166.8 580.9L1174 582L1172 572.9L1164.8 568.1Z" stroke="#7d518c"/><path d="M1159.6 578.5L1166.8 580.9L1164.8 568.1L1157.6 562.2Z" stroke="#7e5590"/><path d="M1152.4 575.8L1159.6 578.5L1157.6 562.2L1150.4 556.4Z" stroke="#7f5d97"/><path d="M1145.2 573.5L1152.4 575.8L1150.4 556.4L1143.2 551.6Z" stroke="#7f619a"/><path d="M1138 572.3L1145.2 573.5L1143.2 551.6L1136 548.9Z" stroke="#7f659d"/><path d="M1130.8 572.7L1138 572.3L1136 548.9L1128.8 548.8Z" stroke="#7f68a0"/><path d="M1123.6 574.8L1130.8 572.7L1128.8 548.8L1121.6 551.4Z" stroke="#7f68a0"/><path d="M1116.4 578.5L1123.6 574.8L1121.6 551.4L1114.4 556.7Z" stroke="#7f659d"/><path d="M1109.2 583.4L1116.4 578.5L1114.4 556.7L1107.2 564Z" stroke="#7f619a"/><path d="M1102 588.6L1109.2 583.4L1107.2 564L1100 572.3Z" stroke="#7f5d97"/><path d="M1094.8 593.5L1102 588.6L1100 572.3L1092.8 580.7Z" stroke="#7e5590"/><path d="M1087.6 597.2L1094.8 593.5L1092.8 580.7L1085.6 588Z" stroke="#7d518c"/><path d="M1080.4 598.9L1087.6 597.2L1085.6 588L1078.4 593.3Z" stroke="#7c4d87"/><path d="M1073.2 598.3L1080.4 598.9L1078.4 593.3L1071.2 595.7Z" stroke="#7c4d87"/><path d="M1066 595.1L1073.2 598.3L1071.2 595.7L1064 595Z" stroke="#7c4d87"/><path d="M1058.8 589.5L1066 595.1L1064 595L1056.8 591.2Z" stroke="#7e5590"/><path d="M1051.6 582.1L1058.8 589.5L1056.8 591.2L1049.6 584.7Z" stroke="#7f5d97"/><path d="M1044.4 573.6L1051.6 582.1L1049.6 584.7L1042.4 576.3Z" stroke="#7f659d"/><path d="M1037.2 565.1L1044.4 573.6L1042.4 576.3L1035.2 567.1Z" stroke="#7e6fa5"/><path d="M1030 557.4L1037.2 565.1L1035.2 567.1L1028 558.3Z" stroke="#7b79aa"/><path d="M1022.8 551.4L1030 557.4L1028 558.3L1020.8 550.8Z" stroke="#7880ac"/><path d="M1015.6 548L1022.8 551.4L1020.8 550.8L1013.6 545.7Z" stroke="#7587ae"/><path d="M1008.4 547.5L1015.6 548L1013.6 545.7L1006.4 543.6Z" stroke="#748aaf"/><path d="M1001.2 550L1008.4 547.5L1006.4 543.6L999.2 544.6Z" stroke="#728daf"/><path d="M994 555.1L1001.2 550L999.2 544.6L992 548.6Z" stroke="#748aaf"/><path d="M986.8 562.3L994 555.1L992 548.6L984.8 555.1Z" stroke="#7587ae"/><path d="M1269.6 514.4L1276.8 519.5L1274.8 511.8L1267.6 507.2Z" stroke="#7783ad"/><path d="M1262.4 510.8L1269.6 514.4L1267.6 507.2L1260.4 504.6Z" stroke="#7587ae"/><path d="M1255.2 509.4L1262.4 510.8L1260.4 504.6L1253.2 504.6Z" stroke="#748aaf"/><path d="M1248 510.7L1255.2 509.4L1253.2 504.6L1246 507.7Z" stroke="#748aaf"/><path d="M1240.8 514.8L1248 510.7L1246 507.7L1238.8 513.6Z" stroke="#748aaf"/><path d="M1233.6 521.5L1240.8 514.8L1238.8 513.6L1231.6 522Z" stroke="#7783ad"/><path d="M1226.4 530.2L1233.6 521.5L1231.6 522L1224.4 532.3Z" stroke="#7a7dab"/><path d="M1219.2 540.3L1226.4 530.2L1224.4 532.3L1217.2 543.4Z" stroke="#7c76a9"/><path d="M1212 550.8L1219.2 540.3L1217.2 543.4L1210 554.4Z" stroke="#7e6ca3"/><path d="M1204.8 561L1212 550.8L1210 554.4L1202.8 564.3Z" stroke="#7f659d"/><path d="M1197.6 570L1204.8 561L1202.8 564.3L1195.6 572.4Z" stroke="#7f5a93"/><path d="M1190.4 577.5L1197.6 570L1195.6 572.4L1188.4 578.1Z" stroke="#7e5590"/><path d="M1183.2 583L1190.4 577.5L1188.4 578.1L1181.2 581.2Z" stroke="#7c4d87"/><path d="M1176 586.5L1183.2 583L1181.2 581.2L1174 582Z" stroke="#7c4d87"/><path d="M1168.8 588.3L1176 586.5L1174 582L1166.8 580.9Z" stroke="#7c4d87"/><path d="M1161.6 588.9L1168.8 588.3L1166.8 580.9L1159.6 578.5Z" stroke="#7c4d87"/><path d="M1154.4 588.7L1161.6 588.9L1159.6 578.5L1152.4 575.8Z" stroke="#7d518c"/><path d="M1147.2 588.5L1154.4 588.7L1152.4 575.8L1145.2 573.5Z" stroke="#7e5590"/><path d="M1140 588.6L1147.2 588.5L1145.2 573.5L1138 572.3Z" stroke="#7e5590"/><path d="M1132.8 589.4L1140 588.6L1138 572.3L1130.8 572.7Z" stroke="#7f5a93"/><path d="M1125.6 591.1L1132.8 589.4L1130.8 572.7L1123.6 574.8Z" stroke="#7f5a93"/><path d="M1118.4 593.5L1125.6 591.1L1123.6 574.8L1116.4 578.5Z" stroke="#7e5590"/><path d="M1111.2 596.3L1118.4 593.5L1116.4 578.5L1109.2 583.4Z" stroke="#7e5590"/><path d="M1104 599L1111.2 596.3L1109.2 583.4L1102 588.6Z" stroke="#7d518c"/><path d="M1096.8 600.9L1104 599L1102 588.6L1094.8 593.5Z" stroke="#7c4d87"/><path d="M1089.6 601.6L1096.8 600.9L1094.8 593.5L1087.6 597.2Z" stroke="#7c4d87"/><path d="M1082.4 600.6L1089.6 601.6L1087.6 597.2L1080.4 598.9Z" stroke="#7c4d87"/><path d="M1075.2 597.7L1082.4 600.6L1080.4 598.9L1073.2 598.3Z" stroke="#7c4d87"/><path d="M1068 592.7L1075.2 597.7L1073.2 598.3L1066 595.1Z" stroke="#7e5590"/><path d="M1060.8 586.2L1068 592.7L1066 595.1L1058.8 589.5Z" stroke="#7f5a93"/><path d="M1053.6 578.5L1060.8 586.2L1058.8 589.5L1051.6 582.1Z" stroke="#7f659d"/><path d="M1046.4 570.5L1053.6 578.5L1051.6 582.1L1044.4 573.6Z" stroke="#7e6ca3"/><path d="M1039.2 563L1046.4 570.5L1044.4 573.6L1037.2 565.1Z" stroke="#7c76a9"/><path d="M1032 556.8L1039.2 563L1037.2 565.1L1030 557.4Z" stroke="#7a7dab"/><path d="M1024.8 552.7L1032 556.8L1030 557.4L1022.8 551.4Z" stroke="#7783ad"/><path d="M1017.6 551.1L1024.8 552.7L1022.8 551.4L1015.6 548Z" stroke="#748aaf"/><path d="M1010.4 552.3L1017.6 551.1L1015.6 548L1008.4 547.5Z" stroke="#748aaf"/><path d="M1003.2 556.2L1010.4 552.3L1008.4 547.5L1001.2 550Z" stroke="#748aaf"/><path d="M996 562.3L1003.2 556.2L1001.2 550L994 555.1Z" stroke="#7587ae"/><path d="M988.8 570L996 562.3L994 555.1L986.8 562.3Z" stroke="#7783ad"/><path d="M1271.6 522.2L1278.8 527.7L1276.8 519.5L1269.6 514.4Z" stroke="#7880ac"/><path d="M1264.4 517.8L1271.6 522.2L1269.6 514.4L1262.4 510.8Z" stroke="#7587ae"/><path d="M1257.2 515.2L1264.4 517.8L1262.4 510.8L1255.2 509.4Z" stroke="#748aaf"/><path d="M1250 514.9L1257.2 515.2L1255.2 509.4L1248 510.7Z" stroke="#728daf"/><path d="M1242.8 517.1L1250 514.9L1248 510.7L1240.8 514.8Z" stroke="#748aaf"/><path d="M1235.6 521.8L1242.8 517.1L1240.8 514.8L1233.6 521.5Z" stroke="#7587ae"/><path d="M1228.4 528.7L1235.6 521.8L1233.6 521.5L1226.4 530.2Z" stroke="#7783ad"/><path d="M1221.2 537.3L1228.4 528.7L1226.4 530.2L1219.2 540.3Z" stroke="#7a7dab"/><path d="M1214 546.8L1221.2 537.3L1219.2 540.3L1212 550.8Z" stroke="#7d73a7"/><path d="M1206.8 556.5L1214 546.8L1212 550.8L1204.8 561Z" stroke="#7e6ca3"/><path d="M1199.6 565.9L1206.8 556.5L1204.8 561L1197.6 570Z" stroke="#7f659d"/><path d="M1192.4 574.2L1199.6 565.9L1197.6 570L1190.4 577.5Z" stroke="#7f5d97"/><path d="M1185.2 581.2L1192.4 574.2L1190.4 577.5L1183.2 583Z" stroke="#7e5590"/><path d="M1178 586.6L1185.2 581.2L1183.2 583L1176 586.5Z" stroke="#7d518c"/><path d="M1170.8 590.6L1178 586.6L1176 586.5L1168.8 588.3Z" stroke="#7c4d87"/><path d="M1163.6 593.4L1170.8 590.6L1168.8 588.3L1161.6 588.9Z" stroke="#7c4d87"/><path d="M1156.4 595.3L1163.6 593.4L1161.6 588.9L1154.4 588.7Z" stroke="#7c4d87"/><path d="M1149.2 596.6L1156.4 595.3L1154.4 588.7L1147.2 588.5Z" stroke="#7c4d87"/><path d="M1142 597.8L1149.2 596.6L1147.2 588.5L1140 588.6Z" stroke="#7c4d87"/><path d="M1134.8 598.9L1142 597.8L1140 588.6L1132.8 589.4Z" stroke="#7c4d87"/><path d="M1127.6 600.3L1134.8 598.9L1132.8 589.4L1125.6 591.1Z" stroke="#7c4d87"/><path d="M1120.4 601.6L1127.6 600.3L1125.6 591.1L1118.4 593.5Z" stroke="#7c4d87"/><path d="M1113.2 602.8L1120.4 601.6L1118.4 593.5L1111.2 596.3Z" stroke="#7c4d87"/><path d="M1106 603.5L1113.2 602.8L1111.2 596.3L1104 599Z" stroke="#7c4d87"/><path d="M1098.8 603.2L1106 603.5L1104 599L1096.8 600.9Z" stroke="#7c4d87"/><path d="M1091.6 601.8L1098.8 603.2L1096.8 600.9L1089.6 601.6Z" stroke="#7c4d87"/><path d="M1084.4 598.8L1091.6 601.8L1089.6 601.6L1082.4 600.6Z" stroke="#7d518c"/><path d="M1077.2 594.4L1084.4 598.8L1082.4 600.6L1075.2 597.7Z" stroke="#7e5590"/><path d="M1070 588.6L1077.2 594.4L1075.2 597.7L1068 592.7Z" stroke="#7f5d97"/><path d="M1062.8 581.8L1070 588.6L1068 592.7L1060.8 586.2Z" stroke="#7f659d"/><path d="M1055.6 574.5L1062.8 581.8L1060.8 586.2L1053.6 578.5Z" stroke="#7e6ca3"/><path d="M1048.4 567.5L1055.6 574.5L1053.6 578.5L1046.4 570.5Z" stroke="#7d73a7"/><path d="M1041.2 561.5L1048.4 567.5L1046.4 570.5L1039.2 563Z" stroke="#7a7dab"/><path d="M1034 557.2L1041.2 561.5L1039.2 563L1032 556.8Z" stroke="#7783ad"/><path d="M1026.8 555L1034 557.2L1032 556.8L1024.8 552.7Z" stroke="#7587ae"/><path d="M1019.6 555.3L1026.8 555L1024.8 552.7L1017.6 551.1Z" stroke="#748aaf"/><path d="M1012.4 558.1L1019.6 555.3L1017.6 551.1L1010.4 552.3Z" stroke="#728daf"/><path d="M1005.2 563.2L1012.4 558.1L1010.4 552.3L1003.2 556.2Z" stroke="#748aaf"/><path d="M998 570.2L1005.2 563.2L1003.2 556.2L996 562.3Z" stroke="#7587ae"/><path d="M990.8 578.2L998 570.2L996 562.3L988.8 570Z" stroke="#7880ac"/><path d="M1273.6 530.6L1280.8 536.2L1278.8 527.7L1271.6 522.2Z" stroke="#7a7dab"/><path d="M1266.4 525.7L1273.6 530.6L1271.6 522.2L1264.4 517.8Z" stroke="#7783ad"/><path d="M1259.2 522L1266.4 525.7L1264.4 517.8L1257.2 515.2Z" stroke="#7587ae"/><path d="M1252 520.2L1259.2 522L1257.2 515.2L1250 514.9Z" stroke="#748aaf"/><path d="M1244.8 520.6L1252 520.2L1250 514.9L1242.8 517.1Z" stroke="#728daf"/><path d="M1237.6 523.3L1244.8 520.6L1242.8 517.1L1235.6 521.8Z" stroke="#748aaf"/><path d="M1230.4 528.3L1237.6 523.3L1235.6 521.8L1228.4 528.7Z" stroke="#7587ae"/><path d="M1223.2 535L1230.4 528.3L1228.4 528.7L1221.2 537.3Z" stroke="#7783ad"/><path d="M1216 543L1223.2 535L1221.2 537.3L1214 546.8Z" stroke="#7a7dab"/><path d="M1208.8 551.8L1216 543L1214 546.8L1206.8 556.5Z" stroke="#7d73a7"/><path d="M1201.6 560.6L1208.8 551.8L1206.8 556.5L1199.6 565.9Z" stroke="#7e6ca3"/><path d="M1194.4 569.1L1201.6 560.6L1199.6 565.9L1192.4 574.2Z" stroke="#7f659d"/><path d="M1187.2 576.7L1194.4 569.1L1192.4 574.2L1185.2 581.2Z" stroke="#7f5d97"/><path d="M1180 583.2L1187.2 576.7L1185.2 581.2L1178 586.6Z" stroke="#7f5a93"/><path d="M1172.8 588.5L1180 583.2L1178 586.6L1170.8 590.6Z" stroke="#7e5590"/><path d="M1165.6 592.7L1172.8 588.5L1170.8 590.6L1163.6 593.4Z" stroke="#7d518c"/><path d="M1158.4 596L1165.6 592.7L1163.6 593.4L1156.4 595.3Z" stroke="#7c4d87"/><path d="M1151.2 598.5L1158.4 596L1156.4 595.3L1149.2 596.6Z" stroke="#7c4d87"/><path d="M1144 600.4L1151.2 598.5L1149.2 596.6L1142 597.8Z" stroke="#7c4d87"/><path d="M1136.8 601.8L1144 600.4L1142 597.8L1134.8 598.9Z" stroke="#7c4d87"/><path d="M1129.6 602.9L1136.8 601.8L1134.8 598.9L1127.6 600.3Z" stroke="#7c4d87"/><path d="M1122.4 603.5L1129.6 602.9L1127.6 600.3L1120.4 601.6Z" stroke="#7c4d87"/><path d="M1115.2 603.6L1122.4 603.5L1120.4 601.6L1113.2 602.8Z" stroke="#7c4d87"/><path d="M1108 602.8L1115.2 603.6L1113.2 602.8L1106 603.5Z" stroke="#7c4d87"/><path d="M1100.8 601.1L1108 602.8L1106 603.5L1098.8 603.2Z" stroke="#7d518c"/><path d="M1093.6 598.3L1100.8 601.1L1098.8 603.2L1091.6 601.8Z" stroke="#7e5590"/><path d="M1086.4 594.3L1093.6 598.3L1091.6 601.8L1084.4 598.8Z" stroke="#7f5a93"/><path d="M1079.2 589.2L1086.4 594.3L1084.4 598.8L1077.2 594.4Z" stroke="#7f5d97"/><path d="M1072 583.3L1079.2 589.2L1077.2 594.4L1070 588.6Z" stroke="#7f659d"/><path d="M1064.8 577L1072 583.3L1070 588.6L1062.8 581.8Z" stroke="#7e6ca3"/><path d="M1057.6 570.8L1064.8 577L1062.8 581.8L1055.6 574.5Z" stroke="#7d73a7"/><path d="M1050.4 565.3L1057.6 570.8L1055.6 574.5L1048.4 567.5Z" stroke="#7a7dab"/><path d="M1043.2 561.1L1050.4 565.3L1048.4 567.5L1041.2 561.5Z" stroke="#7783ad"/><path d="M1036 558.7L1043.2 561.1L1041.2 561.5L1034 557.2Z" stroke="#7587ae"/><path d="M1028.8 558.5L1036 558.7L1034 557.2L1026.8 555Z" stroke="#748aaf"/><path d="M1021.6 560.6L1028.8 558.5L1026.8 555L1019.6 555.3Z" stroke="#728daf"/><path d="M1014.4 564.9L1021.6 560.6L1019.6 555.3L1012.4 558.1Z" stroke="#748aaf"/><path d="M1007.2 571.1L1014.4 564.9L1012.4 558.1L1005.2 563.2Z" stroke="#7587ae"/><path d="M1000 578.6L1007.2 571.1L1005.2 563.2L998 570.2Z" stroke="#7783ad"/><path d="M992.8 586.7L1000 578.6L998 570.2L990.8 578.2Z" stroke="#7a7dab"/><path d="M1275.7 539.5L1282.9 544.8L1280.8 536.2L1273.6 530.6Z" stroke="#7b79aa"/><path d="M1268.5 534.3L1275.7 539.5L1273.6 530.6L1266.4 525.7Z" stroke="#7880ac"/><path d="M1261.3 529.9L1268.5 534.3L1266.4 525.7L1259.2 522Z" stroke="#7783ad"/><path d="M1254.1 526.9L1261.3 529.9L1259.2 522L1252 520.2Z" stroke="#748aaf"/><path d="M1246.9 525.6L1254.1 526.9L1252 520.2L1244.8 520.6Z" stroke="#748aaf"/><path d="M1239.7 526.4L1246.9 525.6L1244.8 520.6L1237.6 523.3Z" stroke="#728daf"/><path d="M1232.5 529.3L1239.7 526.4L1237.6 523.3L1230.4 528.3Z" stroke="#748aaf"/><path d="M1225.3 534L1232.5 529.3L1230.4 528.3L1223.2 535Z" stroke="#7587ae"/><path d="M1218.1 540.2L1225.3 534L1223.2 535L1216 543Z" stroke="#7783ad"/><path d="M1210.9 547.5L1218.1 540.2L1216 543L1208.8 551.8Z" stroke="#7a7dab"/><path d="M1203.7 555.3L1210.9 547.5L1208.8 551.8L1201.6 560.6Z" stroke="#7c76a9"/><path d="M1196.5 563.1L1203.7 555.3L1201.6 560.6L1194.4 569.1Z" stroke="#7e6fa5"/><path d="M1189.3 570.6L1196.5 563.1L1194.4 569.1L1187.2 576.7Z" stroke="#7f68a0"/><path d="M1182.1 577.3L1189.3 570.6L1187.2 576.7L1180 583.2Z" stroke="#7f619a"/><path d="M1174.9 583.3L1182.1 577.3L1180 583.2L1172.8 588.5Z" stroke="#7f5d97"/><path d="M1167.7 588.2L1174.9 583.3L1172.8 588.5L1165.6 592.7Z" stroke="#7f5a93"/><path d="M1160.5 592.2L1167.7 588.2L1165.6 592.7L1158.4 596Z" stroke="#7e5590"/><path d="M1153.3 595.4L1160.5 592.2L1158.4 596L1151.2 598.5Z" stroke="#7e5590"/><path d="M1146.1 597.7L1153.3 595.4L1151.2 598.5L1144 600.4Z" stroke="#7d518c"/><path d="M1138.9 599.3L1146.1 597.7L1144 600.4L1136.8 601.8Z" stroke="#7d518c"/><path d="M1131.7 600.2L1138.9 599.3L1136.8 601.8L1129.6 602.9Z" stroke="#7d518c"/><path d="M1124.5 600.4L1131.7 600.2L1129.6 602.9L1122.4 603.5Z" stroke="#7d518c"/><path d="M1117.3 599.8L1124.5 600.4L1122.4 603.5L1115.2 603.6Z" stroke="#7e5590"/><path d="M1110.1 598.3L1117.3 599.8L1115.2 603.6L1108 602.8Z" stroke="#7e5590"/><path d="M1102.9 595.9L1110.1 598.3L1108 602.8L1100.8 601.1Z" stroke="#7f5a93"/><path d="M1095.7 592.5L1102.9 595.9L1100.8 601.1L1093.6 598.3Z" stroke="#7f5d97"/><path d="M1088.5 588.2L1095.7 592.5L1093.6 598.3L1086.4 594.3Z" stroke="#7f619a"/><path d="M1081.3 583.3L1088.5 588.2L1086.4 594.3L1079.2 589.2Z" stroke="#7f68a0"/><path d="M1074.1 578L1081.3 583.3L1079.2 589.2L1072 583.3Z" stroke="#7e6fa5"/><path d="M1066.9 572.7L1074.1 578L1072 583.3L1064.8 577Z" stroke="#7c76a9"/><path d="M1059.7 568L1066.9 572.7L1064.8 577L1057.6 570.8Z" stroke="#7a7dab"/><path d="M1052.5 564.3L1059.7 568L1057.6 570.8L1050.4 565.3Z" stroke="#7783ad"/><path d="M1045.3 562.1L1052.5 564.3L1050.4 565.3L1043.2 561.1Z" stroke="#7587ae"/><path d="M1038.1 561.8L1045.3 562.1L1043.2 561.1L1036 558.7Z" stroke="#748aaf"/><path d="M1030.9 563.5L1038.1 561.8L1036 558.7L1028.8 558.5Z" stroke="#728daf"/><path d="M1023.7 567.2L1030.9 563.5L1028.8 558.5L1021.6 560.6Z" stroke="#748aaf"/><path d="M1016.5 572.8L1023.7 567.2L1021.6 560.6L1014.4 564.9Z" stroke="#748aaf"/><path d="M1009.3 579.7L1016.5 572.8L1014.4 564.9L1007.2 571.1Z" stroke="#7783ad"/><path d="M1002.1 587.5L1009.3 579.7L1007.2 571.1L1000 578.6Z" stroke="#7880ac"/><path d="M994.9 595.3L1002.1 587.5L1000 578.6L992.8 586.7Z" stroke="#7b79aa"/><path d="M1277.7 548.6L1284.9 553.4L1282.9 544.8L1275.7 539.5Z" stroke="#7c76a9"/><path d="M1270.5 543.5L1277.7 548.6L1275.7 539.5L1268.5 534.3Z" stroke="#7b79aa"/><path d="M1263.3 538.7L1270.5 543.5L1268.5 534.3L1261.3 529.9Z" stroke="#7880ac"/><path d="M1256.1 534.8L1263.3 538.7L1261.3 529.9L1254.1 526.9Z" stroke="#7587ae"/><path d="M1248.9 532.2L1256.1 534.8L1254.1 526.9L1246.9 525.6Z" stroke="#748aaf"/><path d="M1241.7 531.3L1248.9 532.2L1246.9 525.6L1239.7 526.4Z" stroke="#748aaf"/><path d="M1234.5 532.2L1241.7 531.3L1239.7 526.4L1232.5 529.3Z" stroke="#728daf"/><path d="M1227.3 534.8L1234.5 532.2L1232.5 529.3L1225.3 534Z" stroke="#748aaf"/><path d="M1220.1 539.1L1227.3 534.8L1225.3 534L1218.1 540.2Z" stroke="#7587ae"/><path d="M1212.9 544.5L1220.1 539.1L1218.1 540.2L1210.9 547.5Z" stroke="#7783ad"/><path d="M1205.7 550.8L1212.9 544.5L1210.9 547.5L1203.7 555.3Z" stroke="#7a7dab"/><path d="M1198.5 557.4L1205.7 550.8L1203.7 555.3L1196.5 563.1Z" stroke="#7b79aa"/><path d="M1191.3 564.1L1198.5 557.4L1196.5 563.1L1189.3 570.6Z" stroke="#7d73a7"/><path d="M1184.1 570.5L1191.3 564.1L1189.3 570.6L1182.1 577.3Z" stroke="#7e6ca3"/><path d="M1176.9 576.3L1184.1 570.5L1182.1 577.3L1174.9 583.3Z" stroke="#7f68a0"/><path d="M1169.7 581.4L1176.9 576.3L1174.9 583.3L1167.7 588.2Z" stroke="#7f659d"/><path d="M1162.5 585.6L1169.7 581.4L1167.7 588.2L1160.5 592.2Z" stroke="#7f619a"/><path d="M1155.3 589L1162.5 585.6L1160.5 592.2L1153.3 595.4Z" stroke="#7f5d97"/><path d="M1148.1 591.5L1155.3 589L1153.3 595.4L1146.1 597.7Z" stroke="#7f5d97"/><path d="M1140.9 593.2L1148.1 591.5L1146.1 597.7L1138.9 599.3Z" stroke="#7f5d97"/><path d="M1133.7 594.1L1140.9 593.2L1138.9 599.3L1131.7 600.2Z" stroke="#7f5d97"/><path d="M1126.5 594L1133.7 594.1L1131.7 600.2L1124.5 600.4Z" stroke="#7f5d97"/><path d="M1119.3 593.2L1126.5 594L1124.5 600.4L1117.3 599.8Z" stroke="#7f5d97"/><path d="M1112.1 591.5L1119.3 593.2L1117.3 599.8L1110.1 598.3Z" stroke="#7f619a"/><path d="M1104.9 588.9L1112.1 591.5L1110.1 598.3L1102.9 595.9Z" stroke="#7f659d"/><path d="M1097.7 585.6L1104.9 588.9L1102.9 595.9L1095.7 592.5Z" stroke="#7f68a0"/><path d="M1090.5 581.8L1097.7 585.6L1095.7 592.5L1088.5 588.2Z" stroke="#7e6ca3"/><path d="M1083.3 577.6L1090.5 581.8L1088.5 588.2L1081.3 583.3Z" stroke="#7d73a7"/><path d="M1076.1 573.5L1083.3 577.6L1081.3 583.3L1074.1 578Z" stroke="#7b79aa"/><path d="M1068.9 569.7L1076.1 573.5L1074.1 578L1066.9 572.7Z" stroke="#7a7dab"/><path d="M1061.7 566.8L1068.9 569.7L1066.9 572.7L1059.7 568Z" stroke="#7783ad"/><path d="M1054.5 565.1L1061.7 566.8L1059.7 568L1052.5 564.3Z" stroke="#7587ae"/><path d="M1047.3 565L1054.5 565.1L1052.5 564.3L1045.3 562.1Z" stroke="#748aaf"/><path d="M1040.1 566.6L1047.3 565L1045.3 562.1L1038.1 561.8Z" stroke="#728daf"/><path d="M1032.9 570L1040.1 566.6L1038.1 561.8L1030.9 563.5Z" stroke="#748aaf"/><path d="M1025.7 575.1L1032.9 570L1030.9 563.5L1023.7 567.2Z" stroke="#748aaf"/><path d="M1018.5 581.6L1025.7 575.1L1023.7 567.2L1016.5 572.8Z" stroke="#7587ae"/><path d="M1011.3 589L1018.5 581.6L1016.5 572.8L1009.3 579.7Z" stroke="#7880ac"/><path d="M1004.1 596.6L1011.3 589L1009.3 579.7L1002.1 587.5Z" stroke="#7b79aa"/><path d="M996.9 603.9L1004.1 596.6L1002.1 587.5L994.9 595.3Z" stroke="#7c76a9"/><path d="M1279.7 557.7L1286.9 561.6L1284.9 553.4L1277.7 548.6Z" stroke="#7e6fa5"/><path d="M1272.5 553L1279.7 557.7L1277.7 548.6L1270.5 543.5Z" stroke="#7c76a9"/><path d="M1265.3 548.2L1272.5 553L1270.5 543.5L1263.3 538.7Z" stroke="#7a7dab"/><path d="M1258.1 543.8L1265.3 548.2L1263.3 538.7L1256.1 534.8Z" stroke="#7880ac"/><path d="M1250.9 540.2L1258.1 543.8L1256.1 534.8L1248.9 532.2Z" stroke="#7587ae"/><path d="M1243.7 537.9L1250.9 540.2L1248.9 532.2L1241.7 531.3Z" stroke="#748aaf"/><path d="M1236.5 537.1L1243.7 537.9L1241.7 531.3L1234.5 532.2Z" stroke="#748aaf"/><path d="M1229.3 537.9L1236.5 537.1L1234.5 532.2L1227.3 534.8Z" stroke="#728daf"/><path d="M1222.1 540.1L1229.3 537.9L1227.3 534.8L1220.1 539.1Z" stroke="#748aaf"/><path d="M1214.9 543.6L1222.1 540.1L1220.1 539.1L1212.9 544.5Z" stroke="#7587ae"/><path d="M1207.7 548.1L1214.9 543.6L1212.9 544.5L1205.7 550.8Z" stroke="#7783ad"/><path d="M1200.5 553.2L1207.7 548.1L1205.7 550.8L1198.5 557.4Z" stroke="#7880ac"/><path d="M1193.3 558.7L1200.5 553.2L1198.5 557.4L1191.3 564.1Z" stroke="#7a7dab"/><path d="M1186.1 564.1L1193.3 558.7L1191.3 564.1L1184.1 570.5Z" stroke="#7c76a9"/><path d="M1178.9 569.3L1186.1 564.1L1184.1 570.5L1176.9 576.3Z" stroke="#7d73a7"/><path d="M1171.7 573.9L1178.9 569.3L1176.9 576.3L1169.7 581.4Z" stroke="#7e6fa5"/><path d="M1164.5 578L1171.7 573.9L1169.7 581.4L1162.5 585.6Z" stroke="#7e6ca3"/><path d="M1157.3 581.3L1164.5 578L1162.5 585.6L1155.3 589Z" stroke="#7f68a0"/><path d="M1150.1 583.8L1157.3 581.3L1155.3 589L1148.1 591.5Z" stroke="#7f68a0"/><path d="M1142.9 585.4L1150.1 583.8L1148.1 591.5L1140.9 593.2Z" stroke="#7f68a0"/><path d="M1135.7 586.3L1142.9 585.4L1140.9 593.2L1133.7 594.1Z" stroke="#7f68a0"/><path d="M1128.5 586.3L1135.7 586.3L1133.7 594.1L1126.5 594Z" stroke="#7f68a0"/><path d="M1121.3 585.5L1128.5 586.3L1126.5 594L1119.3 593.2Z" stroke="#7f68a0"/><path d="M1114.1 584L1121.3 585.5L1119.3 593.2L1112.1 591.5Z" stroke="#7e6ca3"/><path d="M1106.9 581.9L1114.1 584L1112.1 591.5L1104.9 588.9Z" stroke="#7e6fa5"/><path d="M1099.7 579.3L1106.9 581.9L1104.9 588.9L1097.7 585.6Z" stroke="#7d73a7"/><path d="M1092.5 576.3L1099.7 579.3L1097.7 585.6L1090.5 581.8Z" stroke="#7c76a9"/><path d="M1085.3 573.4L1092.5 576.3L1090.5 581.8L1083.3 577.6Z" stroke="#7a7dab"/><path d="M1078.1 570.8L1085.3 573.4L1083.3 577.6L1076.1 573.5Z" stroke="#7880ac"/><path d="M1070.9 568.8L1078.1 570.8L1076.1 573.5L1068.9 569.7Z" stroke="#7783ad"/><path d="M1063.7 567.9L1070.9 568.8L1068.9 569.7L1061.7 566.8Z" stroke="#7587ae"/><path d="M1056.5 568.2L1063.7 567.9L1061.7 566.8L1054.5 565.1Z" stroke="#748aaf"/><path d="M1049.3 569.9L1056.5 568.2L1054.5 565.1L1047.3 565Z" stroke="#728daf"/><path d="M1042.1 573.3L1049.3 569.9L1047.3 565L1040.1 566.6Z" stroke="#748aaf"/><path d="M1034.9 578.1L1042.1 573.3L1040.1 566.6L1032.9 570Z" stroke="#748aaf"/><path d="M1027.7 584.2L1034.9 578.1L1032.9 570L1025.7 575.1Z" stroke="#7587ae"/><path d="M1020.5 591.1L1027.7 584.2L1025.7 575.1L1018.5 581.6Z" stroke="#7880ac"/><path d="M1013.3 598.5L1020.5 591.1L1018.5 581.6L1011.3 589Z" stroke="#7a7dab"/><path d="M1006.1 605.7L1013.3 598.5L1011.3 589L1004.1 596.6Z" stroke="#7c76a9"/><path d="M998.9 612.1L1006.1 605.7L1004.1 596.6L996.9 603.9Z" stroke="#7e6fa5"/><path d="M1281.7 566.4L1288.9 569.3L1286.9 561.6L1279.7 557.7Z" stroke="#7e6ca3"/><path d="M1274.5 562.6L1281.7 566.4L1279.7 557.7L1272.5 553Z" stroke="#7d73a7"/><path d="M1267.3 558.1L1274.5 562.6L1272.5 553L1265.3 548.2Z" stroke="#7c76a9"/><path d="M1260.1 553.6L1267.3 558.1L1265.3 548.2L1258.1 543.8Z" stroke="#7a7dab"/><path d="M1252.9 549.5L1260.1 553.6L1258.1 543.8L1250.9 540.2Z" stroke="#7783ad"/><path d="M1245.7 546.3L1252.9 549.5L1250.9 540.2L1243.7 537.9Z" stroke="#7587ae"/><path d="M1238.5 544.1L1245.7 546.3L1243.7 537.9L1236.5 537.1Z" stroke="#748aaf"/><path d="M1231.3 543.2L1238.5 544.1L1236.5 537.1L1229.3 537.9Z" stroke="#748aaf"/><path d="M1224.1 543.6L1231.3 543.2L1229.3 537.9L1222.1 540.1Z" stroke="#728daf"/><path d="M1216.9 545.2L1224.1 543.6L1222.1 540.1L1214.9 543.6Z" stroke="#748aaf"/><path d="M1209.7 547.9L1216.9 545.2L1214.9 543.6L1207.7 548.1Z" stroke="#748aaf"/><path d="M1202.5 551.3L1209.7 547.9L1207.7 548.1L1200.5 553.2Z" stroke="#7587ae"/><path d="M1195.3 555.3L1202.5 551.3L1200.5 553.2L1193.3 558.7Z" stroke="#7783ad"/><path d="M1188.1 559.5L1195.3 555.3L1193.3 558.7L1186.1 564.1Z" stroke="#7880ac"/><path d="M1180.9 563.6L1188.1 559.5L1186.1 564.1L1178.9 569.3Z" stroke="#7a7dab"/><path d="M1173.7 567.6L1180.9 563.6L1178.9 569.3L1171.7 573.9Z" stroke="#7b79aa"/><path d="M1166.5 571.1L1173.7 567.6L1171.7 573.9L1164.5 578Z" stroke="#7c76a9"/><path d="M1159.3 574L1166.5 571.1L1164.5 578L1157.3 581.3Z" stroke="#7c76a9"/><path d="M1152.1 576.3L1159.3 574L1157.3 581.3L1150.1 583.8Z" stroke="#7d73a7"/><path d="M1144.9 577.9L1152.1 576.3L1150.1 583.8L1142.9 585.4Z" stroke="#7d73a7"/><path d="M1137.7 578.8L1144.9 577.9L1142.9 585.4L1135.7 586.3Z" stroke="#7d73a7"/><path d="M1130.5 579L1137.7 578.8L1135.7 586.3L1128.5 586.3Z" stroke="#7d73a7"/><path d="M1123.3 578.6L1130.5 579L1128.5 586.3L1121.3 585.5Z" stroke="#7c76a9"/><path d="M1116.1 577.7L1123.3 578.6L1121.3 585.5L1114.1 584Z" stroke="#7c76a9"/><path d="M1108.9 576.3L1116.1 577.7L1114.1 584L1106.9 581.9Z" stroke="#7b79aa"/><path d="M1101.7 574.6L1108.9 576.3L1106.9 581.9L1099.7 579.3Z" stroke="#7a7dab"/><path d="M1094.5 573L1101.7 574.6L1099.7 579.3L1092.5 576.3Z" stroke="#7880ac"/><path d="M1087.3 571.5L1094.5 573L1092.5 576.3L1085.3 573.4Z" stroke="#7783ad"/><path d="M1080.1 570.6L1087.3 571.5L1085.3 573.4L1078.1 570.8Z" stroke="#7587ae"/><path d="M1072.9 570.5L1080.1 570.6L1078.1 570.8L1070.9 568.8Z" stroke="#748aaf"/><path d="M1065.7 571.4L1072.9 570.5L1070.9 568.8L1063.7 567.9Z" stroke="#748aaf"/><path d="M1058.5 573.5L1065.7 571.4L1063.7 567.9L1056.5 568.2Z" stroke="#728daf"/><path d="M1051.3 576.9L1058.5 573.5L1056.5 568.2L1049.3 569.9Z" stroke="#748aaf"/><path d="M1044.1 581.6L1051.3 576.9L1049.3 569.9L1042.1 573.3Z" stroke="#748aaf"/><path d="M1036.9 587.4L1044.1 581.6L1042.1 573.3L1034.9 578.1Z" stroke="#7587ae"/><path d="M1029.7 594L1036.9 587.4L1034.9 578.1L1027.7 584.2Z" stroke="#7783ad"/><path d="M1022.5 601L1029.7 594L1027.7 584.2L1020.5 591.1Z" stroke="#7a7dab"/><path d="M1015.3 608L1022.5 601L1020.5 591.1L1013.3 598.5Z" stroke="#7c76a9"/><path d="M1008.1 614.4L1015.3 608L1013.3 598.5L1006.1 605.7Z" stroke="#7d73a7"/><path d="M1000.9 619.8L1008.1 614.4L1006.1 605.7L998.9 612.1Z" stroke="#7e6ca3"/><path d="M1283.7 574.5L1290.9 576.1L1288.9 569.3L1281.7 566.4Z" stroke="#7f68a0"/><path d="M1276.5 571.7L1283.7 574.5L1281.7 566.4L1274.5 562.6Z" stroke="#7e6ca3"/><path d="M1269.3 568L1276.5 571.7L1274.5 562.6L1267.3 558.1Z" stroke="#7d73a7"/><path d="M1262.1 563.9L1269.3 568L1267.3 558.1L1260.1 553.6Z" stroke="#7c76a9"/><path d="M1254.9 559.7L1262.1 563.9L1260.1 553.6L1252.9 549.5Z" stroke="#7a7dab"/><path d="M1247.7 555.9L1254.9 559.7L1252.9 549.5L1245.7 546.3Z" stroke="#7880ac"/><path d="M1240.5 552.9L1247.7 555.9L1245.7 546.3L1238.5 544.1Z" stroke="#7587ae"/><path d="M1233.3 550.8L1240.5 552.9L1238.5 544.1L1231.3 543.2Z" stroke="#748aaf"/><path d="M1226.1 549.7L1233.3 550.8L1231.3 543.2L1224.1 543.6Z" stroke="#748aaf"/><path d="M1218.9 549.7L1226.1 549.7L1224.1 543.6L1216.9 545.2Z" stroke="#728daf"/><path d="M1211.7 550.6L1218.9 549.7L1216.9 545.2L1209.7 547.9Z" stroke="#748aaf"/><path d="M1204.5 552.4L1211.7 550.6L1209.7 547.9L1202.5 551.3Z" stroke="#748aaf"/><path d="M1197.3 554.8L1204.5 552.4L1202.5 551.3L1195.3 555.3Z" stroke="#748aaf"/><path d="M1190.1 557.6L1197.3 554.8L1195.3 555.3L1188.1 559.5Z" stroke="#7587ae"/><path d="M1182.9 560.6L1190.1 557.6L1188.1 559.5L1180.9 563.6Z" stroke="#7587ae"/><path d="M1175.7 563.6L1182.9 560.6L1180.9 563.6L1173.7 567.6Z" stroke="#7783ad"/><path d="M1168.5 566.3L1175.7 563.6L1173.7 567.6L1166.5 571.1Z" stroke="#7880ac"/><path d="M1161.3 568.8L1168.5 566.3L1166.5 571.1L1159.3 574Z" stroke="#7880ac"/><path d="M1154.1 570.8L1161.3 568.8L1159.3 574L1152.1 576.3Z" stroke="#7880ac"/><path d="M1146.9 572.3L1154.1 570.8L1152.1 576.3L1144.9 577.9Z" stroke="#7a7dab"/><path d="M1139.7 573.3L1146.9 572.3L1144.9 577.9L1137.7 578.8Z" stroke="#7a7dab"/><path d="M1132.5 573.8L1139.7 573.3L1137.7 578.8L1130.5 579Z" stroke="#7880ac"/><path d="M1125.3 573.9L1132.5 573.8L1130.5 579L1123.3 578.6Z" stroke="#7880ac"/><path d="M1118.1 573.7L1125.3 573.9L1123.3 578.6L1116.1 577.7Z" stroke="#7880ac"/><path d="M1110.9 573.2L1118.1 573.7L1116.1 577.7L1108.9 576.3Z" stroke="#7783ad"/><path d="M1103.7 572.8L1110.9 573.2L1108.9 576.3L1101.7 574.6Z" stroke="#7587ae"/><path d="M1096.5 572.5L1103.7 572.8L1101.7 574.6L1094.5 573Z" stroke="#7587ae"/><path d="M1089.3 572.6L1096.5 572.5L1094.5 573L1087.3 571.5Z" stroke="#748aaf"/><path d="M1082.1 573.3L1089.3 572.6L1087.3 571.5L1080.1 570.6Z" stroke="#748aaf"/><path d="M1074.9 574.9L1082.1 573.3L1080.1 570.6L1072.9 570.5Z" stroke="#748aaf"/><path d="M1067.7 577.4L1074.9 574.9L1072.9 570.5L1065.7 571.4Z" stroke="#728daf"/><path d="M1060.5 581.1L1067.7 577.4L1065.7 571.4L1058.5 573.5Z" stroke="#748aaf"/><path d="M1053.3 585.7L1060.5 581.1L1058.5 573.5L1051.3 576.9Z" stroke="#748aaf"/><path d="M1046.1 591.3L1053.3 585.7L1051.3 576.9L1044.1 581.6Z" stroke="#7587ae"/><path d="M1038.9 597.6L1046.1 591.3L1044.1 581.6L1036.9 587.4Z" stroke="#7880ac"/><path d="M1031.7 604.2L1038.9 597.6L1036.9 587.4L1029.7 594Z" stroke="#7a7dab"/><path d="M1024.5 610.9L1031.7 604.2L1029.7 594L1022.5 601Z" stroke="#7c76a9"/><path d="M1017.3 617.1L1024.5 610.9L1022.5 601L1015.3 608Z" stroke="#7d73a7"/><path d="M1010.1 622.5L1017.3 617.1L1015.3 608L1008.1 614.4Z" stroke="#7e6ca3"/><path d="M1002.9 626.5L1010.1 622.5L1008.1 614.4L1000.9 619.8Z" stroke="#7f68a0"/><path d="M1285.8 581.6L1293 581.8L1290.9 576.1L1283.7 574.5Z" stroke="#7f68a0"/><path d="M1278.6 580.1L1285.8 581.6L1283.7 574.5L1276.5 571.7Z" stroke="#7f68a0"/><path d="M1271.4 577.4L1278.6 580.1L1276.5 571.7L1269.3 568Z" stroke="#7e6fa5"/><path d="M1264.2 574.1L1271.4 577.4L1269.3 568L1262.1 563.9Z" stroke="#7d73a7"/><path d="M1257 570.3L1264.2 574.1L1262.1 563.9L1254.9 559.7Z" stroke="#7c76a9"/><path d="M1249.8 566.5L1257 570.3L1254.9 559.7L1247.7 555.9Z" stroke="#7a7dab"/><path d="M1242.6 563.1L1249.8 566.5L1247.7 555.9L1240.5 552.9Z" stroke="#7880ac"/><path d="M1235.4 560.2L1242.6 563.1L1240.5 552.9L1233.3 550.8Z" stroke="#7783ad"/><path d="M1228.2 558L1235.4 560.2L1233.3 550.8L1226.1 549.7Z" stroke="#7587ae"/><path d="M1221 556.8L1228.2 558L1226.1 549.7L1218.9 549.7Z" stroke="#748aaf"/><path d="M1213.8 556.3L1221 556.8L1218.9 549.7L1211.7 550.6Z" stroke="#748aaf"/><path d="M1206.6 556.6L1213.8 556.3L1211.7 550.6L1204.5 552.4Z" stroke="#728daf"/><path d="M1199.4 557.6L1206.6 556.6L1204.5 552.4L1197.3 554.8Z" stroke="#748aaf"/><path d="M1192.2 559.1L1199.4 557.6L1197.3 554.8L1190.1 557.6Z" stroke="#748aaf"/><path d="M1185 560.9L1192.2 559.1L1190.1 557.6L1182.9 560.6Z" stroke="#748aaf"/><path d="M1177.8 562.9L1185 560.9L1182.9 560.6L1175.7 563.6Z" stroke="#748aaf"/><path d="M1170.6 564.9L1177.8 562.9L1175.7 563.6L1168.5 566.3Z" stroke="#7587ae"/><path d="M1163.4 566.8L1170.6 564.9L1168.5 566.3L1161.3 568.8Z" stroke="#7587ae"/><path d="M1156.2 568.4L1163.4 566.8L1161.3 568.8L1154.1 570.8Z" stroke="#7587ae"/><path d="M1149 569.8L1156.2 568.4L1154.1 570.8L1146.9 572.3Z" stroke="#7587ae"/><path d="M1141.8 570.9L1149 569.8L1146.9 572.3L1139.7 573.3Z" stroke="#7587ae"/><path d="M1134.6 571.8L1141.8 570.9L1139.7 573.3L1132.5 573.8Z" stroke="#7587ae"/><path d="M1127.4 572.5L1134.6 571.8L1132.5 573.8L1125.3 573.9Z" stroke="#7587ae"/><path d="M1120.2 573L1127.4 572.5L1125.3 573.9L1118.1 573.7Z" stroke="#7587ae"/><path d="M1113 573.5L1120.2 573L1118.1 573.7L1110.9 573.2Z" stroke="#748aaf"/><path d="M1105.8 574.3L1113 573.5L1110.9 573.2L1103.7 572.8Z" stroke="#748aaf"/><path d="M1098.6 575.3L1105.8 574.3L1103.7 572.8L1096.5 572.5Z" stroke="#748aaf"/><path d="M1091.4 576.8L1098.6 575.3L1096.5 572.5L1089.3 572.6Z" stroke="#748aaf"/><path d="M1084.2 579L1091.4 576.8L1089.3 572.6L1082.1 573.3Z" stroke="#728daf"/><path d="M1077 582L1084.2 579L1082.1 573.3L1074.9 574.9Z" stroke="#748aaf"/><path d="M1069.8 585.8L1077 582L1074.9 574.9L1067.7 577.4Z" stroke="#748aaf"/><path d="M1062.6 590.5L1069.8 585.8L1067.7 577.4L1060.5 581.1Z" stroke="#7587ae"/><path d="M1055.4 595.9L1062.6 590.5L1060.5 581.1L1053.3 585.7Z" stroke="#7783ad"/><path d="M1048.2 601.9L1055.4 595.9L1053.3 585.7L1046.1 591.3Z" stroke="#7880ac"/><path d="M1041 608.2L1048.2 601.9L1046.1 591.3L1038.9 597.6Z" stroke="#7a7dab"/><path d="M1033.8 614.4L1041 608.2L1038.9 597.6L1031.7 604.2Z" stroke="#7c76a9"/><path d="M1026.6 620.3L1033.8 614.4L1031.7 604.2L1024.5 610.9Z" stroke="#7d73a7"/><path d="M1019.4 625.5L1026.6 620.3L1024.5 610.9L1017.3 617.1Z" stroke="#7e6fa5"/><path d="M1012.2 629.6L1019.4 625.5L1017.3 617.1L1010.1 622.5Z" stroke="#7f68a0"/><path d="M1005 632.3L1012.2 629.6L1010.1 622.5L1002.9 626.5Z" stroke="#7f68a0"/><path d="M1287.8 587.5L1295 586.3L1293 581.8L1285.8 581.6Z" stroke="#7f659d"/><path d="M1280.6 587.3L1287.8 587.5L1285.8 581.6L1278.6 580.1Z" stroke="#7f68a0"/><path d="M1273.4 586L1280.6 587.3L1278.6 580.1L1271.4 577.4Z" stroke="#7f68a0"/><path d="M1266.2 583.7L1273.4 586L1271.4 577.4L1264.2 574.1Z" stroke="#7e6ca3"/><path d="M1259 580.7L1266.2 583.7L1264.2 574.1L1257 570.3Z" stroke="#7d73a7"/><path d="M1251.8 577.4L1259 580.7L1257 570.3L1249.8 566.5Z" stroke="#7c76a9"/><path d="M1244.6 574L1251.8 577.4L1249.8 566.5L1242.6 563.1Z" stroke="#7b79aa"/><path d="M1237.4 570.9L1244.6 574L1242.6 563.1L1235.4 560.2Z" stroke="#7880ac"/><path d="M1230.2 568.2L1237.4 570.9L1235.4 560.2L1228.2 558Z" stroke="#7783ad"/><path d="M1223 566.1L1230.2 568.2L1228.2 558L1221 556.8Z" stroke="#7587ae"/><path d="M1215.8 564.7L1223 566.1L1221 556.8L1213.8 556.3Z" stroke="#7587ae"/><path d="M1208.6 563.9L1215.8 564.7L1213.8 556.3L1206.6 556.6Z" stroke="#748aaf"/><path d="M1201.4 563.7L1208.6 563.9L1206.6 556.6L1199.4 557.6Z" stroke="#748aaf"/><path d="M1194.2 564.1L1201.4 563.7L1199.4 557.6L1192.2 559.1Z" stroke="#748aaf"/><path d="M1187 564.8L1194.2 564.1L1192.2 559.1L1185 560.9Z" stroke="#728daf"/><path d="M1179.8 565.9L1187 564.8L1185 560.9L1177.8 562.9Z" stroke="#748aaf"/><path d="M1172.6 567.2L1179.8 565.9L1177.8 562.9L1170.6 564.9Z" stroke="#748aaf"/><path d="M1165.4 568.5L1172.6 567.2L1170.6 564.9L1163.4 566.8Z" stroke="#748aaf"/><path d="M1158.2 569.8L1165.4 568.5L1163.4 566.8L1156.2 568.4Z" stroke="#748aaf"/><path d="M1151 571.1L1158.2 569.8L1156.2 568.4L1149 569.8Z" stroke="#748aaf"/><path d="M1143.8 572.4L1151 571.1L1149 569.8L1141.8 570.9Z" stroke="#748aaf"/><path d="M1136.6 573.6L1143.8 572.4L1141.8 570.9L1134.6 571.8Z" stroke="#748aaf"/><path d="M1129.4 574.7L1136.6 573.6L1134.6 571.8L1127.4 572.5Z" stroke="#748aaf"/><path d="M1122.2 576L1129.4 574.7L1127.4 572.5L1120.2 573Z" stroke="#748aaf"/><path d="M1115 577.5L1122.2 576L1120.2 573L1113 573.5Z" stroke="#748aaf"/><path d="M1107.8 579.2L1115 577.5L1113 573.5L1105.8 574.3Z" stroke="#728daf"/><path d="M1100.6 581.4L1107.8 579.2L1105.8 574.3L1098.6 575.3Z" stroke="#748aaf"/><path d="M1093.4 584.1L1100.6 581.4L1098.6 575.3L1091.4 576.8Z" stroke="#748aaf"/><path d="M1086.2 587.4L1093.4 584.1L1091.4 576.8L1084.2 579Z" stroke="#748aaf"/><path d="M1079 591.3L1086.2 587.4L1084.2 579L1077 582Z" stroke="#7587ae"/><path d="M1071.8 596L1079 591.3L1077 582L1069.8 585.8Z" stroke="#7587ae"/><path d="M1064.6 601.2L1071.8 596L1069.8 585.8L1062.6 590.5Z" stroke="#7783ad"/><path d="M1057.4 606.8L1064.6 601.2L1062.6 590.5L1055.4 595.9Z" stroke="#7880ac"/><path d="M1050.2 612.7L1057.4 606.8L1055.4 595.9L1048.2 601.9Z" stroke="#7b79aa"/><path d="M1043 618.6L1050.2 612.7L1048.2 601.9L1041 608.2Z" stroke="#7c76a9"/><path d="M1035.8 624.1L1043 618.6L1041 608.2L1033.8 614.4Z" stroke="#7d73a7"/><path d="M1028.6 628.9L1035.8 624.1L1033.8 614.4L1026.6 620.3Z" stroke="#7e6ca3"/><path d="M1021.4 632.8L1028.6 628.9L1026.6 620.3L1019.4 625.5Z" stroke="#7f68a0"/><path d="M1014.2 635.5L1021.4 632.8L1019.4 625.5L1012.2 629.6Z" stroke="#7f68a0"/><path d="M1007 636.8L1014.2 635.5L1012.2 629.6L1005 632.3Z" stroke="#7f659d"/><path d="M1289.8 592.1L1297 589.6L1295 586.3L1287.8 587.5Z" stroke="#7f659d"/><path d="M1282.6 593.3L1289.8 592.1L1287.8 587.5L1280.6 587.3Z" stroke="#7f659d"/><path d="M1275.4 593.3L1282.6 593.3L1280.6 587.3L1273.4 586Z" stroke="#7f68a0"/><path d="M1268.2 592.3L1275.4 593.3L1273.4 586L1266.2 583.7Z" stroke="#7f68a0"/><path d="M1261 590.4L1268.2 592.3L1266.2 583.7L1259 580.7Z" stroke="#7e6ca3"/><path d="M1253.8 587.9L1261 590.4L1259 580.7L1251.8 577.4Z" stroke="#7e6fa5"/><path d="M1246.6 585.1L1253.8 587.9L1251.8 577.4L1244.6 574Z" stroke="#7c76a9"/><path d="M1239.4 582.2L1246.6 585.1L1244.6 574L1237.4 570.9Z" stroke="#7b79aa"/><path d="M1232.2 579.5L1239.4 582.2L1237.4 570.9L1230.2 568.2Z" stroke="#7a7dab"/><path d="M1225 577L1232.2 579.5L1230.2 568.2L1223 566.1Z" stroke="#7880ac"/><path d="M1217.8 575.1L1225 577L1223 566.1L1215.8 564.7Z" stroke="#7783ad"/><path d="M1210.6 573.6L1217.8 575.1L1215.8 564.7L1208.6 563.9Z" stroke="#7587ae"/><path d="M1203.4 572.6L1210.6 573.6L1208.6 563.9L1201.4 563.7Z" stroke="#7587ae"/><path d="M1196.2 572.2L1203.4 572.6L1201.4 563.7L1194.2 564.1Z" stroke="#748aaf"/><path d="M1189 572.1L1196.2 572.2L1194.2 564.1L1187 564.8Z" stroke="#748aaf"/><path d="M1181.8 572.5L1189 572.1L1187 564.8L1179.8 565.9Z" stroke="#748aaf"/><path d="M1174.6 573.2L1181.8 572.5L1179.8 565.9L1172.6 567.2Z" stroke="#748aaf"/><path d="M1167.4 574L1174.6 573.2L1172.6 567.2L1165.4 568.5Z" stroke="#748aaf"/><path d="M1160.2 575.1L1167.4 574L1165.4 568.5L1158.2 569.8Z" stroke="#728daf"/><path d="M1153 576.3L1160.2 575.1L1158.2 569.8L1151 571.1Z" stroke="#728daf"/><path d="M1145.8 577.6L1153 576.3L1151 571.1L1143.8 572.4Z" stroke="#728daf"/><path d="M1138.6 579.1L1145.8 577.6L1143.8 572.4L1136.6 573.6Z" stroke="#728daf"/><path d="M1131.4 580.7L1138.6 579.1L1136.6 573.6L1129.4 574.7Z" stroke="#748aaf"/><path d="M1124.2 582.6L1131.4 580.7L1129.4 574.7L1122.2 576Z" stroke="#748aaf"/><path d="M1117 584.8L1124.2 582.6L1122.2 576L1115 577.5Z" stroke="#748aaf"/><path d="M1109.8 587.3L1117 584.8L1115 577.5L1107.8 579.2Z" stroke="#748aaf"/><path d="M1102.6 590.3L1109.8 587.3L1107.8 579.2L1100.6 581.4Z" stroke="#748aaf"/><path d="M1095.4 593.8L1102.6 590.3L1100.6 581.4L1093.4 584.1Z" stroke="#7587ae"/><path d="M1088.2 597.8L1095.4 593.8L1093.4 584.1L1086.2 587.4Z" stroke="#7587ae"/><path d="M1081 602.3L1088.2 597.8L1086.2 587.4L1079 591.3Z" stroke="#7783ad"/><path d="M1073.8 607.2L1081 602.3L1079 591.3L1071.8 596Z" stroke="#7880ac"/><path d="M1066.6 612.5L1073.8 607.2L1071.8 596L1064.6 601.2Z" stroke="#7a7dab"/><path d="M1059.4 617.9L1066.6 612.5L1064.6 601.2L1057.4 606.8Z" stroke="#7b79aa"/><path d="M1052.2 623.2L1059.4 617.9L1057.4 606.8L1050.2 612.7Z" stroke="#7c76a9"/><path d="M1045 628.3L1052.2 623.2L1050.2 612.7L1043 618.6Z" stroke="#7e6fa5"/><path d="M1037.8 632.7L1045 628.3L1043 618.6L1035.8 624.1Z" stroke="#7e6ca3"/><path d="M1030.6 636.2L1037.8 632.7L1035.8 624.1L1028.6 628.9Z" stroke="#7f68a0"/><path d="M1023.4 638.7L1030.6 636.2L1028.6 628.9L1021.4 632.8Z" stroke="#7f68a0"/><path d="M1016.2 640L1023.4 638.7L1021.4 632.8L1014.2 635.5Z" stroke="#7f659d"/><path d="M1009 640L1016.2 640L1014.2 635.5L1007 636.8Z" stroke="#7f659d"/></g>
<path d="M983.1 727.4L1163.1 695.9" stroke="#b0b0b0" fill="none" stroke-dasharray="2 2" stroke-width="1.3"/>
<path d="M1163.1 695.9L1343.1 664.3" stroke="#383838" fill="none" stroke-width="1.2"/>
<path d="M983.1 727.4L932.6 615.2" stroke="#b0b0b0" fill="none" stroke-dasharray="2 2" stroke-width="1.3"/>
<path d="M932.6 615.2L882.1 503" stroke="#383838" fill="none" stroke-width="1.2"/>
<path d="M882.1 503L882.1 373.2" stroke="#383838" fill="none" stroke-width="1.2"/>
<path d="M882.1 373.2L882.1 243.4" stroke="#d0d0d0" fill="none" stroke-width="1.6"/>
<path d="M983.1 727.4L987.2 736.5M1073.1 711.6L1077.2 720.7M1163.1 695.9L1167.2 705M1253.1 680.1L1257.2 689.2M1343.1 664.3L1347.2 673.4M983.1 727.4L973.7 729M957.9 671.3L948.5 672.9M932.6 615.2L923.2 616.8M907.4 559.1L898 560.7M882.1 503L872.7 504.6M882.1 503L878.7 495.5M882.1 465.9L878.7 458.4M882.1 428.8L878.7 421.4M882.1 391.7L878.7 384.3M882.1 354.7L878.7 347.2M882.1 317.6L878.7 310.1M882.1 280.5L878.7 273M882.1 243.4L878.7 235.9" stroke="#383838" stroke-width="1.1" fill="none"/>
<g font-family="Liberation Sans, Arial, sans-serif" font-size="10.6" letter-spacing=".35" fill="#404040"><text x="990.1" y="752">-10</text><text x="1080.1" y="736.2">-5</text><text x="1170.1" y="720.5">0</text><text x="1260.1" y="704.7">5</text><text x="1350.1" y="688.9">10</text><text x="967.1" y="738.7" text-anchor="end">-10</text><text x="941.9" y="682.6" text-anchor="end">-5</text><text x="916.6" y="626.5" text-anchor="end">0</text><text x="891.4" y="570.4" text-anchor="end">5</text><text x="866.1" y="514.3" text-anchor="end">10</text><text x="875" y="488.6" text-anchor="end">-0.4</text><text x="875" y="451.5" text-anchor="end">-0.2</text><text x="875" y="414.4" text-anchor="end">0</text><text x="875" y="377.3" text-anchor="end">0.2</text><text x="875" y="340.3" text-anchor="end">0.4</text><text x="875" y="303.2" text-anchor="end">0.6</text><text x="875" y="266.1" text-anchor="end">0.8</text><text x="875" y="229" text-anchor="end">1</text><text x="1198" y="735" text-anchor="middle" font-size="11.5">tx</text><text x="890" y="641" text-anchor="middle" font-size="11.5">ty</text><text transform="translate(849.3 358.4) rotate(-90)" text-anchor="middle" font-size="11.5">tz</text></g>
<text x="1112.9" y="165.6" text-anchor="middle" font-family="Liberation Sans, Arial, sans-serif" font-weight="bold" font-size="12.7" fill="#1a1a1a">3-D Sombrero plot</text>
</svg>
<div class="abs" id="status"><span class="dj">(-9.1404, 2.0071)</span></div>
<svg class="abs" style="left:1386px;top:813px" width="14" height="14" viewBox="0 0 14 14"><path d="M13 3l-10 10M13 7l-6 6M13 11l-2 2" stroke="#b5b5b5" stroke-width="1" stroke-dasharray="1.500 1.500"/></svg>
</div>
</body></html>
